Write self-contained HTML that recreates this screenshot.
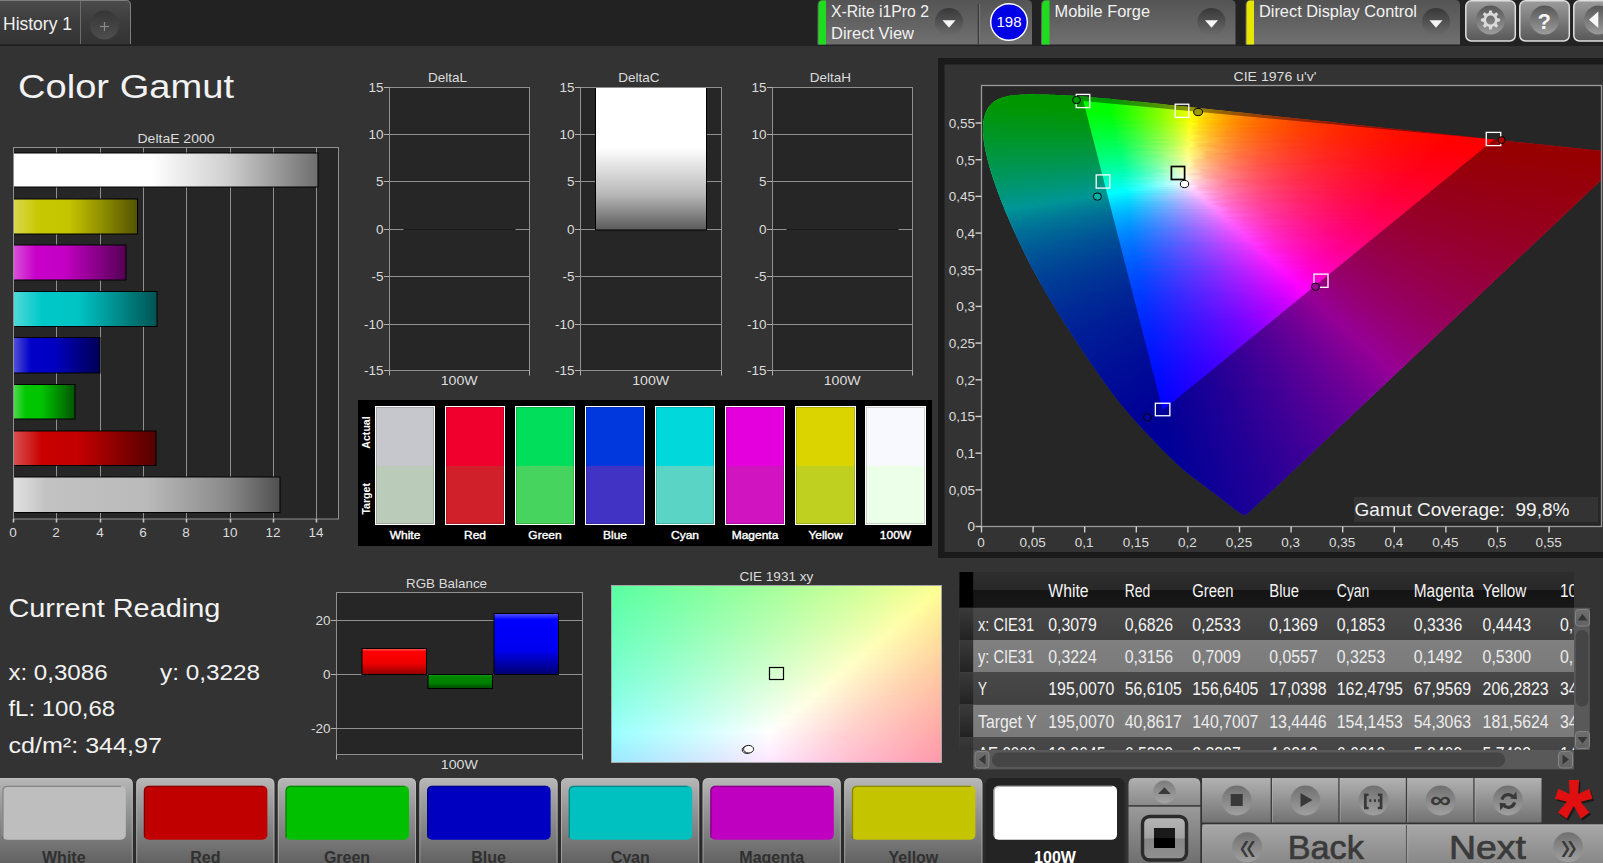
<!DOCTYPE html>
<html lang="en"><head><meta charset="utf-8"><title>Color Gamut</title>
<style>html,body{margin:0;padding:0;background:#333;overflow:hidden}svg{display:block}text{font-family:"Liberation Sans",sans-serif}</style></head>
<body>
<svg width="1603" height="863" viewBox="0 0 1603 863">
<defs>
<linearGradient id="g1" x1="0" y1="0" x2="0" y2="1"><stop offset="0" stop-color="#4c4c4c"/><stop offset="0.5" stop-color="#3c3c3c"/><stop offset="1" stop-color="#333333"/></linearGradient>
<linearGradient id="g2" x1="0" y1="0" x2="0" y2="1"><stop offset="0" stop-color="#363636"/><stop offset="1" stop-color="#4e4e4e"/></linearGradient>
<linearGradient id="g3" x1="0" y1="0" x2="0" y2="1"><stop offset="0" stop-color="#545454"/><stop offset="1" stop-color="#707070"/></linearGradient>
<linearGradient id="g4" x1="0" y1="0" x2="0" y2="1"><stop offset="0" stop-color="#383838"/><stop offset="1" stop-color="#6c6c6c"/></linearGradient>
<linearGradient id="g5" x1="0" y1="0" x2="0" y2="1"><stop offset="0" stop-color="#9c9c9c"/><stop offset="1" stop-color="#585858"/></linearGradient>
<linearGradient id="g6" x1="0" y1="0" x2="0" y2="1"><stop offset="0" stop-color="#565656"/><stop offset="1" stop-color="#9c9c9c"/></linearGradient>
<linearGradient id="g7" x1="0" y1="0" x2="1" y2="0"><stop offset="0" stop-color="#ffffff"/><stop offset="0.45" stop-color="#ffffff"/><stop offset="0.7" stop-color="#d0d0d0"/><stop offset="1" stop-color="#6e6e6e"/></linearGradient>
<linearGradient id="g8" x1="0" y1="0" x2="1" y2="0"><stop offset="0" stop-color="#d9d951"/><stop offset="0.2" stop-color="#c8c800"/><stop offset="0.45" stop-color="#c4c400"/><stop offset="1" stop-color="#545400"/></linearGradient>
<linearGradient id="g9" x1="0" y1="0" x2="1" y2="0"><stop offset="0" stop-color="#d951d9"/><stop offset="0.2" stop-color="#c800c8"/><stop offset="0.45" stop-color="#c400c4"/><stop offset="1" stop-color="#540054"/></linearGradient>
<linearGradient id="g10" x1="0" y1="0" x2="1" y2="0"><stop offset="0" stop-color="#51d9d9"/><stop offset="0.2" stop-color="#00c8c8"/><stop offset="0.45" stop-color="#00c4c4"/><stop offset="1" stop-color="#005454"/></linearGradient>
<linearGradient id="g11" x1="0" y1="0" x2="1" y2="0"><stop offset="0" stop-color="#5151d9"/><stop offset="0.2" stop-color="#0000c8"/><stop offset="0.45" stop-color="#0000c4"/><stop offset="1" stop-color="#000054"/></linearGradient>
<linearGradient id="g12" x1="0" y1="0" x2="1" y2="0"><stop offset="0" stop-color="#51d951"/><stop offset="0.2" stop-color="#00c800"/><stop offset="0.45" stop-color="#00c400"/><stop offset="1" stop-color="#005400"/></linearGradient>
<linearGradient id="g13" x1="0" y1="0" x2="1" y2="0"><stop offset="0" stop-color="#d95151"/><stop offset="0.2" stop-color="#c80000"/><stop offset="0.45" stop-color="#c40000"/><stop offset="1" stop-color="#540000"/></linearGradient>
<linearGradient id="g14" x1="0" y1="0" x2="1" y2="0"><stop offset="0" stop-color="#e2e2e2"/><stop offset="0.12" stop-color="#c2c2c2"/><stop offset="0.5" stop-color="#bababa"/><stop offset="0.8" stop-color="#8a8a8a"/><stop offset="1" stop-color="#505050"/></linearGradient>
<linearGradient id="g15" x1="0" y1="0" x2="0" y2="1"><stop offset="0" stop-color="#ffffff"/><stop offset="0.42" stop-color="#ffffff"/><stop offset="0.75" stop-color="#b8b8b8"/><stop offset="1" stop-color="#5a5a5a"/></linearGradient>
<linearGradient id="g16" x1="1015" y1="0" x2="1061" y2="0" gradientUnits="userSpaceOnUse"><stop offset="0" stop-color="#00ff00"/><stop offset="1" stop-color="#00ff00"/></linearGradient>
<linearGradient id="g17" x1="1003" y1="0" x2="1090" y2="0" gradientUnits="userSpaceOnUse"><stop offset="0" stop-color="#00ff00"/><stop offset="0.92" stop-color="#00ff00"/><stop offset="1" stop-color="#00ff00"/></linearGradient>
<linearGradient id="g18" x1="997" y1="0" x2="1112" y2="0" gradientUnits="userSpaceOnUse"><stop offset="0" stop-color="#00ff00"/><stop offset="0.7" stop-color="#00ff00"/><stop offset="0.97" stop-color="#00ff00"/><stop offset="1" stop-color="#09ff00"/></linearGradient>
<linearGradient id="g19" x1="993" y1="0" x2="1133" y2="0" gradientUnits="userSpaceOnUse"><stop offset="0" stop-color="#00ff00"/><stop offset="0.57" stop-color="#00ff00"/><stop offset="0.83" stop-color="#01ff00"/><stop offset="1" stop-color="#3dff00"/></linearGradient>
<linearGradient id="g20" x1="991" y1="0" x2="1153" y2="0" gradientUnits="userSpaceOnUse"><stop offset="0" stop-color="#00ff00"/><stop offset="0.49" stop-color="#00ff00"/><stop offset="0.73" stop-color="#00ff00"/><stop offset="0.89" stop-color="#41ff00"/><stop offset="1" stop-color="#74ff00"/></linearGradient>
<linearGradient id="g21" x1="989" y1="0" x2="1172" y2="0" gradientUnits="userSpaceOnUse"><stop offset="0" stop-color="#00ff04"/><stop offset="0.2" stop-color="#00ff00"/><stop offset="0.64" stop-color="#00ff00"/><stop offset="0.66" stop-color="#00ff00"/><stop offset="0.78" stop-color="#39ff00"/><stop offset="0.91" stop-color="#7dff00"/><stop offset="1" stop-color="#b0ff00"/></linearGradient>
<linearGradient id="g22" x1="987" y1="0" x2="1191" y2="0" gradientUnits="userSpaceOnUse"><stop offset="0" stop-color="#00ff08"/><stop offset="0.3" stop-color="#00ff00"/><stop offset="0.6" stop-color="#01ff00"/><stop offset="0.73" stop-color="#43ff00"/><stop offset="0.84" stop-color="#86ff00"/><stop offset="0.95" stop-color="#ccff00"/><stop offset="1" stop-color="#f5ff00"/></linearGradient>
<linearGradient id="g23" x1="986" y1="0" x2="1210" y2="0" gradientUnits="userSpaceOnUse"><stop offset="0" stop-color="#00ff0c"/><stop offset="0.36" stop-color="#00ff00"/><stop offset="0.55" stop-color="#00ff00"/><stop offset="0.67" stop-color="#40ff00"/><stop offset="0.77" stop-color="#83ff00"/><stop offset="0.86" stop-color="#c9ff00"/><stop offset="0.92" stop-color="#feff00"/><stop offset="0.98" stop-color="#ffd400"/><stop offset="1" stop-color="#ffc800"/></linearGradient>
<linearGradient id="g24" x1="985" y1="0" x2="1228" y2="0" gradientUnits="userSpaceOnUse"><stop offset="0" stop-color="#00ff10"/><stop offset="0.33" stop-color="#00ff04"/><stop offset="0.45" stop-color="#00ff00"/><stop offset="0.51" stop-color="#00ff00"/><stop offset="0.6" stop-color="#37ff00"/><stop offset="0.7" stop-color="#7aff00"/><stop offset="0.79" stop-color="#bfff00"/><stop offset="0.86" stop-color="#ffff00"/><stop offset="0.9" stop-color="#ffd900"/><stop offset="0.95" stop-color="#ffb500"/><stop offset="1" stop-color="#ff9e00"/></linearGradient>
<linearGradient id="g25" x1="984" y1="0" x2="1247" y2="0" gradientUnits="userSpaceOnUse"><stop offset="0" stop-color="#00ff13"/><stop offset="0.3" stop-color="#00ff08"/><stop offset="0.48" stop-color="#01ff00"/><stop offset="0.58" stop-color="#42ff00"/><stop offset="0.67" stop-color="#86ff00"/><stop offset="0.74" stop-color="#caff00"/><stop offset="0.79" stop-color="#ffff00"/><stop offset="0.83" stop-color="#ffdb00"/><stop offset="0.88" stop-color="#ffb700"/><stop offset="0.94" stop-color="#ff9500"/><stop offset="1" stop-color="#ff7d00"/></linearGradient>
<linearGradient id="g26" x1="983" y1="0" x2="1266" y2="0" gradientUnits="userSpaceOnUse"><stop offset="0" stop-color="#00ff17"/><stop offset="0.28" stop-color="#00ff0d"/><stop offset="0.45" stop-color="#00ff04"/><stop offset="0.54" stop-color="#41ff00"/><stop offset="0.62" stop-color="#83ff00"/><stop offset="0.69" stop-color="#c7ff00"/><stop offset="0.74" stop-color="#fffe00"/><stop offset="0.78" stop-color="#ffda00"/><stop offset="0.82" stop-color="#ffb600"/><stop offset="0.88" stop-color="#ff9400"/><stop offset="0.95" stop-color="#ff7600"/><stop offset="1" stop-color="#ff6400"/></linearGradient>
<linearGradient id="g27" x1="983" y1="0" x2="1285" y2="0" gradientUnits="userSpaceOnUse"><stop offset="0" stop-color="#00ff1b"/><stop offset="0.26" stop-color="#00ff11"/><stop offset="0.42" stop-color="#00ff09"/><stop offset="0.49" stop-color="#36ff05"/><stop offset="0.57" stop-color="#79ff00"/><stop offset="0.64" stop-color="#bcff00"/><stop offset="0.69" stop-color="#fdff00"/><stop offset="0.7" stop-color="#fff900"/><stop offset="0.74" stop-color="#ffd300"/><stop offset="0.78" stop-color="#ffb000"/><stop offset="0.83" stop-color="#ff9000"/><stop offset="0.9" stop-color="#ff7100"/><stop offset="0.98" stop-color="#ff5600"/><stop offset="1" stop-color="#ff5000"/></linearGradient>
<linearGradient id="g28" x1="982" y1="0" x2="1303" y2="0" gradientUnits="userSpaceOnUse"><stop offset="0" stop-color="#00ff1f"/><stop offset="0.25" stop-color="#00ff16"/><stop offset="0.4" stop-color="#01ff0e"/><stop offset="0.48" stop-color="#43ff09"/><stop offset="0.55" stop-color="#86ff05"/><stop offset="0.61" stop-color="#cbff00"/><stop offset="0.65" stop-color="#feff00"/><stop offset="0.69" stop-color="#ffd200"/><stop offset="0.74" stop-color="#ffb000"/><stop offset="0.79" stop-color="#ff8f00"/><stop offset="0.85" stop-color="#ff7100"/><stop offset="0.93" stop-color="#ff5500"/><stop offset="1" stop-color="#ff4100"/></linearGradient>
<linearGradient id="g29" x1="982" y1="0" x2="1322" y2="0" gradientUnits="userSpaceOnUse"><stop offset="0" stop-color="#00ff22"/><stop offset="0.24" stop-color="#00ff1a"/><stop offset="0.38" stop-color="#00ff13"/><stop offset="0.45" stop-color="#40ff0f"/><stop offset="0.52" stop-color="#82ff0a"/><stop offset="0.58" stop-color="#c8ff06"/><stop offset="0.62" stop-color="#ffff02"/><stop offset="0.65" stop-color="#ffd800"/><stop offset="0.69" stop-color="#ffb600"/><stop offset="0.73" stop-color="#ff9500"/><stop offset="0.79" stop-color="#ff7700"/><stop offset="0.86" stop-color="#ff5a00"/><stop offset="0.95" stop-color="#ff3f00"/><stop offset="1" stop-color="#ff3400"/></linearGradient>
<linearGradient id="g30" x1="982" y1="0" x2="1341" y2="0" gradientUnits="userSpaceOnUse"><stop offset="0" stop-color="#00ff26"/><stop offset="0.22" stop-color="#00ff1f"/><stop offset="0.36" stop-color="#00ff18"/><stop offset="0.42" stop-color="#31ff15"/><stop offset="0.48" stop-color="#72ff11"/><stop offset="0.53" stop-color="#b6ff0d"/><stop offset="0.58" stop-color="#ffff09"/><stop offset="0.61" stop-color="#ffda05"/><stop offset="0.65" stop-color="#ffb802"/><stop offset="0.69" stop-color="#ff9600"/><stop offset="0.74" stop-color="#ff7700"/><stop offset="0.81" stop-color="#ff5a00"/><stop offset="0.89" stop-color="#ff4000"/><stop offset="1" stop-color="#ff2900"/></linearGradient>
<linearGradient id="g31" x1="982" y1="0" x2="1360" y2="0" gradientUnits="userSpaceOnUse"><stop offset="0" stop-color="#00ff2a"/><stop offset="0.21" stop-color="#00ff23"/><stop offset="0.35" stop-color="#01ff1d"/><stop offset="0.41" stop-color="#41ff1a"/><stop offset="0.47" stop-color="#86ff16"/><stop offset="0.52" stop-color="#cdff12"/><stop offset="0.55" stop-color="#fcff10"/><stop offset="0.56" stop-color="#fffe0f"/><stop offset="0.58" stop-color="#ffd90b"/><stop offset="0.61" stop-color="#ffb707"/><stop offset="0.65" stop-color="#ff9603"/><stop offset="0.7" stop-color="#ff7600"/><stop offset="0.77" stop-color="#ff5900"/><stop offset="0.85" stop-color="#ff3f00"/><stop offset="0.96" stop-color="#ff2700"/><stop offset="1" stop-color="#ff1f00"/></linearGradient>
<linearGradient id="g32" x1="981" y1="0" x2="1378" y2="0" gradientUnits="userSpaceOnUse"><stop offset="0" stop-color="#00ff2e"/><stop offset="0.2" stop-color="#00ff28"/><stop offset="0.33" stop-color="#00ff22"/><stop offset="0.39" stop-color="#41ff1f"/><stop offset="0.45" stop-color="#85ff1c"/><stop offset="0.5" stop-color="#c9ff19"/><stop offset="0.53" stop-color="#fdff16"/><stop offset="0.53" stop-color="#fff915"/><stop offset="0.56" stop-color="#ffd510"/><stop offset="0.59" stop-color="#ffb30c"/><stop offset="0.63" stop-color="#ff9308"/><stop offset="0.68" stop-color="#ff7403"/><stop offset="0.74" stop-color="#ff5800"/><stop offset="0.81" stop-color="#ff3d00"/><stop offset="0.92" stop-color="#ff2600"/><stop offset="1" stop-color="#ff1800"/></linearGradient>
<linearGradient id="g33" x1="981" y1="0" x2="1397" y2="0" gradientUnits="userSpaceOnUse"><stop offset="0" stop-color="#00ff32"/><stop offset="0.19" stop-color="#00ff2d"/><stop offset="0.32" stop-color="#00ff28"/><stop offset="0.36" stop-color="#2cff26"/><stop offset="0.41" stop-color="#6eff23"/><stop offset="0.46" stop-color="#b3ff20"/><stop offset="0.5" stop-color="#faff1d"/><stop offset="0.5" stop-color="#feff1d"/><stop offset="0.53" stop-color="#ffd416"/><stop offset="0.56" stop-color="#ffb211"/><stop offset="0.6" stop-color="#ff920c"/><stop offset="0.64" stop-color="#ff7307"/><stop offset="0.7" stop-color="#ff5703"/><stop offset="0.78" stop-color="#ff3d00"/><stop offset="0.88" stop-color="#ff2500"/><stop offset="1" stop-color="#ff1100"/></linearGradient>
<linearGradient id="g34" x1="981" y1="0" x2="1416" y2="0" gradientUnits="userSpaceOnUse"><stop offset="0" stop-color="#00ff36"/><stop offset="0.18" stop-color="#00ff31"/><stop offset="0.31" stop-color="#01ff2d"/><stop offset="0.36" stop-color="#43ff2b"/><stop offset="0.41" stop-color="#85ff28"/><stop offset="0.45" stop-color="#caff26"/><stop offset="0.48" stop-color="#ffff24"/><stop offset="0.51" stop-color="#ffd61d"/><stop offset="0.54" stop-color="#ffb417"/><stop offset="0.57" stop-color="#ff9311"/><stop offset="0.61" stop-color="#ff740b"/><stop offset="0.67" stop-color="#ff5706"/><stop offset="0.74" stop-color="#ff3d01"/><stop offset="0.83" stop-color="#ff2500"/><stop offset="0.96" stop-color="#ff0f00"/><stop offset="1" stop-color="#ff0a00"/></linearGradient>
<linearGradient id="g35" x1="981" y1="0" x2="1435" y2="0" gradientUnits="userSpaceOnUse"><stop offset="0" stop-color="#00ff3a"/><stop offset="0.18" stop-color="#00ff36"/><stop offset="0.29" stop-color="#00ff32"/><stop offset="0.34" stop-color="#3cff31"/><stop offset="0.39" stop-color="#7eff2f"/><stop offset="0.43" stop-color="#c3ff2d"/><stop offset="0.46" stop-color="#fffe2b"/><stop offset="0.48" stop-color="#ffd923"/><stop offset="0.51" stop-color="#ffb61c"/><stop offset="0.54" stop-color="#ff9416"/><stop offset="0.58" stop-color="#ff7610"/><stop offset="0.63" stop-color="#ff590a"/><stop offset="0.7" stop-color="#ff3f05"/><stop offset="0.79" stop-color="#ff2700"/><stop offset="0.91" stop-color="#ff1100"/><stop offset="1" stop-color="#ff0500"/></linearGradient>
<linearGradient id="g36" x1="982" y1="0" x2="1454" y2="0" gradientUnits="userSpaceOnUse"><stop offset="0" stop-color="#00ff3e"/><stop offset="0.17" stop-color="#00ff3b"/><stop offset="0.28" stop-color="#00ff38"/><stop offset="0.31" stop-color="#28ff37"/><stop offset="0.36" stop-color="#6aff35"/><stop offset="0.4" stop-color="#b0ff34"/><stop offset="0.44" stop-color="#f8ff32"/><stop offset="0.44" stop-color="#fffe32"/><stop offset="0.46" stop-color="#ffd829"/><stop offset="0.49" stop-color="#ffb522"/><stop offset="0.52" stop-color="#ff931a"/><stop offset="0.56" stop-color="#ff7514"/><stop offset="0.61" stop-color="#ff580d"/><stop offset="0.67" stop-color="#ff3e08"/><stop offset="0.76" stop-color="#ff2602"/><stop offset="0.86" stop-color="#ff1200"/><stop offset="1" stop-color="#ff0000"/></linearGradient>
<linearGradient id="g37" x1="982" y1="0" x2="1473" y2="0" gradientUnits="userSpaceOnUse"><stop offset="0" stop-color="#00ff42"/><stop offset="0.16" stop-color="#00ff40"/><stop offset="0.27" stop-color="#01ff3d"/><stop offset="0.32" stop-color="#41ff3c"/><stop offset="0.36" stop-color="#85ff3b"/><stop offset="0.4" stop-color="#cbff3a"/><stop offset="0.42" stop-color="#fdff39"/><stop offset="0.43" stop-color="#fff837"/><stop offset="0.45" stop-color="#ffd42f"/><stop offset="0.47" stop-color="#ffb126"/><stop offset="0.5" stop-color="#ff901e"/><stop offset="0.54" stop-color="#ff7117"/><stop offset="0.59" stop-color="#ff5510"/><stop offset="0.65" stop-color="#ff3b0a"/><stop offset="0.74" stop-color="#ff2304"/><stop offset="0.85" stop-color="#ff0d00"/><stop offset="0.97" stop-color="#ff0000"/><stop offset="1" stop-color="#ff0000"/></linearGradient>
<linearGradient id="g38" x1="982" y1="0" x2="1491" y2="0" gradientUnits="userSpaceOnUse"><stop offset="0" stop-color="#00ff46"/><stop offset="0.16" stop-color="#00ff44"/><stop offset="0.26" stop-color="#00ff43"/><stop offset="0.3" stop-color="#3bff43"/><stop offset="0.34" stop-color="#7eff42"/><stop offset="0.38" stop-color="#c4ff41"/><stop offset="0.41" stop-color="#feff40"/><stop offset="0.43" stop-color="#ffd335"/><stop offset="0.46" stop-color="#ffb02c"/><stop offset="0.49" stop-color="#ff8f23"/><stop offset="0.52" stop-color="#ff701b"/><stop offset="0.57" stop-color="#ff5413"/><stop offset="0.63" stop-color="#ff3a0c"/><stop offset="0.71" stop-color="#ff2206"/><stop offset="0.82" stop-color="#ff0d01"/><stop offset="0.93" stop-color="#ff0000"/><stop offset="1" stop-color="#ff0000"/></linearGradient>
<linearGradient id="g39" x1="982" y1="0" x2="1510" y2="0" gradientUnits="userSpaceOnUse"><stop offset="0" stop-color="#00ff4a"/><stop offset="0.15" stop-color="#00ff49"/><stop offset="0.25" stop-color="#00ff49"/><stop offset="0.27" stop-color="#14ff49"/><stop offset="0.31" stop-color="#56ff49"/><stop offset="0.35" stop-color="#9aff48"/><stop offset="0.38" stop-color="#e1ff48"/><stop offset="0.39" stop-color="#ffff48"/><stop offset="0.41" stop-color="#ffd83d"/><stop offset="0.44" stop-color="#ffb432"/><stop offset="0.46" stop-color="#ff9429"/><stop offset="0.5" stop-color="#ff7520"/><stop offset="0.54" stop-color="#ff5818"/><stop offset="0.59" stop-color="#ff3e11"/><stop offset="0.67" stop-color="#ff260a"/><stop offset="0.77" stop-color="#ff1004"/><stop offset="0.89" stop-color="#ff0000"/><stop offset="1" stop-color="#ff0000"/></linearGradient>
<linearGradient id="g40" x1="982" y1="0" x2="1529" y2="0" gradientUnits="userSpaceOnUse"><stop offset="0" stop-color="#00ff4e"/><stop offset="0.15" stop-color="#00ff4e"/><stop offset="0.24" stop-color="#00ff4f"/><stop offset="0.29" stop-color="#43ff4f"/><stop offset="0.32" stop-color="#85ff4f"/><stop offset="0.36" stop-color="#c9ff4f"/><stop offset="0.38" stop-color="#fffe4f"/><stop offset="0.4" stop-color="#ffdb44"/><stop offset="0.42" stop-color="#ffb93a"/><stop offset="0.44" stop-color="#ff972f"/><stop offset="0.47" stop-color="#ff7926"/><stop offset="0.51" stop-color="#ff5c1d"/><stop offset="0.56" stop-color="#ff4115"/><stop offset="0.63" stop-color="#ff290d"/><stop offset="0.73" stop-color="#ff1306"/><stop offset="0.85" stop-color="#ff0000"/><stop offset="1" stop-color="#ff0000"/><stop offset="1" stop-color="#ff0000"/></linearGradient>
<linearGradient id="g41" x1="983" y1="0" x2="1547" y2="0" gradientUnits="userSpaceOnUse"><stop offset="0" stop-color="#00ff52"/><stop offset="0.14" stop-color="#00ff54"/><stop offset="0.24" stop-color="#00ff55"/><stop offset="0.27" stop-color="#39ff55"/><stop offset="0.31" stop-color="#7aff56"/><stop offset="0.34" stop-color="#bdff56"/><stop offset="0.37" stop-color="#fcff57"/><stop offset="0.37" stop-color="#fffd56"/><stop offset="0.38" stop-color="#ffda4b"/><stop offset="0.4" stop-color="#ffb83f"/><stop offset="0.43" stop-color="#ff9634"/><stop offset="0.46" stop-color="#ff782a"/><stop offset="0.5" stop-color="#ff5b20"/><stop offset="0.55" stop-color="#ff4118"/><stop offset="0.61" stop-color="#ff2810"/><stop offset="0.7" stop-color="#ff1208"/><stop offset="0.82" stop-color="#ff0002"/><stop offset="0.95" stop-color="#ff0000"/><stop offset="1" stop-color="#ff0000"/></linearGradient>
<linearGradient id="g42" x1="983" y1="0" x2="1566" y2="0" gradientUnits="userSpaceOnUse"><stop offset="0" stop-color="#00ff57"/><stop offset="0.14" stop-color="#00ff59"/><stop offset="0.23" stop-color="#00ff5b"/><stop offset="0.24" stop-color="#0cff5b"/><stop offset="0.27" stop-color="#4eff5c"/><stop offset="0.31" stop-color="#93ff5d"/><stop offset="0.34" stop-color="#daff5e"/><stop offset="0.35" stop-color="#fdff5f"/><stop offset="0.36" stop-color="#fff85c"/><stop offset="0.37" stop-color="#ffd24f"/><stop offset="0.39" stop-color="#ffaf42"/><stop offset="0.42" stop-color="#ff8f37"/><stop offset="0.45" stop-color="#ff712c"/><stop offset="0.49" stop-color="#ff5522"/><stop offset="0.54" stop-color="#ff3a19"/><stop offset="0.61" stop-color="#ff2310"/><stop offset="0.7" stop-color="#ff0d09"/><stop offset="0.79" stop-color="#ff0004"/><stop offset="0.93" stop-color="#ff0000"/><stop offset="1" stop-color="#ff0000"/></linearGradient>
<linearGradient id="g43" x1="983" y1="0" x2="1585" y2="0" gradientUnits="userSpaceOnUse"><stop offset="0" stop-color="#00ff5b"/><stop offset="0.13" stop-color="#00ff5e"/><stop offset="0.22" stop-color="#00ff61"/><stop offset="0.26" stop-color="#41ff62"/><stop offset="0.29" stop-color="#84ff64"/><stop offset="0.32" stop-color="#caff65"/><stop offset="0.34" stop-color="#feff66"/><stop offset="0.36" stop-color="#ffd556"/><stop offset="0.38" stop-color="#ffb34a"/><stop offset="0.4" stop-color="#ff923d"/><stop offset="0.43" stop-color="#ff7432"/><stop offset="0.47" stop-color="#ff5827"/><stop offset="0.51" stop-color="#ff3d1d"/><stop offset="0.58" stop-color="#ff2514"/><stop offset="0.66" stop-color="#ff100c"/><stop offset="0.76" stop-color="#ff0005"/><stop offset="0.9" stop-color="#ff0000"/><stop offset="1" stop-color="#ff0000"/></linearGradient>
<linearGradient id="g44" x1="984" y1="0" x2="1602" y2="0" gradientUnits="userSpaceOnUse"><stop offset="0" stop-color="#00ff5f"/><stop offset="0.13" stop-color="#00ff63"/><stop offset="0.22" stop-color="#00ff67"/><stop offset="0.25" stop-color="#37ff69"/><stop offset="0.28" stop-color="#7aff6b"/><stop offset="0.31" stop-color="#beff6d"/><stop offset="0.33" stop-color="#ffff6e"/><stop offset="0.35" stop-color="#ffd75e"/><stop offset="0.37" stop-color="#ffb551"/><stop offset="0.39" stop-color="#ff9343"/><stop offset="0.42" stop-color="#ff7537"/><stop offset="0.45" stop-color="#ff582b"/><stop offset="0.5" stop-color="#ff3e21"/><stop offset="0.56" stop-color="#ff2617"/><stop offset="0.64" stop-color="#ff110e"/><stop offset="0.74" stop-color="#ff0007"/><stop offset="0.87" stop-color="#ff0001"/><stop offset="1" stop-color="#ff0000"/><stop offset="1" stop-color="#ff0000"/></linearGradient>
<linearGradient id="g45" x1="984" y1="0" x2="1602" y2="0" gradientUnits="userSpaceOnUse"><stop offset="0" stop-color="#00ff64"/><stop offset="0.13" stop-color="#00ff69"/><stop offset="0.22" stop-color="#01ff6d"/><stop offset="0.25" stop-color="#43ff70"/><stop offset="0.28" stop-color="#84ff72"/><stop offset="0.31" stop-color="#cbff75"/><stop offset="0.33" stop-color="#fffe76"/><stop offset="0.35" stop-color="#ffda67"/><stop offset="0.36" stop-color="#ffb758"/><stop offset="0.39" stop-color="#ff974a"/><stop offset="0.41" stop-color="#ff773c"/><stop offset="0.45" stop-color="#ff5b30"/><stop offset="0.49" stop-color="#ff4125"/><stop offset="0.55" stop-color="#ff281b"/><stop offset="0.63" stop-color="#ff1211"/><stop offset="0.73" stop-color="#ff0009"/><stop offset="0.86" stop-color="#ff0003"/><stop offset="0.99" stop-color="#ff0000"/><stop offset="1" stop-color="#ff0000"/></linearGradient>
<linearGradient id="g46" x1="985" y1="0" x2="1602" y2="0" gradientUnits="userSpaceOnUse"><stop offset="0" stop-color="#00ff68"/><stop offset="0.13" stop-color="#00ff6e"/><stop offset="0.22" stop-color="#00ff74"/><stop offset="0.25" stop-color="#42ff77"/><stop offset="0.28" stop-color="#84ff79"/><stop offset="0.31" stop-color="#c7ff7c"/><stop offset="0.33" stop-color="#fcff7f"/><stop offset="0.33" stop-color="#fffd7e"/><stop offset="0.35" stop-color="#ffd96d"/><stop offset="0.36" stop-color="#ffb65d"/><stop offset="0.38" stop-color="#ff964f"/><stop offset="0.41" stop-color="#ff7641"/><stop offset="0.45" stop-color="#ff5a34"/><stop offset="0.49" stop-color="#ff4028"/><stop offset="0.55" stop-color="#ff281d"/><stop offset="0.63" stop-color="#ff1213"/><stop offset="0.73" stop-color="#ff000b"/><stop offset="0.86" stop-color="#ff0004"/><stop offset="0.99" stop-color="#ff0000"/><stop offset="1" stop-color="#ff0000"/></linearGradient>
<linearGradient id="g47" x1="985" y1="0" x2="1602" y2="0" gradientUnits="userSpaceOnUse"><stop offset="0" stop-color="#00ff6d"/><stop offset="0.13" stop-color="#00ff74"/><stop offset="0.22" stop-color="#00ff7a"/><stop offset="0.24" stop-color="#32ff7d"/><stop offset="0.28" stop-color="#75ff80"/><stop offset="0.3" stop-color="#bbff84"/><stop offset="0.33" stop-color="#fdff87"/><stop offset="0.33" stop-color="#fff884"/><stop offset="0.35" stop-color="#ffd473"/><stop offset="0.36" stop-color="#ffb262"/><stop offset="0.39" stop-color="#ff9152"/><stop offset="0.41" stop-color="#ff7244"/><stop offset="0.45" stop-color="#ff5636"/><stop offset="0.5" stop-color="#ff3c2a"/><stop offset="0.56" stop-color="#ff241e"/><stop offset="0.64" stop-color="#ff0e14"/><stop offset="0.73" stop-color="#ff000d"/><stop offset="0.86" stop-color="#ff0006"/><stop offset="0.99" stop-color="#ff0001"/><stop offset="1" stop-color="#ff0001"/></linearGradient>
<linearGradient id="g48" x1="985" y1="0" x2="1602" y2="0" gradientUnits="userSpaceOnUse"><stop offset="0" stop-color="#00ff71"/><stop offset="0.13" stop-color="#00ff79"/><stop offset="0.22" stop-color="#01ff81"/><stop offset="0.25" stop-color="#41ff85"/><stop offset="0.28" stop-color="#84ff88"/><stop offset="0.31" stop-color="#c8ff8c"/><stop offset="0.33" stop-color="#feff90"/><stop offset="0.35" stop-color="#ffd379"/><stop offset="0.36" stop-color="#ffb168"/><stop offset="0.39" stop-color="#ff9057"/><stop offset="0.41" stop-color="#ff7148"/><stop offset="0.45" stop-color="#ff553a"/><stop offset="0.5" stop-color="#ff3b2d"/><stop offset="0.56" stop-color="#ff2321"/><stop offset="0.64" stop-color="#ff0e16"/><stop offset="0.73" stop-color="#ff000f"/><stop offset="0.86" stop-color="#ff0007"/><stop offset="0.99" stop-color="#ff0002"/><stop offset="1" stop-color="#ff0002"/></linearGradient>
<linearGradient id="g49" x1="986" y1="0" x2="1602" y2="0" gradientUnits="userSpaceOnUse"><stop offset="0" stop-color="#00ff76"/><stop offset="0.13" stop-color="#00ff7f"/><stop offset="0.22" stop-color="#00ff87"/><stop offset="0.25" stop-color="#41ff8c"/><stop offset="0.28" stop-color="#84ff90"/><stop offset="0.31" stop-color="#c8ff95"/><stop offset="0.33" stop-color="#ffff98"/><stop offset="0.34" stop-color="#ffd984"/><stop offset="0.36" stop-color="#ffb571"/><stop offset="0.38" stop-color="#ff9560"/><stop offset="0.41" stop-color="#ff7750"/><stop offset="0.44" stop-color="#ff5a40"/><stop offset="0.49" stop-color="#ff3f32"/><stop offset="0.54" stop-color="#ff2725"/><stop offset="0.62" stop-color="#ff111a"/><stop offset="0.72" stop-color="#ff0011"/><stop offset="0.85" stop-color="#ff0009"/><stop offset="0.98" stop-color="#ff0003"/><stop offset="1" stop-color="#ff0003"/></linearGradient>
<linearGradient id="g50" x1="986" y1="0" x2="1602" y2="0" gradientUnits="userSpaceOnUse"><stop offset="0" stop-color="#00ff7a"/><stop offset="0.13" stop-color="#00ff85"/><stop offset="0.22" stop-color="#00ff8e"/><stop offset="0.24" stop-color="#2dff92"/><stop offset="0.27" stop-color="#6dff96"/><stop offset="0.3" stop-color="#afff9b"/><stop offset="0.33" stop-color="#fffea1"/><stop offset="0.34" stop-color="#ffd88b"/><stop offset="0.36" stop-color="#ffb477"/><stop offset="0.38" stop-color="#ff9465"/><stop offset="0.41" stop-color="#ff7654"/><stop offset="0.44" stop-color="#ff5944"/><stop offset="0.49" stop-color="#ff3e36"/><stop offset="0.54" stop-color="#ff2628"/><stop offset="0.62" stop-color="#ff101c"/><stop offset="0.72" stop-color="#ff0013"/><stop offset="0.85" stop-color="#ff000a"/><stop offset="0.98" stop-color="#ff0005"/><stop offset="1" stop-color="#ff0004"/></linearGradient>
<linearGradient id="g51" x1="987" y1="0" x2="1602" y2="0" gradientUnits="userSpaceOnUse"><stop offset="0" stop-color="#00ff7f"/><stop offset="0.13" stop-color="#00ff8a"/><stop offset="0.22" stop-color="#01ff95"/><stop offset="0.25" stop-color="#43ff9b"/><stop offset="0.28" stop-color="#87ffa0"/><stop offset="0.31" stop-color="#ceffa6"/><stop offset="0.33" stop-color="#fcffaa"/><stop offset="0.33" stop-color="#fffda9"/><stop offset="0.34" stop-color="#ffd793"/><stop offset="0.36" stop-color="#ffb37e"/><stop offset="0.38" stop-color="#ff936b"/><stop offset="0.41" stop-color="#ff7559"/><stop offset="0.44" stop-color="#ff5848"/><stop offset="0.48" stop-color="#ff3d39"/><stop offset="0.54" stop-color="#ff252b"/><stop offset="0.62" stop-color="#ff101e"/><stop offset="0.71" stop-color="#ff0014"/><stop offset="0.84" stop-color="#ff000c"/><stop offset="0.97" stop-color="#ff0006"/><stop offset="1" stop-color="#ff0005"/></linearGradient>
<linearGradient id="g52" x1="987" y1="0" x2="1602" y2="0" gradientUnits="userSpaceOnUse"><stop offset="0" stop-color="#00ff84"/><stop offset="0.13" stop-color="#00ff90"/><stop offset="0.22" stop-color="#00ff9c"/><stop offset="0.25" stop-color="#3fffa2"/><stop offset="0.28" stop-color="#83ffa8"/><stop offset="0.31" stop-color="#caffae"/><stop offset="0.33" stop-color="#fdffb3"/><stop offset="0.33" stop-color="#fff8ae"/><stop offset="0.34" stop-color="#ffd298"/><stop offset="0.36" stop-color="#ffaf82"/><stop offset="0.38" stop-color="#ff906f"/><stop offset="0.41" stop-color="#ff715c"/><stop offset="0.44" stop-color="#ff554b"/><stop offset="0.49" stop-color="#ff3b3b"/><stop offset="0.55" stop-color="#ff242d"/><stop offset="0.63" stop-color="#ff0e1f"/><stop offset="0.71" stop-color="#ff0016"/><stop offset="0.84" stop-color="#ff000d"/><stop offset="0.97" stop-color="#ff0007"/><stop offset="1" stop-color="#ff0006"/></linearGradient>
<linearGradient id="g53" x1="988" y1="0" x2="1602" y2="0" gradientUnits="userSpaceOnUse"><stop offset="0" stop-color="#00ff89"/><stop offset="0.13" stop-color="#00ff96"/><stop offset="0.21" stop-color="#00ffa3"/><stop offset="0.24" stop-color="#27ffa7"/><stop offset="0.27" stop-color="#69ffae"/><stop offset="0.29" stop-color="#acffb4"/><stop offset="0.32" stop-color="#f4ffbb"/><stop offset="0.32" stop-color="#feffbc"/><stop offset="0.34" stop-color="#ffd5a1"/><stop offset="0.36" stop-color="#ffb48c"/><stop offset="0.38" stop-color="#ff9377"/><stop offset="0.4" stop-color="#ff7463"/><stop offset="0.44" stop-color="#ff5852"/><stop offset="0.48" stop-color="#ff3e41"/><stop offset="0.54" stop-color="#ff2631"/><stop offset="0.61" stop-color="#ff1023"/><stop offset="0.71" stop-color="#ff0019"/><stop offset="0.84" stop-color="#ff000f"/><stop offset="0.97" stop-color="#ff0008"/><stop offset="1" stop-color="#ff0007"/></linearGradient>
<linearGradient id="g54" x1="989" y1="0" x2="1602" y2="0" gradientUnits="userSpaceOnUse"><stop offset="0" stop-color="#00ff8e"/><stop offset="0.13" stop-color="#00ff9d"/><stop offset="0.22" stop-color="#01ffab"/><stop offset="0.25" stop-color="#41ffb1"/><stop offset="0.28" stop-color="#83ffb8"/><stop offset="0.3" stop-color="#c6ffc0"/><stop offset="0.32" stop-color="#ffffc6"/><stop offset="0.34" stop-color="#ffd8ab"/><stop offset="0.35" stop-color="#ffb695"/><stop offset="0.38" stop-color="#ff947e"/><stop offset="0.4" stop-color="#ff7569"/><stop offset="0.43" stop-color="#ff5956"/><stop offset="0.48" stop-color="#ff3e45"/><stop offset="0.53" stop-color="#ff2735"/><stop offset="0.61" stop-color="#ff1126"/><stop offset="0.7" stop-color="#ff001b"/><stop offset="0.83" stop-color="#ff0010"/><stop offset="0.96" stop-color="#ff000a"/><stop offset="1" stop-color="#ff0008"/></linearGradient>
<linearGradient id="g55" x1="989" y1="0" x2="1602" y2="0" gradientUnits="userSpaceOnUse"><stop offset="0" stop-color="#00ff93"/><stop offset="0.13" stop-color="#00ffa3"/><stop offset="0.22" stop-color="#00ffb2"/><stop offset="0.25" stop-color="#3dffb9"/><stop offset="0.28" stop-color="#7fffc0"/><stop offset="0.3" stop-color="#c2ffc8"/><stop offset="0.32" stop-color="#fffece"/><stop offset="0.34" stop-color="#ffdbb6"/><stop offset="0.35" stop-color="#ffb89d"/><stop offset="0.37" stop-color="#ff9887"/><stop offset="0.4" stop-color="#ff7972"/><stop offset="0.43" stop-color="#ff5d5e"/><stop offset="0.47" stop-color="#ff424b"/><stop offset="0.52" stop-color="#ff293a"/><stop offset="0.6" stop-color="#ff132b"/><stop offset="0.69" stop-color="#ff001d"/><stop offset="0.83" stop-color="#ff0012"/><stop offset="0.96" stop-color="#ff000b"/><stop offset="1" stop-color="#ff0009"/></linearGradient>
<linearGradient id="g56" x1="990" y1="0" x2="1602" y2="0" gradientUnits="userSpaceOnUse"><stop offset="0" stop-color="#00ff98"/><stop offset="0.13" stop-color="#00ffa9"/><stop offset="0.21" stop-color="#00ffb9"/><stop offset="0.23" stop-color="#14ffbc"/><stop offset="0.26" stop-color="#55ffc4"/><stop offset="0.28" stop-color="#97ffcc"/><stop offset="0.31" stop-color="#dfffd5"/><stop offset="0.32" stop-color="#fcffd8"/><stop offset="0.32" stop-color="#fffdd7"/><stop offset="0.33" stop-color="#ffdabe"/><stop offset="0.35" stop-color="#ffb7a4"/><stop offset="0.37" stop-color="#ff978d"/><stop offset="0.4" stop-color="#ff7877"/><stop offset="0.43" stop-color="#ff5c62"/><stop offset="0.47" stop-color="#ff414f"/><stop offset="0.52" stop-color="#ff293d"/><stop offset="0.59" stop-color="#ff132d"/><stop offset="0.69" stop-color="#ff001f"/><stop offset="0.82" stop-color="#ff0014"/><stop offset="0.95" stop-color="#ff000c"/><stop offset="1" stop-color="#ff000a"/></linearGradient>
<linearGradient id="g57" x1="990" y1="0" x2="1602" y2="0" gradientUnits="userSpaceOnUse"><stop offset="0" stop-color="#00ff9d"/><stop offset="0.13" stop-color="#00ffaf"/><stop offset="0.22" stop-color="#01ffc1"/><stop offset="0.25" stop-color="#43ffca"/><stop offset="0.28" stop-color="#87ffd3"/><stop offset="0.3" stop-color="#ccffdc"/><stop offset="0.32" stop-color="#fdffe2"/><stop offset="0.32" stop-color="#fff7dd"/><stop offset="0.34" stop-color="#ffd5c3"/><stop offset="0.35" stop-color="#ffb3a9"/><stop offset="0.37" stop-color="#ff9391"/><stop offset="0.4" stop-color="#ff757a"/><stop offset="0.43" stop-color="#ff5a65"/><stop offset="0.47" stop-color="#ff3f51"/><stop offset="0.52" stop-color="#ff273f"/><stop offset="0.6" stop-color="#ff122f"/><stop offset="0.69" stop-color="#ff0021"/><stop offset="0.82" stop-color="#ff0015"/><stop offset="0.95" stop-color="#ff000e"/><stop offset="1" stop-color="#ff000b"/></linearGradient>
<linearGradient id="g58" x1="991" y1="0" x2="1602" y2="0" gradientUnits="userSpaceOnUse"><stop offset="0" stop-color="#00ffa2"/><stop offset="0.13" stop-color="#00ffb6"/><stop offset="0.21" stop-color="#00ffc9"/><stop offset="0.24" stop-color="#3bffd1"/><stop offset="0.27" stop-color="#7fffdb"/><stop offset="0.3" stop-color="#c4ffe4"/><stop offset="0.32" stop-color="#feffec"/><stop offset="0.34" stop-color="#ffd4ca"/><stop offset="0.35" stop-color="#ffb2b0"/><stop offset="0.37" stop-color="#ff9297"/><stop offset="0.4" stop-color="#ff747f"/><stop offset="0.43" stop-color="#ff596a"/><stop offset="0.47" stop-color="#ff3e55"/><stop offset="0.52" stop-color="#ff2742"/><stop offset="0.6" stop-color="#ff1131"/><stop offset="0.69" stop-color="#ff0023"/><stop offset="0.82" stop-color="#ff0017"/><stop offset="0.95" stop-color="#ff000f"/><stop offset="1" stop-color="#ff000c"/></linearGradient>
<linearGradient id="g59" x1="992" y1="0" x2="1602" y2="0" gradientUnits="userSpaceOnUse"><stop offset="0" stop-color="#00ffa7"/><stop offset="0.13" stop-color="#00ffbd"/><stop offset="0.21" stop-color="#00ffd1"/><stop offset="0.22" stop-color="#0bffd2"/><stop offset="0.25" stop-color="#4cffdc"/><stop offset="0.28" stop-color="#8fffe6"/><stop offset="0.3" stop-color="#d2fff0"/><stop offset="0.32" stop-color="#fffff7"/><stop offset="0.33" stop-color="#ffdad9"/><stop offset="0.35" stop-color="#ffb7bb"/><stop offset="0.37" stop-color="#ff96a1"/><stop offset="0.39" stop-color="#ff7787"/><stop offset="0.42" stop-color="#ff5a70"/><stop offset="0.46" stop-color="#ff405b"/><stop offset="0.51" stop-color="#ff2847"/><stop offset="0.59" stop-color="#ff1235"/><stop offset="0.68" stop-color="#ff0026"/><stop offset="0.81" stop-color="#ff0019"/><stop offset="0.94" stop-color="#ff0010"/><stop offset="1" stop-color="#ff000d"/></linearGradient>
<linearGradient id="g60" x1="992" y1="0" x2="1602" y2="0" gradientUnits="userSpaceOnUse"><stop offset="0" stop-color="#00ffac"/><stop offset="0.13" stop-color="#00ffc3"/><stop offset="0.21" stop-color="#01ffd9"/><stop offset="0.25" stop-color="#41ffe3"/><stop offset="0.27" stop-color="#82ffed"/><stop offset="0.3" stop-color="#c9fff9"/><stop offset="0.32" stop-color="#f9feff"/><stop offset="0.32" stop-color="#fefdff"/><stop offset="0.33" stop-color="#ffd9e1"/><stop offset="0.35" stop-color="#ffb5c3"/><stop offset="0.37" stop-color="#ff95a7"/><stop offset="0.39" stop-color="#ff768c"/><stop offset="0.42" stop-color="#ff5974"/><stop offset="0.46" stop-color="#ff3e5d"/><stop offset="0.52" stop-color="#ff2649"/><stop offset="0.59" stop-color="#ff1036"/><stop offset="0.68" stop-color="#ff0028"/><stop offset="0.81" stop-color="#ff001a"/><stop offset="0.94" stop-color="#ff0012"/><stop offset="1" stop-color="#ff000f"/></linearGradient>
<linearGradient id="g61" x1="993" y1="0" x2="1600" y2="0" gradientUnits="userSpaceOnUse"><stop offset="0" stop-color="#00ffb2"/><stop offset="0.13" stop-color="#00ffc9"/><stop offset="0.21" stop-color="#00ffe1"/><stop offset="0.24" stop-color="#39ffeb"/><stop offset="0.27" stop-color="#7afff5"/><stop offset="0.29" stop-color="#b6feff"/><stop offset="0.32" stop-color="#fdf1ff"/><stop offset="0.32" stop-color="#ffe9f9"/><stop offset="0.34" stop-color="#ffc5d9"/><stop offset="0.36" stop-color="#ffa3ba"/><stop offset="0.38" stop-color="#ff849f"/><stop offset="0.41" stop-color="#ff6685"/><stop offset="0.44" stop-color="#ff4a6c"/><stop offset="0.49" stop-color="#ff3156"/><stop offset="0.55" stop-color="#ff1b42"/><stop offset="0.64" stop-color="#ff0630"/><stop offset="0.68" stop-color="#ff002a"/><stop offset="0.81" stop-color="#ff001c"/><stop offset="0.95" stop-color="#ff0013"/><stop offset="1" stop-color="#ff0010"/></linearGradient>
<linearGradient id="g62" x1="994" y1="0" x2="1598" y2="0" gradientUnits="userSpaceOnUse"><stop offset="0" stop-color="#00ffb7"/><stop offset="0.12" stop-color="#00ffcf"/><stop offset="0.21" stop-color="#00ffe9"/><stop offset="0.22" stop-color="#08ffeb"/><stop offset="0.25" stop-color="#4afff7"/><stop offset="0.27" stop-color="#81feff"/><stop offset="0.32" stop-color="#f8e7ff"/><stop offset="0.33" stop-color="#ffe4fe"/><stop offset="0.34" stop-color="#ffc0dd"/><stop offset="0.36" stop-color="#ff9fbf"/><stop offset="0.38" stop-color="#ff7fa1"/><stop offset="0.41" stop-color="#ff6287"/><stop offset="0.45" stop-color="#ff476e"/><stop offset="0.5" stop-color="#ff2e58"/><stop offset="0.56" stop-color="#ff1843"/><stop offset="0.65" stop-color="#ff0430"/><stop offset="0.68" stop-color="#ff002c"/><stop offset="0.81" stop-color="#ff001d"/><stop offset="0.95" stop-color="#ff0014"/><stop offset="1" stop-color="#ff0011"/></linearGradient>
<linearGradient id="g63" x1="995" y1="0" x2="1595" y2="0" gradientUnits="userSpaceOnUse"><stop offset="0" stop-color="#00ffbd"/><stop offset="0.12" stop-color="#00ffd5"/><stop offset="0.21" stop-color="#00fff0"/><stop offset="0.21" stop-color="#00fff2"/><stop offset="0.25" stop-color="#42fffe"/><stop offset="0.3" stop-color="#c1e7ff"/><stop offset="0.33" stop-color="#ffdafe"/><stop offset="0.34" stop-color="#ffb8de"/><stop offset="0.36" stop-color="#ff99c0"/><stop offset="0.39" stop-color="#ff7aa3"/><stop offset="0.42" stop-color="#ff5d88"/><stop offset="0.46" stop-color="#ff426e"/><stop offset="0.51" stop-color="#ff2a58"/><stop offset="0.57" stop-color="#ff1443"/><stop offset="0.67" stop-color="#ff0030"/><stop offset="0.8" stop-color="#ff0020"/><stop offset="0.94" stop-color="#ff0016"/><stop offset="1" stop-color="#ff0012"/></linearGradient>
<linearGradient id="g64" x1="995" y1="0" x2="1593" y2="0" gradientUnits="userSpaceOnUse"><stop offset="0" stop-color="#00ffc3"/><stop offset="0.12" stop-color="#00ffdb"/><stop offset="0.21" stop-color="#00fff7"/><stop offset="0.22" stop-color="#00fffa"/><stop offset="0.23" stop-color="#1dfeff"/><stop offset="0.29" stop-color="#95e6ff"/><stop offset="0.33" stop-color="#ffd1ff"/><stop offset="0.35" stop-color="#ffaedd"/><stop offset="0.37" stop-color="#ff8ebd"/><stop offset="0.4" stop-color="#ff70a0"/><stop offset="0.43" stop-color="#ff5485"/><stop offset="0.47" stop-color="#ff3a6b"/><stop offset="0.53" stop-color="#ff2354"/><stop offset="0.6" stop-color="#ff0d3f"/><stop offset="0.68" stop-color="#ff0031"/><stop offset="0.81" stop-color="#ff0021"/><stop offset="0.94" stop-color="#ff0017"/><stop offset="1" stop-color="#ff0014"/></linearGradient>
<linearGradient id="g65" x1="996" y1="0" x2="1591" y2="0" gradientUnits="userSpaceOnUse"><stop offset="0" stop-color="#00ffc8"/><stop offset="0.11" stop-color="#00ffe2"/><stop offset="0.21" stop-color="#00feff"/><stop offset="0.22" stop-color="#01fbff"/><stop offset="0.28" stop-color="#77e3ff"/><stop offset="0.33" stop-color="#efcaff"/><stop offset="0.34" stop-color="#fec7ff"/><stop offset="0.36" stop-color="#ffa4db"/><stop offset="0.38" stop-color="#ff84ba"/><stop offset="0.41" stop-color="#ff669d"/><stop offset="0.44" stop-color="#ff4c82"/><stop offset="0.48" stop-color="#ff3368"/><stop offset="0.54" stop-color="#ff1c51"/><stop offset="0.63" stop-color="#ff073c"/><stop offset="0.68" stop-color="#ff0033"/><stop offset="0.81" stop-color="#ff0023"/><stop offset="0.94" stop-color="#ff0018"/><stop offset="1" stop-color="#ff0015"/></linearGradient>
<linearGradient id="g66" x1="997" y1="0" x2="1589" y2="0" gradientUnits="userSpaceOnUse"><stop offset="0" stop-color="#00ffce"/><stop offset="0.11" stop-color="#00ffe8"/><stop offset="0.19" stop-color="#00feff"/><stop offset="0.22" stop-color="#00f2ff"/><stop offset="0.28" stop-color="#76daff"/><stop offset="0.33" stop-color="#efc1ff"/><stop offset="0.34" stop-color="#febeff"/><stop offset="0.36" stop-color="#ff98d7"/><stop offset="0.39" stop-color="#ff7ab8"/><stop offset="0.41" stop-color="#ff5e9a"/><stop offset="0.45" stop-color="#ff437e"/><stop offset="0.5" stop-color="#ff2c65"/><stop offset="0.56" stop-color="#ff164e"/><stop offset="0.65" stop-color="#ff023a"/><stop offset="0.68" stop-color="#ff0035"/><stop offset="0.82" stop-color="#ff0024"/><stop offset="0.95" stop-color="#ff0019"/><stop offset="1" stop-color="#ff0016"/></linearGradient>
<linearGradient id="g67" x1="998" y1="0" x2="1587" y2="0" gradientUnits="userSpaceOnUse"><stop offset="0" stop-color="#00ffd4"/><stop offset="0.11" stop-color="#00ffef"/><stop offset="0.16" stop-color="#00feff"/><stop offset="0.22" stop-color="#00ebff"/><stop offset="0.26" stop-color="#5bd7ff"/><stop offset="0.32" stop-color="#d2bfff"/><stop offset="0.34" stop-color="#fdb6ff"/><stop offset="0.35" stop-color="#ffb0fa"/><stop offset="0.37" stop-color="#ff91d8"/><stop offset="0.39" stop-color="#ff74b7"/><stop offset="0.42" stop-color="#ff599a"/><stop offset="0.46" stop-color="#ff407f"/><stop offset="0.51" stop-color="#ff2866"/><stop offset="0.57" stop-color="#ff134f"/><stop offset="0.66" stop-color="#ff003a"/><stop offset="0.8" stop-color="#ff0028"/><stop offset="0.93" stop-color="#ff001c"/><stop offset="1" stop-color="#ff0018"/></linearGradient>
<linearGradient id="g68" x1="998" y1="0" x2="1585" y2="0" gradientUnits="userSpaceOnUse"><stop offset="0" stop-color="#00ffda"/><stop offset="0.11" stop-color="#00fff5"/><stop offset="0.14" stop-color="#00feff"/><stop offset="0.22" stop-color="#01e3ff"/><stop offset="0.28" stop-color="#78caff"/><stop offset="0.35" stop-color="#ffacfe"/><stop offset="0.37" stop-color="#ff8edc"/><stop offset="0.39" stop-color="#ff71bb"/><stop offset="0.42" stop-color="#ff569e"/><stop offset="0.46" stop-color="#ff3e82"/><stop offset="0.51" stop-color="#ff2768"/><stop offset="0.58" stop-color="#ff1251"/><stop offset="0.66" stop-color="#ff003c"/><stop offset="0.79" stop-color="#ff002a"/><stop offset="0.93" stop-color="#ff001e"/><stop offset="1" stop-color="#ff0019"/></linearGradient>
<linearGradient id="g69" x1="999" y1="0" x2="1583" y2="0" gradientUnits="userSpaceOnUse"><stop offset="0" stop-color="#00ffe0"/><stop offset="0.12" stop-color="#00feff"/><stop offset="0.22" stop-color="#00dcff"/><stop offset="0.28" stop-color="#77c2ff"/><stop offset="0.35" stop-color="#eea9ff"/><stop offset="0.35" stop-color="#ffa5fe"/><stop offset="0.37" stop-color="#ff88dd"/><stop offset="0.4" stop-color="#ff6cbd"/><stop offset="0.43" stop-color="#ff539f"/><stop offset="0.46" stop-color="#ff3b84"/><stop offset="0.51" stop-color="#ff256a"/><stop offset="0.58" stop-color="#ff1052"/><stop offset="0.66" stop-color="#ff003f"/><stop offset="0.79" stop-color="#ff002c"/><stop offset="0.93" stop-color="#ff001f"/><stop offset="1" stop-color="#ff001a"/></linearGradient>
<linearGradient id="g70" x1="1000" y1="0" x2="1581" y2="0" gradientUnits="userSpaceOnUse"><stop offset="0" stop-color="#00ffe6"/><stop offset="0.09" stop-color="#00feff"/><stop offset="0.22" stop-color="#00d5ff"/><stop offset="0.27" stop-color="#55c2ff"/><stop offset="0.33" stop-color="#cda8ff"/><stop offset="0.36" stop-color="#ff9eff"/><stop offset="0.38" stop-color="#ff82de"/><stop offset="0.4" stop-color="#ff67be"/><stop offset="0.43" stop-color="#ff4e9f"/><stop offset="0.47" stop-color="#ff3683"/><stop offset="0.52" stop-color="#ff2169"/><stop offset="0.59" stop-color="#ff0d52"/><stop offset="0.66" stop-color="#ff0041"/><stop offset="0.79" stop-color="#ff002e"/><stop offset="0.93" stop-color="#ff0021"/><stop offset="1" stop-color="#ff001c"/></linearGradient>
<linearGradient id="g71" x1="1001" y1="0" x2="1578" y2="0" gradientUnits="userSpaceOnUse"><stop offset="0" stop-color="#00ffed"/><stop offset="0.07" stop-color="#00feff"/><stop offset="0.21" stop-color="#00d1ff"/><stop offset="0.22" stop-color="#01ceff"/><stop offset="0.29" stop-color="#76b4ff"/><stop offset="0.35" stop-color="#ee9aff"/><stop offset="0.36" stop-color="#fe97ff"/><stop offset="0.38" stop-color="#ff79da"/><stop offset="0.41" stop-color="#ff5eba"/><stop offset="0.44" stop-color="#ff469b"/><stop offset="0.49" stop-color="#ff3080"/><stop offset="0.54" stop-color="#ff1b67"/><stop offset="0.61" stop-color="#ff0950"/><stop offset="0.67" stop-color="#ff0043"/><stop offset="0.79" stop-color="#ff0030"/><stop offset="0.93" stop-color="#ff0022"/><stop offset="1" stop-color="#ff001d"/></linearGradient>
<linearGradient id="g72" x1="1001" y1="0" x2="1576" y2="0" gradientUnits="userSpaceOnUse"><stop offset="0" stop-color="#00fff3"/><stop offset="0.05" stop-color="#00feff"/><stop offset="0.19" stop-color="#00d2ff"/><stop offset="0.22" stop-color="#00c8ff"/><stop offset="0.29" stop-color="#75aeff"/><stop offset="0.36" stop-color="#ee93ff"/><stop offset="0.37" stop-color="#fe90ff"/><stop offset="0.39" stop-color="#ff70d6"/><stop offset="0.42" stop-color="#ff58b7"/><stop offset="0.45" stop-color="#ff419a"/><stop offset="0.5" stop-color="#ff2b7f"/><stop offset="0.55" stop-color="#ff1766"/><stop offset="0.63" stop-color="#ff064f"/><stop offset="0.66" stop-color="#ff0046"/><stop offset="0.79" stop-color="#ff0032"/><stop offset="0.93" stop-color="#ff0024"/><stop offset="1" stop-color="#ff001e"/></linearGradient>
<linearGradient id="g73" x1="1002" y1="0" x2="1574" y2="0" gradientUnits="userSpaceOnUse"><stop offset="0" stop-color="#00fff9"/><stop offset="0.03" stop-color="#00feff"/><stop offset="0.17" stop-color="#00d3ff"/><stop offset="0.22" stop-color="#00c2ff"/><stop offset="0.27" stop-color="#52afff"/><stop offset="0.34" stop-color="#cb94ff"/><stop offset="0.37" stop-color="#fd89ff"/><stop offset="0.38" stop-color="#ff83f7"/><stop offset="0.4" stop-color="#ff69d5"/><stop offset="0.43" stop-color="#ff51b5"/><stop offset="0.46" stop-color="#ff3b98"/><stop offset="0.51" stop-color="#ff267d"/><stop offset="0.57" stop-color="#ff1363"/><stop offset="0.65" stop-color="#ff014d"/><stop offset="0.71" stop-color="#ff0040"/><stop offset="0.85" stop-color="#ff002d"/><stop offset="0.99" stop-color="#ff0021"/><stop offset="1" stop-color="#ff0020"/></linearGradient>
<linearGradient id="g74" x1="1003" y1="0" x2="1572" y2="0" gradientUnits="userSpaceOnUse"><stop offset="0" stop-color="#00feff"/><stop offset="0.14" stop-color="#00d5ff"/><stop offset="0.22" stop-color="#01bcff"/><stop offset="0.3" stop-color="#77a1ff"/><stop offset="0.38" stop-color="#ff82fe"/><stop offset="0.4" stop-color="#ff68db"/><stop offset="0.43" stop-color="#ff50ba"/><stop offset="0.46" stop-color="#ff3a9c"/><stop offset="0.51" stop-color="#ff2681"/><stop offset="0.56" stop-color="#ff1367"/><stop offset="0.64" stop-color="#ff0250"/><stop offset="0.67" stop-color="#ff004a"/><stop offset="0.79" stop-color="#ff0036"/><stop offset="0.93" stop-color="#ff0027"/><stop offset="1" stop-color="#ff0021"/></linearGradient>
<linearGradient id="g75" x1="1004" y1="0" x2="1570" y2="0" gradientUnits="userSpaceOnUse"><stop offset="0" stop-color="#00f8ff"/><stop offset="0.14" stop-color="#00cfff"/><stop offset="0.22" stop-color="#00b6ff"/><stop offset="0.29" stop-color="#719dff"/><stop offset="0.37" stop-color="#ea81ff"/><stop offset="0.38" stop-color="#ff7cff"/><stop offset="0.4" stop-color="#ff63dc"/><stop offset="0.43" stop-color="#ff4cbc"/><stop offset="0.47" stop-color="#ff379e"/><stop offset="0.51" stop-color="#ff2381"/><stop offset="0.57" stop-color="#ff1168"/><stop offset="0.65" stop-color="#ff0051"/><stop offset="0.76" stop-color="#ff003c"/><stop offset="0.9" stop-color="#ff002b"/><stop offset="1" stop-color="#ff0023"/></linearGradient>
<linearGradient id="g76" x1="1005" y1="0" x2="1568" y2="0" gradientUnits="userSpaceOnUse"><stop offset="0" stop-color="#00f1ff"/><stop offset="0.14" stop-color="#00c9ff"/><stop offset="0.22" stop-color="#00b1ff"/><stop offset="0.27" stop-color="#4d9fff"/><stop offset="0.35" stop-color="#c484ff"/><stop offset="0.38" stop-color="#ff77ff"/><stop offset="0.41" stop-color="#ff5fdd"/><stop offset="0.44" stop-color="#ff49bd"/><stop offset="0.47" stop-color="#ff349f"/><stop offset="0.52" stop-color="#ff2183"/><stop offset="0.58" stop-color="#ff0f69"/><stop offset="0.65" stop-color="#ff0053"/><stop offset="0.76" stop-color="#ff003e"/><stop offset="0.91" stop-color="#ff002c"/><stop offset="1" stop-color="#ff0024"/></linearGradient>
<linearGradient id="g77" x1="1005" y1="0" x2="1566" y2="0" gradientUnits="userSpaceOnUse"><stop offset="0" stop-color="#00ecff"/><stop offset="0.14" stop-color="#00c4ff"/><stop offset="0.22" stop-color="#01abff"/><stop offset="0.3" stop-color="#7890ff"/><stop offset="0.38" stop-color="#f074ff"/><stop offset="0.39" stop-color="#fe71ff"/><stop offset="0.42" stop-color="#ff58d9"/><stop offset="0.45" stop-color="#ff42b9"/><stop offset="0.48" stop-color="#ff2e9c"/><stop offset="0.53" stop-color="#ff1c80"/><stop offset="0.59" stop-color="#ff0b67"/><stop offset="0.65" stop-color="#ff0056"/><stop offset="0.76" stop-color="#ff0040"/><stop offset="0.9" stop-color="#ff002e"/><stop offset="1" stop-color="#ff0026"/></linearGradient>
<linearGradient id="g78" x1="1006" y1="0" x2="1564" y2="0" gradientUnits="userSpaceOnUse"><stop offset="0" stop-color="#00e6ff"/><stop offset="0.14" stop-color="#00beff"/><stop offset="0.22" stop-color="#00a7ff"/><stop offset="0.3" stop-color="#6f8dff"/><stop offset="0.38" stop-color="#e771ff"/><stop offset="0.39" stop-color="#fe6cff"/><stop offset="0.42" stop-color="#ff52d8"/><stop offset="0.45" stop-color="#ff3eb9"/><stop offset="0.49" stop-color="#ff2a9b"/><stop offset="0.54" stop-color="#ff187f"/><stop offset="0.61" stop-color="#ff0866"/><stop offset="0.65" stop-color="#ff0059"/><stop offset="0.76" stop-color="#ff0043"/><stop offset="0.9" stop-color="#ff0030"/><stop offset="1" stop-color="#ff0027"/></linearGradient>
<linearGradient id="g79" x1="1007" y1="0" x2="1561" y2="0" gradientUnits="userSpaceOnUse"><stop offset="0" stop-color="#00e0ff"/><stop offset="0.14" stop-color="#00b9ff"/><stop offset="0.22" stop-color="#00a2ff"/><stop offset="0.27" stop-color="#4891ff"/><stop offset="0.36" stop-color="#c175ff"/><stop offset="0.4" stop-color="#fe67ff"/><stop offset="0.41" stop-color="#ff5ff3"/><stop offset="0.43" stop-color="#ff49d1"/><stop offset="0.47" stop-color="#ff36b2"/><stop offset="0.51" stop-color="#ff2395"/><stop offset="0.56" stop-color="#ff127a"/><stop offset="0.63" stop-color="#ff0261"/><stop offset="0.66" stop-color="#ff005a"/><stop offset="0.77" stop-color="#ff0044"/><stop offset="0.91" stop-color="#ff0031"/><stop offset="1" stop-color="#ff0029"/></linearGradient>
<linearGradient id="g80" x1="1008" y1="0" x2="1559" y2="0" gradientUnits="userSpaceOnUse"><stop offset="0" stop-color="#00daff"/><stop offset="0.15" stop-color="#00b4ff"/><stop offset="0.22" stop-color="#009dff"/><stop offset="0.31" stop-color="#7682ff"/><stop offset="0.4" stop-color="#ff61fe"/><stop offset="0.43" stop-color="#ff4cdc"/><stop offset="0.46" stop-color="#ff39bd"/><stop offset="0.5" stop-color="#ff269f"/><stop offset="0.55" stop-color="#ff1583"/><stop offset="0.62" stop-color="#ff0569"/><stop offset="0.65" stop-color="#ff005f"/><stop offset="0.75" stop-color="#ff0049"/><stop offset="0.89" stop-color="#ff0035"/><stop offset="1" stop-color="#ff002a"/></linearGradient>
<linearGradient id="g81" x1="1009" y1="0" x2="1557" y2="0" gradientUnits="userSpaceOnUse"><stop offset="0" stop-color="#00d5ff"/><stop offset="0.15" stop-color="#00afff"/><stop offset="0.22" stop-color="#0099ff"/><stop offset="0.3" stop-color="#6b7fff"/><stop offset="0.39" stop-color="#e463ff"/><stop offset="0.41" stop-color="#ff5cff"/><stop offset="0.43" stop-color="#ff48dd"/><stop offset="0.47" stop-color="#ff35bc"/><stop offset="0.51" stop-color="#ff239f"/><stop offset="0.56" stop-color="#ff1283"/><stop offset="0.62" stop-color="#ff0369"/><stop offset="0.65" stop-color="#ff0061"/><stop offset="0.75" stop-color="#ff004b"/><stop offset="0.89" stop-color="#ff0036"/><stop offset="1" stop-color="#ff002c"/></linearGradient>
<linearGradient id="g82" x1="1010" y1="0" x2="1555" y2="0" gradientUnits="userSpaceOnUse"><stop offset="0" stop-color="#00d0ff"/><stop offset="0.15" stop-color="#00aaff"/><stop offset="0.22" stop-color="#0194ff"/><stop offset="0.31" stop-color="#7778ff"/><stop offset="0.4" stop-color="#ef5cff"/><stop offset="0.41" stop-color="#ff58ff"/><stop offset="0.44" stop-color="#ff43dc"/><stop offset="0.47" stop-color="#ff31bc"/><stop offset="0.51" stop-color="#ff1f9e"/><stop offset="0.57" stop-color="#ff0f82"/><stop offset="0.64" stop-color="#ff0068"/><stop offset="0.73" stop-color="#ff0051"/><stop offset="0.86" stop-color="#ff003c"/><stop offset="1" stop-color="#ff002d"/></linearGradient>
<linearGradient id="g83" x1="1011" y1="0" x2="1553" y2="0" gradientUnits="userSpaceOnUse"><stop offset="0" stop-color="#00cbff"/><stop offset="0.15" stop-color="#00a5ff"/><stop offset="0.22" stop-color="#0090ff"/><stop offset="0.32" stop-color="#7674ff"/><stop offset="0.4" stop-color="#ef57ff"/><stop offset="0.42" stop-color="#fe53ff"/><stop offset="0.45" stop-color="#ff3ed9"/><stop offset="0.48" stop-color="#ff2cb9"/><stop offset="0.53" stop-color="#ff1a9b"/><stop offset="0.58" stop-color="#ff0b7f"/><stop offset="0.64" stop-color="#ff006a"/><stop offset="0.73" stop-color="#ff0053"/><stop offset="0.86" stop-color="#ff003e"/><stop offset="1" stop-color="#ff002f"/></linearGradient>
<linearGradient id="g84" x1="1012" y1="0" x2="1551" y2="0" gradientUnits="userSpaceOnUse"><stop offset="0" stop-color="#00c6ff"/><stop offset="0.15" stop-color="#00a0ff"/><stop offset="0.22" stop-color="#008cff"/><stop offset="0.31" stop-color="#6873ff"/><stop offset="0.4" stop-color="#df57ff"/><stop offset="0.42" stop-color="#fe4fff"/><stop offset="0.45" stop-color="#ff39d8"/><stop offset="0.49" stop-color="#ff28b8"/><stop offset="0.53" stop-color="#ff189b"/><stop offset="0.59" stop-color="#ff097f"/><stop offset="0.64" stop-color="#ff006d"/><stop offset="0.73" stop-color="#ff0056"/><stop offset="0.86" stop-color="#ff0040"/><stop offset="1" stop-color="#ff0031"/></linearGradient>
<linearGradient id="g85" x1="1013" y1="0" x2="1549" y2="0" gradientUnits="userSpaceOnUse"><stop offset="0" stop-color="#00c1ff"/><stop offset="0.15" stop-color="#009cff"/><stop offset="0.22" stop-color="#0188ff"/><stop offset="0.32" stop-color="#786bff"/><stop offset="0.43" stop-color="#ff4afe"/><stop offset="0.46" stop-color="#ff37db"/><stop offset="0.49" stop-color="#ff26bb"/><stop offset="0.54" stop-color="#ff169d"/><stop offset="0.59" stop-color="#ff0781"/><stop offset="0.64" stop-color="#ff0071"/><stop offset="0.73" stop-color="#ff0059"/><stop offset="0.85" stop-color="#ff0043"/><stop offset="1" stop-color="#ff0032"/></linearGradient>
<linearGradient id="g86" x1="1013" y1="0" x2="1547" y2="0" gradientUnits="userSpaceOnUse"><stop offset="0" stop-color="#00bdff"/><stop offset="0.15" stop-color="#0098ff"/><stop offset="0.22" stop-color="#0085ff"/><stop offset="0.32" stop-color="#7768ff"/><stop offset="0.43" stop-color="#ff46fe"/><stop offset="0.46" stop-color="#ff34db"/><stop offset="0.5" stop-color="#ff23bb"/><stop offset="0.54" stop-color="#ff139c"/><stop offset="0.6" stop-color="#ff0580"/><stop offset="0.64" stop-color="#ff0075"/><stop offset="0.72" stop-color="#ff005c"/><stop offset="0.84" stop-color="#ff0046"/><stop offset="0.99" stop-color="#ff0034"/><stop offset="1" stop-color="#ff0034"/></linearGradient>
<linearGradient id="g87" x1="1014" y1="0" x2="1544" y2="0" gradientUnits="userSpaceOnUse"><stop offset="0" stop-color="#00b9ff"/><stop offset="0.15" stop-color="#0094ff"/><stop offset="0.22" stop-color="#0081ff"/><stop offset="0.31" stop-color="#6768ff"/><stop offset="0.41" stop-color="#e04aff"/><stop offset="0.44" stop-color="#ff43ff"/><stop offset="0.47" stop-color="#ff31dc"/><stop offset="0.5" stop-color="#ff21bc"/><stop offset="0.55" stop-color="#ff119d"/><stop offset="0.61" stop-color="#ff0382"/><stop offset="0.64" stop-color="#ff0078"/><stop offset="0.72" stop-color="#ff005f"/><stop offset="0.84" stop-color="#ff0049"/><stop offset="0.99" stop-color="#ff0036"/><stop offset="1" stop-color="#ff0036"/></linearGradient>
<linearGradient id="g88" x1="1015" y1="0" x2="1542" y2="0" gradientUnits="userSpaceOnUse"><stop offset="0" stop-color="#00b4ff"/><stop offset="0.15" stop-color="#0090ff"/><stop offset="0.22" stop-color="#017dff"/><stop offset="0.33" stop-color="#7860ff"/><stop offset="0.43" stop-color="#f042ff"/><stop offset="0.44" stop-color="#ff3fff"/><stop offset="0.47" stop-color="#ff2ddb"/><stop offset="0.51" stop-color="#ff1ebb"/><stop offset="0.56" stop-color="#ff0f9e"/><stop offset="0.62" stop-color="#ff0182"/><stop offset="0.68" stop-color="#ff006e"/><stop offset="0.78" stop-color="#ff0056"/><stop offset="0.91" stop-color="#ff0041"/><stop offset="1" stop-color="#ff0037"/></linearGradient>
<linearGradient id="g89" x1="1016" y1="0" x2="1540" y2="0" gradientUnits="userSpaceOnUse"><stop offset="0" stop-color="#00b0ff"/><stop offset="0.15" stop-color="#008cff"/><stop offset="0.22" stop-color="#007aff"/><stop offset="0.33" stop-color="#785dff"/><stop offset="0.43" stop-color="#f03fff"/><stop offset="0.44" stop-color="#fe3bff"/><stop offset="0.48" stop-color="#ff2ada"/><stop offset="0.52" stop-color="#ff1aba"/><stop offset="0.57" stop-color="#ff0c9c"/><stop offset="0.63" stop-color="#ff0082"/><stop offset="0.71" stop-color="#ff0068"/><stop offset="0.82" stop-color="#ff0051"/><stop offset="0.97" stop-color="#ff003c"/><stop offset="1" stop-color="#ff0039"/></linearGradient>
<linearGradient id="g90" x1="1017" y1="0" x2="1538" y2="0" gradientUnits="userSpaceOnUse"><stop offset="0" stop-color="#00acff"/><stop offset="0.15" stop-color="#0088ff"/><stop offset="0.22" stop-color="#0077ff"/><stop offset="0.32" stop-color="#645eff"/><stop offset="0.42" stop-color="#de40ff"/><stop offset="0.45" stop-color="#fe38ff"/><stop offset="0.49" stop-color="#ff25d8"/><stop offset="0.53" stop-color="#ff17b8"/><stop offset="0.58" stop-color="#ff099a"/><stop offset="0.63" stop-color="#ff0085"/><stop offset="0.71" stop-color="#ff006b"/><stop offset="0.82" stop-color="#ff0054"/><stop offset="0.96" stop-color="#ff003f"/><stop offset="1" stop-color="#ff003b"/></linearGradient>
<linearGradient id="g91" x1="1018" y1="0" x2="1536" y2="0" gradientUnits="userSpaceOnUse"><stop offset="0" stop-color="#00a8ff"/><stop offset="0.15" stop-color="#0085ff"/><stop offset="0.22" stop-color="#0173ff"/><stop offset="0.34" stop-color="#7756ff"/><stop offset="0.46" stop-color="#ff34fe"/><stop offset="0.49" stop-color="#ff24dc"/><stop offset="0.53" stop-color="#ff16bc"/><stop offset="0.58" stop-color="#ff089e"/><stop offset="0.63" stop-color="#ff0089"/><stop offset="0.7" stop-color="#ff006f"/><stop offset="0.81" stop-color="#ff0057"/><stop offset="0.96" stop-color="#ff0041"/><stop offset="1" stop-color="#ff003c"/></linearGradient>
<linearGradient id="g92" x1="1019" y1="0" x2="1534" y2="0" gradientUnits="userSpaceOnUse"><stop offset="0" stop-color="#00a4ff"/><stop offset="0.16" stop-color="#0081ff"/><stop offset="0.22" stop-color="#0071ff"/><stop offset="0.34" stop-color="#7653ff"/><stop offset="0.45" stop-color="#f035ff"/><stop offset="0.46" stop-color="#ff31fe"/><stop offset="0.49" stop-color="#ff22dd"/><stop offset="0.53" stop-color="#ff14bd"/><stop offset="0.59" stop-color="#ff069e"/><stop offset="0.62" stop-color="#ff008e"/><stop offset="0.7" stop-color="#ff0073"/><stop offset="0.8" stop-color="#ff005b"/><stop offset="0.94" stop-color="#ff0045"/><stop offset="1" stop-color="#ff003e"/></linearGradient>
<linearGradient id="g93" x1="1020" y1="0" x2="1532" y2="0" gradientUnits="userSpaceOnUse"><stop offset="0" stop-color="#00a0ff"/><stop offset="0.16" stop-color="#007eff"/><stop offset="0.22" stop-color="#016dff"/><stop offset="0.34" stop-color="#784fff"/><stop offset="0.45" stop-color="#f231ff"/><stop offset="0.46" stop-color="#ff2dff"/><stop offset="0.5" stop-color="#ff1edc"/><stop offset="0.54" stop-color="#ff10bb"/><stop offset="0.6" stop-color="#ff049d"/><stop offset="0.62" stop-color="#ff0091"/><stop offset="0.7" stop-color="#ff0076"/><stop offset="0.8" stop-color="#ff005e"/><stop offset="0.94" stop-color="#ff0047"/><stop offset="1" stop-color="#ff0040"/></linearGradient>
<linearGradient id="g94" x1="1021" y1="0" x2="1530" y2="0" gradientUnits="userSpaceOnUse"><stop offset="0" stop-color="#009dff"/><stop offset="0.16" stop-color="#007aff"/><stop offset="0.22" stop-color="#016aff"/><stop offset="0.34" stop-color="#774dff"/><stop offset="0.46" stop-color="#ef2eff"/><stop offset="0.47" stop-color="#ff2aff"/><stop offset="0.5" stop-color="#ff1cdc"/><stop offset="0.55" stop-color="#ff0ebc"/><stop offset="0.6" stop-color="#ff029e"/><stop offset="0.64" stop-color="#ff008d"/><stop offset="0.72" stop-color="#ff0073"/><stop offset="0.83" stop-color="#ff005b"/><stop offset="0.97" stop-color="#ff0045"/><stop offset="1" stop-color="#ff0042"/></linearGradient>
<linearGradient id="g95" x1="1022" y1="0" x2="1528" y2="0" gradientUnits="userSpaceOnUse"><stop offset="0" stop-color="#0099ff"/><stop offset="0.16" stop-color="#0077ff"/><stop offset="0.22" stop-color="#0068ff"/><stop offset="0.34" stop-color="#734bff"/><stop offset="0.46" stop-color="#eb2cff"/><stop offset="0.47" stop-color="#fe27ff"/><stop offset="0.51" stop-color="#ff18da"/><stop offset="0.56" stop-color="#ff0bb9"/><stop offset="0.61" stop-color="#ff009c"/><stop offset="0.69" stop-color="#ff0080"/><stop offset="0.78" stop-color="#ff0067"/><stop offset="0.91" stop-color="#ff0050"/><stop offset="1" stop-color="#ff0044"/></linearGradient>
<linearGradient id="g96" x1="1023" y1="0" x2="1525" y2="0" gradientUnits="userSpaceOnUse"><stop offset="0" stop-color="#0096ff"/><stop offset="0.16" stop-color="#0074ff"/><stop offset="0.23" stop-color="#0165ff"/><stop offset="0.35" stop-color="#7846ff"/><stop offset="0.47" stop-color="#f128ff"/><stop offset="0.48" stop-color="#ff24fe"/><stop offset="0.52" stop-color="#ff16dc"/><stop offset="0.56" stop-color="#ff09bb"/><stop offset="0.61" stop-color="#ff00a1"/><stop offset="0.69" stop-color="#ff0084"/><stop offset="0.78" stop-color="#ff006b"/><stop offset="0.9" stop-color="#ff0053"/><stop offset="1" stop-color="#ff0046"/></linearGradient>
<linearGradient id="g97" x1="1024" y1="0" x2="1523" y2="0" gradientUnits="userSpaceOnUse"><stop offset="0" stop-color="#0092ff"/><stop offset="0.16" stop-color="#0071ff"/><stop offset="0.22" stop-color="#0062ff"/><stop offset="0.35" stop-color="#7844ff"/><stop offset="0.49" stop-color="#ff21fe"/><stop offset="0.53" stop-color="#ff14db"/><stop offset="0.57" stop-color="#ff07bb"/><stop offset="0.61" stop-color="#ff00a5"/><stop offset="0.68" stop-color="#ff0089"/><stop offset="0.77" stop-color="#ff006f"/><stop offset="0.89" stop-color="#ff0057"/><stop offset="1" stop-color="#ff0047"/></linearGradient>
<linearGradient id="g98" x1="1025" y1="0" x2="1521" y2="0" gradientUnits="userSpaceOnUse"><stop offset="0" stop-color="#008fff"/><stop offset="0.16" stop-color="#006eff"/><stop offset="0.22" stop-color="#0060ff"/><stop offset="0.35" stop-color="#7243ff"/><stop offset="0.47" stop-color="#eb24ff"/><stop offset="0.49" stop-color="#ff1efe"/><stop offset="0.53" stop-color="#ff11dc"/><stop offset="0.58" stop-color="#ff05bc"/><stop offset="0.61" stop-color="#ff00aa"/><stop offset="0.68" stop-color="#ff008d"/><stop offset="0.77" stop-color="#ff0073"/><stop offset="0.88" stop-color="#ff005a"/><stop offset="1" stop-color="#ff0049"/></linearGradient>
<linearGradient id="g99" x1="1026" y1="0" x2="1519" y2="0" gradientUnits="userSpaceOnUse"><stop offset="0" stop-color="#008cff"/><stop offset="0.16" stop-color="#006bff"/><stop offset="0.23" stop-color="#015dff"/><stop offset="0.36" stop-color="#773fff"/><stop offset="0.48" stop-color="#f11fff"/><stop offset="0.5" stop-color="#ff1cff"/><stop offset="0.54" stop-color="#ff0fdd"/><stop offset="0.58" stop-color="#ff03bc"/><stop offset="0.61" stop-color="#ff00ae"/><stop offset="0.68" stop-color="#ff0091"/><stop offset="0.76" stop-color="#ff0076"/><stop offset="0.88" stop-color="#ff005e"/><stop offset="1" stop-color="#ff004b"/></linearGradient>
<linearGradient id="g100" x1="1027" y1="0" x2="1517" y2="0" gradientUnits="userSpaceOnUse"><stop offset="0" stop-color="#0088ff"/><stop offset="0.16" stop-color="#0068ff"/><stop offset="0.22" stop-color="#005bff"/><stop offset="0.36" stop-color="#773cff"/><stop offset="0.49" stop-color="#f11dff"/><stop offset="0.5" stop-color="#ff19ff"/><stop offset="0.54" stop-color="#ff0cdc"/><stop offset="0.59" stop-color="#ff01bb"/><stop offset="0.65" stop-color="#ff009e"/><stop offset="0.73" stop-color="#ff0081"/><stop offset="0.84" stop-color="#ff0068"/><stop offset="0.98" stop-color="#ff0050"/><stop offset="1" stop-color="#ff004d"/></linearGradient>
<linearGradient id="g101" x1="1028" y1="0" x2="1515" y2="0" gradientUnits="userSpaceOnUse"><stop offset="0" stop-color="#0085ff"/><stop offset="0.16" stop-color="#0065ff"/><stop offset="0.22" stop-color="#0058ff"/><stop offset="0.35" stop-color="#6f3cff"/><stop offset="0.48" stop-color="#e91cff"/><stop offset="0.51" stop-color="#fe17ff"/><stop offset="0.55" stop-color="#ff09d9"/><stop offset="0.6" stop-color="#ff00bb"/><stop offset="0.66" stop-color="#ff009d"/><stop offset="0.74" stop-color="#ff0081"/><stop offset="0.85" stop-color="#ff0068"/><stop offset="0.99" stop-color="#ff0050"/><stop offset="1" stop-color="#ff004f"/></linearGradient>
<linearGradient id="g102" x1="1029" y1="0" x2="1513" y2="0" gradientUnits="userSpaceOnUse"><stop offset="0" stop-color="#0082ff"/><stop offset="0.17" stop-color="#0062ff"/><stop offset="0.23" stop-color="#0156ff"/><stop offset="0.37" stop-color="#7837ff"/><stop offset="0.51" stop-color="#ff14fe"/><stop offset="0.56" stop-color="#ff08db"/><stop offset="0.6" stop-color="#ff00c1"/><stop offset="0.66" stop-color="#ff00a2"/><stop offset="0.74" stop-color="#ff0086"/><stop offset="0.84" stop-color="#ff006c"/><stop offset="0.98" stop-color="#ff0054"/><stop offset="1" stop-color="#ff0051"/></linearGradient>
<linearGradient id="g103" x1="1030" y1="0" x2="1511" y2="0" gradientUnits="userSpaceOnUse"><stop offset="0" stop-color="#007fff"/><stop offset="0.17" stop-color="#0060ff"/><stop offset="0.22" stop-color="#0054ff"/><stop offset="0.37" stop-color="#7735ff"/><stop offset="0.52" stop-color="#ff11fe"/><stop offset="0.56" stop-color="#ff06dc"/><stop offset="0.59" stop-color="#ff00c6"/><stop offset="0.65" stop-color="#ff00a7"/><stop offset="0.73" stop-color="#ff008b"/><stop offset="0.83" stop-color="#ff0070"/><stop offset="0.96" stop-color="#ff0058"/><stop offset="1" stop-color="#ff0053"/></linearGradient>
<linearGradient id="g104" x1="1031" y1="0" x2="1508" y2="0" gradientUnits="userSpaceOnUse"><stop offset="0" stop-color="#007dff"/><stop offset="0.17" stop-color="#005dff"/><stop offset="0.22" stop-color="#0052ff"/><stop offset="0.36" stop-color="#6e35ff"/><stop offset="0.5" stop-color="#e715ff"/><stop offset="0.53" stop-color="#ff0fff"/><stop offset="0.57" stop-color="#ff04dd"/><stop offset="0.59" stop-color="#ff00cc"/><stop offset="0.65" stop-color="#ff00ad"/><stop offset="0.73" stop-color="#ff0090"/><stop offset="0.82" stop-color="#ff0075"/><stop offset="0.95" stop-color="#ff005d"/><stop offset="1" stop-color="#ff0055"/></linearGradient>
<linearGradient id="g105" x1="1032" y1="0" x2="1506" y2="0" gradientUnits="userSpaceOnUse"><stop offset="0" stop-color="#007aff"/><stop offset="0.17" stop-color="#005aff"/><stop offset="0.23" stop-color="#014fff"/><stop offset="0.38" stop-color="#7830ff"/><stop offset="0.52" stop-color="#f210ff"/><stop offset="0.53" stop-color="#ff0dff"/><stop offset="0.58" stop-color="#ff02dc"/><stop offset="0.6" stop-color="#ff00cc"/><stop offset="0.66" stop-color="#ff00ac"/><stop offset="0.74" stop-color="#ff008f"/><stop offset="0.84" stop-color="#ff0075"/><stop offset="0.97" stop-color="#ff005c"/><stop offset="1" stop-color="#ff0057"/></linearGradient>
<linearGradient id="g106" x1="1033" y1="0" x2="1504" y2="0" gradientUnits="userSpaceOnUse"><stop offset="0" stop-color="#0077ff"/><stop offset="0.17" stop-color="#0058ff"/><stop offset="0.23" stop-color="#004dff"/><stop offset="0.38" stop-color="#782eff"/><stop offset="0.52" stop-color="#f20eff"/><stop offset="0.54" stop-color="#ff0aff"/><stop offset="0.58" stop-color="#ff00db"/><stop offset="0.64" stop-color="#ff00bb"/><stop offset="0.71" stop-color="#ff009d"/><stop offset="0.8" stop-color="#ff0081"/><stop offset="0.92" stop-color="#ff0067"/><stop offset="1" stop-color="#ff005a"/></linearGradient>
<linearGradient id="g107" x1="1034" y1="0" x2="1502" y2="0" gradientUnits="userSpaceOnUse"><stop offset="0" stop-color="#0074ff"/><stop offset="0.17" stop-color="#0055ff"/><stop offset="0.23" stop-color="#014bff"/><stop offset="0.38" stop-color="#792bff"/><stop offset="0.53" stop-color="#f20cff"/><stop offset="0.54" stop-color="#ff08fe"/><stop offset="0.58" stop-color="#ff00e0"/><stop offset="0.64" stop-color="#ff00bf"/><stop offset="0.71" stop-color="#ff00a1"/><stop offset="0.79" stop-color="#ff0085"/><stop offset="0.91" stop-color="#ff006b"/><stop offset="1" stop-color="#ff005c"/></linearGradient>
<linearGradient id="g108" x1="1035" y1="0" x2="1500" y2="0" gradientUnits="userSpaceOnUse"><stop offset="0" stop-color="#0072ff"/><stop offset="0.17" stop-color="#0053ff"/><stop offset="0.23" stop-color="#0149ff"/><stop offset="0.38" stop-color="#772aff"/><stop offset="0.55" stop-color="#ff06fe"/><stop offset="0.58" stop-color="#ff00e7"/><stop offset="0.63" stop-color="#ff00c5"/><stop offset="0.7" stop-color="#ff00a7"/><stop offset="0.79" stop-color="#ff008a"/><stop offset="0.9" stop-color="#ff0070"/><stop offset="1" stop-color="#ff005e"/></linearGradient>
<linearGradient id="g109" x1="1037" y1="0" x2="1498" y2="0" gradientUnits="userSpaceOnUse"><stop offset="0" stop-color="#006fff"/><stop offset="0.17" stop-color="#0050ff"/><stop offset="0.22" stop-color="#0047ff"/><stop offset="0.38" stop-color="#7628ff"/><stop offset="0.56" stop-color="#ff04fe"/><stop offset="0.58" stop-color="#ff00ec"/><stop offset="0.63" stop-color="#ff00cb"/><stop offset="0.7" stop-color="#ff00ac"/><stop offset="0.78" stop-color="#ff008f"/><stop offset="0.89" stop-color="#ff0075"/><stop offset="1" stop-color="#ff0060"/></linearGradient>
<linearGradient id="g110" x1="1038" y1="0" x2="1496" y2="0" gradientUnits="userSpaceOnUse"><stop offset="0" stop-color="#006cff"/><stop offset="0.17" stop-color="#004eff"/><stop offset="0.22" stop-color="#0145ff"/><stop offset="0.39" stop-color="#7826ff"/><stop offset="0.54" stop-color="#f105ff"/><stop offset="0.56" stop-color="#ff02ff"/><stop offset="0.6" stop-color="#ff00e5"/><stop offset="0.65" stop-color="#ff00c3"/><stop offset="0.72" stop-color="#ff00a5"/><stop offset="0.81" stop-color="#ff0089"/><stop offset="0.93" stop-color="#ff006e"/><stop offset="1" stop-color="#ff0062"/></linearGradient>
<linearGradient id="g111" x1="1039" y1="0" x2="1494" y2="0" gradientUnits="userSpaceOnUse"><stop offset="0" stop-color="#006aff"/><stop offset="0.18" stop-color="#004cff"/><stop offset="0.22" stop-color="#0143ff"/><stop offset="0.39" stop-color="#7724ff"/><stop offset="0.55" stop-color="#f103ff"/><stop offset="0.57" stop-color="#ff00ff"/><stop offset="0.62" stop-color="#ff00dd"/><stop offset="0.68" stop-color="#ff00bc"/><stop offset="0.75" stop-color="#ff009d"/><stop offset="0.85" stop-color="#ff0082"/><stop offset="0.98" stop-color="#ff0068"/><stop offset="1" stop-color="#ff0064"/></linearGradient>
<linearGradient id="g112" x1="1040" y1="0" x2="1491" y2="0" gradientUnits="userSpaceOnUse"><stop offset="0" stop-color="#0067ff"/><stop offset="0.18" stop-color="#004aff"/><stop offset="0.22" stop-color="#0042ff"/><stop offset="0.39" stop-color="#7722ff"/><stop offset="0.56" stop-color="#f101ff"/><stop offset="0.57" stop-color="#ff00ff"/><stop offset="0.63" stop-color="#ff00db"/><stop offset="0.69" stop-color="#ff00bb"/><stop offset="0.77" stop-color="#ff009d"/><stop offset="0.87" stop-color="#ff0081"/><stop offset="1" stop-color="#ff0067"/><stop offset="1" stop-color="#ff0067"/></linearGradient>
<linearGradient id="g113" x1="1041" y1="0" x2="1489" y2="0" gradientUnits="userSpaceOnUse"><stop offset="0" stop-color="#0065ff"/><stop offset="0.18" stop-color="#0048ff"/><stop offset="0.23" stop-color="#0140ff"/><stop offset="0.4" stop-color="#7820ff"/><stop offset="0.56" stop-color="#f100ff"/><stop offset="0.58" stop-color="#ff00fe"/><stop offset="0.63" stop-color="#ff00db"/><stop offset="0.7" stop-color="#ff00bb"/><stop offset="0.78" stop-color="#ff009d"/><stop offset="0.88" stop-color="#ff0081"/><stop offset="1" stop-color="#ff0069"/></linearGradient>
<linearGradient id="g114" x1="1042" y1="0" x2="1487" y2="0" gradientUnits="userSpaceOnUse"><stop offset="0" stop-color="#0063ff"/><stop offset="0.18" stop-color="#0046ff"/><stop offset="0.22" stop-color="#003eff"/><stop offset="0.4" stop-color="#781eff"/><stop offset="0.56" stop-color="#eb00ff"/><stop offset="0.59" stop-color="#ff00fe"/><stop offset="0.64" stop-color="#ff00dc"/><stop offset="0.71" stop-color="#ff00bb"/><stop offset="0.79" stop-color="#ff009d"/><stop offset="0.89" stop-color="#ff0081"/><stop offset="1" stop-color="#ff006c"/></linearGradient>
<linearGradient id="g115" x1="1043" y1="0" x2="1485" y2="0" gradientUnits="userSpaceOnUse"><stop offset="0" stop-color="#0061ff"/><stop offset="0.18" stop-color="#0044ff"/><stop offset="0.22" stop-color="#003cff"/><stop offset="0.4" stop-color="#741dff"/><stop offset="0.56" stop-color="#e500ff"/><stop offset="0.6" stop-color="#ff00fe"/><stop offset="0.65" stop-color="#ff00dc"/><stop offset="0.71" stop-color="#ff00bc"/><stop offset="0.79" stop-color="#ff009e"/><stop offset="0.9" stop-color="#ff0082"/><stop offset="1" stop-color="#ff006e"/></linearGradient>
<linearGradient id="g116" x1="1045" y1="0" x2="1483" y2="0" gradientUnits="userSpaceOnUse"><stop offset="0" stop-color="#005eff"/><stop offset="0.18" stop-color="#0041ff"/><stop offset="0.22" stop-color="#013aff"/><stop offset="0.41" stop-color="#771bff"/><stop offset="0.55" stop-color="#de00ff"/><stop offset="0.6" stop-color="#ff00ff"/><stop offset="0.66" stop-color="#ff00dc"/><stop offset="0.72" stop-color="#ff00bc"/><stop offset="0.81" stop-color="#ff009d"/><stop offset="0.91" stop-color="#ff0081"/><stop offset="1" stop-color="#ff0070"/></linearGradient>
<linearGradient id="g117" x1="1046" y1="0" x2="1481" y2="0" gradientUnits="userSpaceOnUse"><stop offset="0" stop-color="#005cff"/><stop offset="0.18" stop-color="#003fff"/><stop offset="0.22" stop-color="#0039ff"/><stop offset="0.41" stop-color="#7519ff"/><stop offset="0.55" stop-color="#d800ff"/><stop offset="0.61" stop-color="#ff00ff"/><stop offset="0.66" stop-color="#ff00dc"/><stop offset="0.73" stop-color="#ff00bb"/><stop offset="0.82" stop-color="#ff009d"/><stop offset="0.93" stop-color="#ff0081"/><stop offset="1" stop-color="#ff0073"/></linearGradient>
<linearGradient id="g118" x1="1047" y1="0" x2="1479" y2="0" gradientUnits="userSpaceOnUse"><stop offset="0" stop-color="#005aff"/><stop offset="0.19" stop-color="#003dff"/><stop offset="0.22" stop-color="#0137ff"/><stop offset="0.41" stop-color="#7518ff"/><stop offset="0.55" stop-color="#d200ff"/><stop offset="0.61" stop-color="#ff00ff"/><stop offset="0.67" stop-color="#ff00db"/><stop offset="0.74" stop-color="#ff00bb"/><stop offset="0.83" stop-color="#ff009d"/><stop offset="0.94" stop-color="#ff0081"/><stop offset="1" stop-color="#ff0075"/></linearGradient>
<linearGradient id="g119" x1="1048" y1="0" x2="1477" y2="0" gradientUnits="userSpaceOnUse"><stop offset="0" stop-color="#0058ff"/><stop offset="0.19" stop-color="#003cff"/><stop offset="0.22" stop-color="#0136ff"/><stop offset="0.41" stop-color="#7317ff"/><stop offset="0.55" stop-color="#cb00ff"/><stop offset="0.62" stop-color="#ff00fe"/><stop offset="0.68" stop-color="#ff00db"/><stop offset="0.75" stop-color="#ff00bb"/><stop offset="0.84" stop-color="#ff009d"/><stop offset="0.95" stop-color="#ff0081"/><stop offset="1" stop-color="#ff0078"/></linearGradient>
<linearGradient id="g120" x1="1049" y1="0" x2="1474" y2="0" gradientUnits="userSpaceOnUse"><stop offset="0" stop-color="#0056ff"/><stop offset="0.19" stop-color="#003aff"/><stop offset="0.22" stop-color="#0034ff"/><stop offset="0.41" stop-color="#7116ff"/><stop offset="0.54" stop-color="#c600ff"/><stop offset="0.63" stop-color="#ff00fe"/><stop offset="0.69" stop-color="#ff00db"/><stop offset="0.76" stop-color="#ff00bb"/><stop offset="0.85" stop-color="#ff009c"/><stop offset="0.97" stop-color="#ff0080"/><stop offset="1" stop-color="#ff007b"/></linearGradient>
<linearGradient id="g121" x1="1051" y1="0" x2="1472" y2="0" gradientUnits="userSpaceOnUse"><stop offset="0" stop-color="#0053ff"/><stop offset="0.19" stop-color="#0038ff"/><stop offset="0.22" stop-color="#0132ff"/><stop offset="0.41" stop-color="#7114ff"/><stop offset="0.54" stop-color="#c000ff"/><stop offset="0.64" stop-color="#ff00fe"/><stop offset="0.7" stop-color="#ff00dc"/><stop offset="0.77" stop-color="#ff00bb"/><stop offset="0.86" stop-color="#ff009d"/><stop offset="0.98" stop-color="#ff0081"/><stop offset="1" stop-color="#ff007d"/></linearGradient>
<linearGradient id="g122" x1="1052" y1="0" x2="1470" y2="0" gradientUnits="userSpaceOnUse"><stop offset="0" stop-color="#0051ff"/><stop offset="0.19" stop-color="#0036ff"/><stop offset="0.22" stop-color="#0131ff"/><stop offset="0.41" stop-color="#6f13ff"/><stop offset="0.54" stop-color="#ba00ff"/><stop offset="0.64" stop-color="#ff00ff"/><stop offset="0.7" stop-color="#ff00dc"/><stop offset="0.78" stop-color="#ff00bc"/><stop offset="0.87" stop-color="#ff009e"/><stop offset="0.99" stop-color="#ff0082"/><stop offset="1" stop-color="#ff0080"/></linearGradient>
<linearGradient id="g123" x1="1053" y1="0" x2="1468" y2="0" gradientUnits="userSpaceOnUse"><stop offset="0" stop-color="#004fff"/><stop offset="0.19" stop-color="#0034ff"/><stop offset="0.22" stop-color="#0030ff"/><stop offset="0.41" stop-color="#6d12ff"/><stop offset="0.53" stop-color="#b500ff"/><stop offset="0.65" stop-color="#ff00ff"/><stop offset="0.71" stop-color="#ff00dd"/><stop offset="0.79" stop-color="#ff00bd"/><stop offset="0.88" stop-color="#ff009f"/><stop offset="1" stop-color="#ff0083"/></linearGradient>
<linearGradient id="g124" x1="1054" y1="0" x2="1466" y2="0" gradientUnits="userSpaceOnUse"><stop offset="0" stop-color="#004eff"/><stop offset="0.19" stop-color="#0032ff"/><stop offset="0.22" stop-color="#012eff"/><stop offset="0.42" stop-color="#6d11ff"/><stop offset="0.53" stop-color="#af00ff"/><stop offset="0.66" stop-color="#ff00ff"/><stop offset="0.72" stop-color="#ff00db"/><stop offset="0.8" stop-color="#ff00bb"/><stop offset="0.9" stop-color="#ff009d"/><stop offset="1" stop-color="#ff0085"/></linearGradient>
<linearGradient id="g125" x1="1055" y1="0" x2="1464" y2="0" gradientUnits="userSpaceOnUse"><stop offset="0" stop-color="#004cff"/><stop offset="0.2" stop-color="#0031ff"/><stop offset="0.22" stop-color="#012dff"/><stop offset="0.42" stop-color="#6c10ff"/><stop offset="0.53" stop-color="#aa00ff"/><stop offset="0.67" stop-color="#ff00fe"/><stop offset="0.73" stop-color="#ff00dc"/><stop offset="0.81" stop-color="#ff00bb"/><stop offset="0.91" stop-color="#ff009d"/><stop offset="1" stop-color="#ff0088"/></linearGradient>
<linearGradient id="g126" x1="1057" y1="0" x2="1462" y2="0" gradientUnits="userSpaceOnUse"><stop offset="0" stop-color="#004aff"/><stop offset="0.2" stop-color="#002fff"/><stop offset="0.22" stop-color="#012bff"/><stop offset="0.42" stop-color="#6b0eff"/><stop offset="0.52" stop-color="#a300ff"/><stop offset="0.67" stop-color="#ff00fe"/><stop offset="0.74" stop-color="#ff00dc"/><stop offset="0.82" stop-color="#ff00bb"/><stop offset="0.92" stop-color="#ff009d"/><stop offset="1" stop-color="#ff008b"/></linearGradient>
<linearGradient id="g127" x1="1058" y1="0" x2="1460" y2="0" gradientUnits="userSpaceOnUse"><stop offset="0" stop-color="#0048ff"/><stop offset="0.2" stop-color="#002dff"/><stop offset="0.22" stop-color="#012aff"/><stop offset="0.42" stop-color="#6a0dff"/><stop offset="0.51" stop-color="#9e00ff"/><stop offset="0.68" stop-color="#ff00fe"/><stop offset="0.75" stop-color="#ff00db"/><stop offset="0.83" stop-color="#ff00bb"/><stop offset="0.93" stop-color="#ff009d"/><stop offset="1" stop-color="#ff008e"/></linearGradient>
<linearGradient id="g128" x1="1059" y1="0" x2="1458" y2="0" gradientUnits="userSpaceOnUse"><stop offset="0" stop-color="#0046ff"/><stop offset="0.2" stop-color="#002cff"/><stop offset="0.22" stop-color="#0029ff"/><stop offset="0.42" stop-color="#680cff"/><stop offset="0.51" stop-color="#9900ff"/><stop offset="0.69" stop-color="#ff00ff"/><stop offset="0.76" stop-color="#ff00dc"/><stop offset="0.84" stop-color="#ff00bc"/><stop offset="0.94" stop-color="#ff009d"/><stop offset="1" stop-color="#ff0090"/></linearGradient>
<linearGradient id="g129" x1="1060" y1="0" x2="1455" y2="0" gradientUnits="userSpaceOnUse"><stop offset="0" stop-color="#0044ff"/><stop offset="0.2" stop-color="#002aff"/><stop offset="0.22" stop-color="#0127ff"/><stop offset="0.43" stop-color="#680bff"/><stop offset="0.51" stop-color="#9500ff"/><stop offset="0.7" stop-color="#ff00ff"/><stop offset="0.77" stop-color="#ff00dc"/><stop offset="0.85" stop-color="#ff00bc"/><stop offset="0.96" stop-color="#ff009e"/><stop offset="1" stop-color="#ff0094"/></linearGradient>
<linearGradient id="g130" x1="1062" y1="0" x2="1453" y2="0" gradientUnits="userSpaceOnUse"><stop offset="0" stop-color="#0042ff"/><stop offset="0.2" stop-color="#0028ff"/><stop offset="0.22" stop-color="#0126ff"/><stop offset="0.42" stop-color="#670aff"/><stop offset="0.5" stop-color="#9000ff"/><stop offset="0.71" stop-color="#ff00ff"/><stop offset="0.78" stop-color="#ff00db"/><stop offset="0.87" stop-color="#ff00ba"/><stop offset="0.98" stop-color="#ff009c"/><stop offset="1" stop-color="#ff0097"/></linearGradient>
<linearGradient id="g131" x1="1063" y1="0" x2="1451" y2="0" gradientUnits="userSpaceOnUse"><stop offset="0" stop-color="#0041ff"/><stop offset="0.21" stop-color="#0027ff"/><stop offset="0.22" stop-color="#0225ff"/><stop offset="0.43" stop-color="#6709ff"/><stop offset="0.5" stop-color="#8b00ff"/><stop offset="0.71" stop-color="#fa00ff"/><stop offset="0.72" stop-color="#ff00fe"/><stop offset="0.79" stop-color="#ff00db"/><stop offset="0.88" stop-color="#ff00bb"/><stop offset="0.99" stop-color="#ff009d"/><stop offset="1" stop-color="#ff009a"/></linearGradient>
<linearGradient id="g132" x1="1064" y1="0" x2="1449" y2="0" gradientUnits="userSpaceOnUse"><stop offset="0" stop-color="#003fff"/><stop offset="0.21" stop-color="#0025ff"/><stop offset="0.22" stop-color="#0124ff"/><stop offset="0.43" stop-color="#6508ff"/><stop offset="0.5" stop-color="#8700ff"/><stop offset="0.7" stop-color="#f400ff"/><stop offset="0.72" stop-color="#ff00fe"/><stop offset="0.8" stop-color="#ff00dc"/><stop offset="0.89" stop-color="#ff00bb"/><stop offset="1" stop-color="#ff009d"/></linearGradient>
<linearGradient id="g133" x1="1066" y1="0" x2="1447" y2="0" gradientUnits="userSpaceOnUse"><stop offset="0" stop-color="#003dff"/><stop offset="0.21" stop-color="#0024ff"/><stop offset="0.22" stop-color="#0222ff"/><stop offset="0.43" stop-color="#6507ff"/><stop offset="0.49" stop-color="#8300ff"/><stop offset="0.7" stop-color="#ef00ff"/><stop offset="0.73" stop-color="#ff00ff"/><stop offset="0.81" stop-color="#ff00dc"/><stop offset="0.9" stop-color="#ff00bb"/><stop offset="1" stop-color="#ff00a0"/></linearGradient>
<linearGradient id="g134" x1="1067" y1="0" x2="1445" y2="0" gradientUnits="userSpaceOnUse"><stop offset="0" stop-color="#003cff"/><stop offset="0.21" stop-color="#0022ff"/><stop offset="0.22" stop-color="#0321ff"/><stop offset="0.43" stop-color="#6506ff"/><stop offset="0.49" stop-color="#8000ff"/><stop offset="0.7" stop-color="#ea00ff"/><stop offset="0.74" stop-color="#ff00ff"/><stop offset="0.81" stop-color="#ff00dc"/><stop offset="0.91" stop-color="#ff00bc"/><stop offset="1" stop-color="#ff00a3"/></linearGradient>
<linearGradient id="g135" x1="1068" y1="0" x2="1443" y2="0" gradientUnits="userSpaceOnUse"><stop offset="0" stop-color="#003aff"/><stop offset="0.21" stop-color="#0021ff"/><stop offset="0.31" stop-color="#2a15ff"/><stop offset="0.48" stop-color="#7a00ff"/><stop offset="0.7" stop-color="#e400ff"/><stop offset="0.75" stop-color="#ff00ff"/><stop offset="0.83" stop-color="#ff00dc"/><stop offset="0.92" stop-color="#ff00bc"/><stop offset="1" stop-color="#ff00a6"/></linearGradient>
<linearGradient id="g136" x1="1069" y1="0" x2="1441" y2="0" gradientUnits="userSpaceOnUse"><stop offset="0" stop-color="#0039ff"/><stop offset="0.22" stop-color="#0020ff"/><stop offset="0.43" stop-color="#6005ff"/><stop offset="0.48" stop-color="#7700ff"/><stop offset="0.7" stop-color="#df00ff"/><stop offset="0.76" stop-color="#ff00fe"/><stop offset="0.84" stop-color="#ff00db"/><stop offset="0.94" stop-color="#ff00bb"/><stop offset="1" stop-color="#ff00aa"/></linearGradient>
<linearGradient id="g137" x1="1071" y1="0" x2="1438" y2="0" gradientUnits="userSpaceOnUse"><stop offset="0" stop-color="#0037ff"/><stop offset="0.22" stop-color="#001eff"/><stop offset="0.43" stop-color="#5f04ff"/><stop offset="0.48" stop-color="#7300ff"/><stop offset="0.69" stop-color="#da00ff"/><stop offset="0.77" stop-color="#ff00fe"/><stop offset="0.85" stop-color="#ff00dc"/><stop offset="0.95" stop-color="#ff00bb"/><stop offset="1" stop-color="#ff00ae"/></linearGradient>
<linearGradient id="g138" x1="1072" y1="0" x2="1436" y2="0" gradientUnits="userSpaceOnUse"><stop offset="0" stop-color="#0035ff"/><stop offset="0.22" stop-color="#011dff"/><stop offset="0.44" stop-color="#5f03ff"/><stop offset="0.48" stop-color="#7100ff"/><stop offset="0.7" stop-color="#d600ff"/><stop offset="0.78" stop-color="#ff00fe"/><stop offset="0.86" stop-color="#ff00db"/><stop offset="0.96" stop-color="#ff00ba"/><stop offset="1" stop-color="#ff00b1"/></linearGradient>
<linearGradient id="g139" x1="1073" y1="0" x2="1434" y2="0" gradientUnits="userSpaceOnUse"><stop offset="0" stop-color="#0034ff"/><stop offset="0.22" stop-color="#011cff"/><stop offset="0.44" stop-color="#5e02ff"/><stop offset="0.48" stop-color="#6f00ff"/><stop offset="0.7" stop-color="#d400ff"/><stop offset="0.79" stop-color="#ff00ff"/><stop offset="0.87" stop-color="#ff00dc"/><stop offset="0.98" stop-color="#ff00bb"/><stop offset="1" stop-color="#ff00b4"/></linearGradient>
<linearGradient id="g140" x1="1075" y1="0" x2="1432" y2="0" gradientUnits="userSpaceOnUse"><stop offset="0" stop-color="#0032ff"/><stop offset="0.21" stop-color="#001bff"/><stop offset="0.44" stop-color="#5d01ff"/><stop offset="0.59" stop-color="#9f00ff"/><stop offset="0.8" stop-color="#ff00ff"/><stop offset="0.88" stop-color="#ff00dc"/><stop offset="0.99" stop-color="#ff00bc"/><stop offset="1" stop-color="#ff00b8"/></linearGradient>
<linearGradient id="g141" x1="1076" y1="0" x2="1430" y2="0" gradientUnits="userSpaceOnUse"><stop offset="0" stop-color="#0031ff"/><stop offset="0.21" stop-color="#011aff"/><stop offset="0.44" stop-color="#5d00ff"/><stop offset="0.67" stop-color="#bf00ff"/><stop offset="0.81" stop-color="#ff00ff"/><stop offset="0.89" stop-color="#ff00dc"/><stop offset="1" stop-color="#ff00bc"/><stop offset="1" stop-color="#ff00bb"/></linearGradient>
<linearGradient id="g142" x1="1077" y1="0" x2="1428" y2="0" gradientUnits="userSpaceOnUse"><stop offset="0" stop-color="#0030ff"/><stop offset="0.21" stop-color="#0119ff"/><stop offset="0.44" stop-color="#5c00ff"/><stop offset="0.67" stop-color="#bc00ff"/><stop offset="0.82" stop-color="#ff00fe"/><stop offset="0.91" stop-color="#ff00db"/><stop offset="1" stop-color="#ff00bf"/></linearGradient>
<linearGradient id="g143" x1="1079" y1="0" x2="1426" y2="0" gradientUnits="userSpaceOnUse"><stop offset="0" stop-color="#002eff"/><stop offset="0.21" stop-color="#0018ff"/><stop offset="0.44" stop-color="#5a00ff"/><stop offset="0.67" stop-color="#ba00ff"/><stop offset="0.83" stop-color="#ff00fe"/><stop offset="0.92" stop-color="#ff00db"/><stop offset="1" stop-color="#ff00c3"/></linearGradient>
<linearGradient id="g144" x1="1080" y1="0" x2="1424" y2="0" gradientUnits="userSpaceOnUse"><stop offset="0" stop-color="#002dff"/><stop offset="0.21" stop-color="#0117ff"/><stop offset="0.44" stop-color="#5700ff"/><stop offset="0.67" stop-color="#b600ff"/><stop offset="0.84" stop-color="#ff00fe"/><stop offset="0.93" stop-color="#ff00dc"/><stop offset="1" stop-color="#ff00c6"/></linearGradient>
<linearGradient id="g145" x1="1081" y1="0" x2="1421" y2="0" gradientUnits="userSpaceOnUse"><stop offset="0" stop-color="#002bff"/><stop offset="0.21" stop-color="#0016ff"/><stop offset="0.43" stop-color="#5300ff"/><stop offset="0.67" stop-color="#b100ff"/><stop offset="0.85" stop-color="#ff00ff"/><stop offset="0.94" stop-color="#ff00dc"/><stop offset="1" stop-color="#ff00cb"/></linearGradient>
<linearGradient id="g146" x1="1083" y1="0" x2="1419" y2="0" gradientUnits="userSpaceOnUse"><stop offset="0" stop-color="#002aff"/><stop offset="0.21" stop-color="#0115ff"/><stop offset="0.43" stop-color="#5000ff"/><stop offset="0.66" stop-color="#ad00ff"/><stop offset="0.86" stop-color="#ff00ff"/><stop offset="0.96" stop-color="#ff00dc"/><stop offset="1" stop-color="#ff00cf"/></linearGradient>
<linearGradient id="g147" x1="1084" y1="0" x2="1417" y2="0" gradientUnits="userSpaceOnUse"><stop offset="0" stop-color="#0029ff"/><stop offset="0.21" stop-color="#0114ff"/><stop offset="0.42" stop-color="#4d00ff"/><stop offset="0.66" stop-color="#a900ff"/><stop offset="0.88" stop-color="#ff00fe"/><stop offset="0.97" stop-color="#ff00db"/><stop offset="1" stop-color="#ff00d3"/></linearGradient>
<linearGradient id="g148" x1="1085" y1="0" x2="1415" y2="0" gradientUnits="userSpaceOnUse"><stop offset="0" stop-color="#0027ff"/><stop offset="0.21" stop-color="#0013ff"/><stop offset="0.42" stop-color="#4a00ff"/><stop offset="0.66" stop-color="#a400ff"/><stop offset="0.89" stop-color="#ff00fe"/><stop offset="0.98" stop-color="#ff00dc"/><stop offset="1" stop-color="#ff00d7"/></linearGradient>
<linearGradient id="g149" x1="1087" y1="0" x2="1413" y2="0" gradientUnits="userSpaceOnUse"><stop offset="0" stop-color="#0026ff"/><stop offset="0.21" stop-color="#0112ff"/><stop offset="0.41" stop-color="#4600ff"/><stop offset="0.65" stop-color="#a000ff"/><stop offset="0.9" stop-color="#ff00fe"/><stop offset="1" stop-color="#ff00db"/></linearGradient>
<linearGradient id="g150" x1="1088" y1="0" x2="1411" y2="0" gradientUnits="userSpaceOnUse"><stop offset="0" stop-color="#0025ff"/><stop offset="0.21" stop-color="#0111ff"/><stop offset="0.4" stop-color="#4300ff"/><stop offset="0.65" stop-color="#9c00ff"/><stop offset="0.9" stop-color="#fb00ff"/><stop offset="0.91" stop-color="#ff00fd"/><stop offset="1" stop-color="#ff00df"/></linearGradient>
<linearGradient id="g151" x1="1089" y1="0" x2="1409" y2="0" gradientUnits="userSpaceOnUse"><stop offset="0" stop-color="#0023ff"/><stop offset="0.21" stop-color="#0011ff"/><stop offset="0.4" stop-color="#4000ff"/><stop offset="0.65" stop-color="#9800ff"/><stop offset="0.9" stop-color="#f600ff"/><stop offset="0.92" stop-color="#ff00ff"/><stop offset="1" stop-color="#ff00e3"/></linearGradient>
<linearGradient id="g152" x1="1091" y1="0" x2="1407" y2="0" gradientUnits="userSpaceOnUse"><stop offset="0" stop-color="#0022ff"/><stop offset="0.21" stop-color="#0110ff"/><stop offset="0.39" stop-color="#3c00ff"/><stop offset="0.64" stop-color="#9300ff"/><stop offset="0.89" stop-color="#f000ff"/><stop offset="0.94" stop-color="#ff00fe"/><stop offset="1" stop-color="#ff00e8"/></linearGradient>
<linearGradient id="g153" x1="1092" y1="0" x2="1404" y2="0" gradientUnits="userSpaceOnUse"><stop offset="0" stop-color="#0021ff"/><stop offset="0.21" stop-color="#010fff"/><stop offset="0.38" stop-color="#3900ff"/><stop offset="0.64" stop-color="#8f00ff"/><stop offset="0.89" stop-color="#eb00ff"/><stop offset="0.95" stop-color="#ff00fe"/><stop offset="1" stop-color="#ff00ed"/></linearGradient>
<linearGradient id="g154" x1="1094" y1="0" x2="1402" y2="0" gradientUnits="userSpaceOnUse"><stop offset="0" stop-color="#001fff"/><stop offset="0.2" stop-color="#000eff"/><stop offset="0.37" stop-color="#3600ff"/><stop offset="0.63" stop-color="#8c00ff"/><stop offset="0.89" stop-color="#e600ff"/><stop offset="0.96" stop-color="#ff00fe"/><stop offset="1" stop-color="#ff00f2"/></linearGradient>
<linearGradient id="g155" x1="1095" y1="0" x2="1400" y2="0" gradientUnits="userSpaceOnUse"><stop offset="0" stop-color="#001eff"/><stop offset="0.2" stop-color="#010dff"/><stop offset="0.37" stop-color="#3300ff"/><stop offset="0.63" stop-color="#8800ff"/><stop offset="0.89" stop-color="#e100ff"/><stop offset="0.98" stop-color="#ff00fe"/><stop offset="1" stop-color="#ff00f6"/></linearGradient>
<linearGradient id="g156" x1="1096" y1="0" x2="1398" y2="0" gradientUnits="userSpaceOnUse"><stop offset="0" stop-color="#001dff"/><stop offset="0.2" stop-color="#010dff"/><stop offset="0.36" stop-color="#3100ff"/><stop offset="0.63" stop-color="#8400ff"/><stop offset="0.89" stop-color="#dd00ff"/><stop offset="0.99" stop-color="#ff00fe"/><stop offset="1" stop-color="#ff00fb"/></linearGradient>
<linearGradient id="g157" x1="1098" y1="0" x2="1396" y2="0" gradientUnits="userSpaceOnUse"><stop offset="0" stop-color="#001cff"/><stop offset="0.2" stop-color="#010cff"/><stop offset="0.35" stop-color="#2e00ff"/><stop offset="0.62" stop-color="#8100ff"/><stop offset="0.89" stop-color="#d900ff"/><stop offset="1" stop-color="#fe00ff"/></linearGradient>
<linearGradient id="g158" x1="1099" y1="0" x2="1394" y2="0" gradientUnits="userSpaceOnUse"><stop offset="0" stop-color="#001bff"/><stop offset="0.2" stop-color="#010bff"/><stop offset="0.35" stop-color="#2b00ff"/><stop offset="0.62" stop-color="#7d00ff"/><stop offset="0.89" stop-color="#d400ff"/><stop offset="1" stop-color="#f900ff"/></linearGradient>
<linearGradient id="g159" x1="1101" y1="0" x2="1392" y2="0" gradientUnits="userSpaceOnUse"><stop offset="0" stop-color="#001aff"/><stop offset="0.2" stop-color="#010aff"/><stop offset="0.34" stop-color="#2900ff"/><stop offset="0.61" stop-color="#7a00ff"/><stop offset="0.89" stop-color="#d000ff"/><stop offset="1" stop-color="#f500ff"/></linearGradient>
<linearGradient id="g160" x1="1102" y1="0" x2="1390" y2="0" gradientUnits="userSpaceOnUse"><stop offset="0" stop-color="#0019ff"/><stop offset="0.2" stop-color="#0109ff"/><stop offset="0.33" stop-color="#2600ff"/><stop offset="0.61" stop-color="#7700ff"/><stop offset="0.89" stop-color="#cc00ff"/><stop offset="1" stop-color="#f000ff"/></linearGradient>
<linearGradient id="g161" x1="1104" y1="0" x2="1388" y2="0" gradientUnits="userSpaceOnUse"><stop offset="0" stop-color="#0017ff"/><stop offset="0.19" stop-color="#0109ff"/><stop offset="0.32" stop-color="#2300ff"/><stop offset="0.6" stop-color="#7300ff"/><stop offset="0.88" stop-color="#c700ff"/><stop offset="1" stop-color="#ec00ff"/></linearGradient>
<linearGradient id="g162" x1="1105" y1="0" x2="1385" y2="0" gradientUnits="userSpaceOnUse"><stop offset="0" stop-color="#0016ff"/><stop offset="0.19" stop-color="#0008ff"/><stop offset="0.31" stop-color="#2100ff"/><stop offset="0.6" stop-color="#7000ff"/><stop offset="0.89" stop-color="#c300ff"/><stop offset="1" stop-color="#e600ff"/></linearGradient>
<linearGradient id="g163" x1="1106" y1="0" x2="1383" y2="0" gradientUnits="userSpaceOnUse"><stop offset="0" stop-color="#0015ff"/><stop offset="0.19" stop-color="#0107ff"/><stop offset="0.31" stop-color="#1e00ff"/><stop offset="0.6" stop-color="#6d00ff"/><stop offset="0.88" stop-color="#bf00ff"/><stop offset="1" stop-color="#e200ff"/></linearGradient>
<linearGradient id="g164" x1="1108" y1="0" x2="1381" y2="0" gradientUnits="userSpaceOnUse"><stop offset="0" stop-color="#0014ff"/><stop offset="0.19" stop-color="#0106ff"/><stop offset="0.3" stop-color="#1c00ff"/><stop offset="0.59" stop-color="#6a00ff"/><stop offset="0.88" stop-color="#bb00ff"/><stop offset="1" stop-color="#dd00ff"/></linearGradient>
<linearGradient id="g165" x1="1109" y1="0" x2="1379" y2="0" gradientUnits="userSpaceOnUse"><stop offset="0" stop-color="#0013ff"/><stop offset="0.19" stop-color="#0006ff"/><stop offset="0.29" stop-color="#1a00ff"/><stop offset="0.59" stop-color="#6600ff"/><stop offset="0.88" stop-color="#b800ff"/><stop offset="1" stop-color="#d900ff"/></linearGradient>
<linearGradient id="g166" x1="1111" y1="0" x2="1377" y2="0" gradientUnits="userSpaceOnUse"><stop offset="0" stop-color="#0012ff"/><stop offset="0.19" stop-color="#0105ff"/><stop offset="0.28" stop-color="#1800ff"/><stop offset="0.58" stop-color="#6400ff"/><stop offset="0.88" stop-color="#b500ff"/><stop offset="1" stop-color="#d500ff"/></linearGradient>
<linearGradient id="g167" x1="1112" y1="0" x2="1375" y2="0" gradientUnits="userSpaceOnUse"><stop offset="0" stop-color="#0011ff"/><stop offset="0.19" stop-color="#0104ff"/><stop offset="0.27" stop-color="#1600ff"/><stop offset="0.58" stop-color="#6100ff"/><stop offset="0.88" stop-color="#b100ff"/><stop offset="1" stop-color="#d100ff"/></linearGradient>
<linearGradient id="g168" x1="1114" y1="0" x2="1373" y2="0" gradientUnits="userSpaceOnUse"><stop offset="0" stop-color="#0010ff"/><stop offset="0.18" stop-color="#0004ff"/><stop offset="0.26" stop-color="#1300ff"/><stop offset="0.57" stop-color="#5e00ff"/><stop offset="0.88" stop-color="#ad00ff"/><stop offset="1" stop-color="#cd00ff"/></linearGradient>
<linearGradient id="g169" x1="1115" y1="0" x2="1371" y2="0" gradientUnits="userSpaceOnUse"><stop offset="0" stop-color="#000fff"/><stop offset="0.18" stop-color="#0103ff"/><stop offset="0.26" stop-color="#1200ff"/><stop offset="0.57" stop-color="#5c00ff"/><stop offset="0.88" stop-color="#ab00ff"/><stop offset="1" stop-color="#c900ff"/></linearGradient>
<linearGradient id="g170" x1="1117" y1="0" x2="1368" y2="0" gradientUnits="userSpaceOnUse"><stop offset="0" stop-color="#000eff"/><stop offset="0.18" stop-color="#0102ff"/><stop offset="0.25" stop-color="#1200ff"/><stop offset="0.57" stop-color="#5b00ff"/><stop offset="0.89" stop-color="#a900ff"/><stop offset="1" stop-color="#c400ff"/></linearGradient>
<linearGradient id="g171" x1="1119" y1="0" x2="1366" y2="0" gradientUnits="userSpaceOnUse"><stop offset="0" stop-color="#000dff"/><stop offset="0.18" stop-color="#0102ff"/><stop offset="0.29" stop-color="#1900ff"/><stop offset="0.61" stop-color="#6300ff"/><stop offset="0.94" stop-color="#b000ff"/><stop offset="1" stop-color="#c000ff"/></linearGradient>
<linearGradient id="g172" x1="1120" y1="0" x2="1364" y2="0" gradientUnits="userSpaceOnUse"><stop offset="0" stop-color="#000cff"/><stop offset="0.18" stop-color="#0101ff"/><stop offset="0.5" stop-color="#4900ff"/><stop offset="0.83" stop-color="#9400ff"/><stop offset="1" stop-color="#bd00ff"/></linearGradient>
<linearGradient id="g173" x1="1122" y1="0" x2="1362" y2="0" gradientUnits="userSpaceOnUse"><stop offset="0" stop-color="#000bff"/><stop offset="0.17" stop-color="#0101ff"/><stop offset="0.5" stop-color="#4800ff"/><stop offset="0.84" stop-color="#9300ff"/><stop offset="1" stop-color="#b900ff"/></linearGradient>
<linearGradient id="g174" x1="1123" y1="0" x2="1360" y2="0" gradientUnits="userSpaceOnUse"><stop offset="0" stop-color="#000aff"/><stop offset="0.17" stop-color="#0100ff"/><stop offset="0.51" stop-color="#4800ff"/><stop offset="0.85" stop-color="#9300ff"/><stop offset="1" stop-color="#b500ff"/></linearGradient>
<linearGradient id="g175" x1="1125" y1="0" x2="1358" y2="0" gradientUnits="userSpaceOnUse"><stop offset="0" stop-color="#0009ff"/><stop offset="0.17" stop-color="#0100ff"/><stop offset="0.51" stop-color="#4700ff"/><stop offset="0.85" stop-color="#9100ff"/><stop offset="1" stop-color="#b200ff"/></linearGradient>
<linearGradient id="g176" x1="1127" y1="0" x2="1356" y2="0" gradientUnits="userSpaceOnUse"><stop offset="0" stop-color="#0008ff"/><stop offset="0.16" stop-color="#0100ff"/><stop offset="0.51" stop-color="#4700ff"/><stop offset="0.86" stop-color="#9000ff"/><stop offset="1" stop-color="#ae00ff"/></linearGradient>
<linearGradient id="g177" x1="1129" y1="0" x2="1354" y2="0" gradientUnits="userSpaceOnUse"><stop offset="0" stop-color="#0007ff"/><stop offset="0.15" stop-color="#0000ff"/><stop offset="0.19" stop-color="#0700ff"/><stop offset="0.55" stop-color="#4d00ff"/><stop offset="0.9" stop-color="#9600ff"/><stop offset="1" stop-color="#ab00ff"/></linearGradient>
<linearGradient id="g178" x1="1130" y1="0" x2="1351" y2="0" gradientUnits="userSpaceOnUse"><stop offset="0" stop-color="#0006ff"/><stop offset="0.14" stop-color="#0000ff"/><stop offset="0.16" stop-color="#0200ff"/><stop offset="0.52" stop-color="#4700ff"/><stop offset="0.89" stop-color="#8f00ff"/><stop offset="1" stop-color="#a700ff"/></linearGradient>
<linearGradient id="g179" x1="1132" y1="0" x2="1349" y2="0" gradientUnits="userSpaceOnUse"><stop offset="0" stop-color="#0005ff"/><stop offset="0.12" stop-color="#0000ff"/><stop offset="0.16" stop-color="#0100ff"/><stop offset="0.53" stop-color="#4600ff"/><stop offset="0.89" stop-color="#8e00ff"/><stop offset="1" stop-color="#a300ff"/></linearGradient>
<linearGradient id="g180" x1="1134" y1="0" x2="1347" y2="0" gradientUnits="userSpaceOnUse"><stop offset="0" stop-color="#0004ff"/><stop offset="0.11" stop-color="#0000ff"/><stop offset="0.15" stop-color="#0100ff"/><stop offset="0.53" stop-color="#4500ff"/><stop offset="0.9" stop-color="#8d00ff"/><stop offset="1" stop-color="#a000ff"/></linearGradient>
<linearGradient id="g181" x1="1136" y1="0" x2="1345" y2="0" gradientUnits="userSpaceOnUse"><stop offset="0" stop-color="#0003ff"/><stop offset="0.1" stop-color="#0000ff"/><stop offset="0.14" stop-color="#0100ff"/><stop offset="0.53" stop-color="#4400ff"/><stop offset="0.91" stop-color="#8b00ff"/><stop offset="1" stop-color="#9d00ff"/></linearGradient>
<linearGradient id="g182" x1="1138" y1="0" x2="1343" y2="0" gradientUnits="userSpaceOnUse"><stop offset="0" stop-color="#0002ff"/><stop offset="0.11" stop-color="#0000ff"/><stop offset="0.14" stop-color="#0100ff"/><stop offset="0.53" stop-color="#4500ff"/><stop offset="0.92" stop-color="#8b00ff"/><stop offset="1" stop-color="#9a00ff"/></linearGradient>
<linearGradient id="g183" x1="1139" y1="0" x2="1341" y2="0" gradientUnits="userSpaceOnUse"><stop offset="0" stop-color="#0001ff"/><stop offset="0.14" stop-color="#0100ff"/><stop offset="0.53" stop-color="#4400ff"/><stop offset="0.93" stop-color="#8a00ff"/><stop offset="1" stop-color="#9600ff"/></linearGradient>
<linearGradient id="g184" x1="1141" y1="0" x2="1339" y2="0" gradientUnits="userSpaceOnUse"><stop offset="0" stop-color="#0000ff"/><stop offset="0.13" stop-color="#0100ff"/><stop offset="0.54" stop-color="#4300ff"/><stop offset="0.94" stop-color="#8900ff"/><stop offset="1" stop-color="#9300ff"/></linearGradient>
<linearGradient id="g185" x1="1143" y1="0" x2="1337" y2="0" gradientUnits="userSpaceOnUse"><stop offset="0" stop-color="#0000ff"/><stop offset="0.13" stop-color="#0100ff"/><stop offset="0.54" stop-color="#4300ff"/><stop offset="0.95" stop-color="#8800ff"/><stop offset="1" stop-color="#9000ff"/></linearGradient>
<linearGradient id="g186" x1="1145" y1="0" x2="1334" y2="0" gradientUnits="userSpaceOnUse"><stop offset="0" stop-color="#0000ff"/><stop offset="0.12" stop-color="#0100ff"/><stop offset="0.54" stop-color="#4200ff"/><stop offset="0.97" stop-color="#8700ff"/><stop offset="1" stop-color="#8c00ff"/></linearGradient>
<linearGradient id="g187" x1="1147" y1="0" x2="1332" y2="0" gradientUnits="userSpaceOnUse"><stop offset="0" stop-color="#0000ff"/><stop offset="0.11" stop-color="#0100ff"/><stop offset="0.55" stop-color="#4200ff"/><stop offset="0.98" stop-color="#8600ff"/><stop offset="1" stop-color="#8900ff"/></linearGradient>
<linearGradient id="g188" x1="1149" y1="0" x2="1330" y2="0" gradientUnits="userSpaceOnUse"><stop offset="0" stop-color="#0000ff"/><stop offset="0.11" stop-color="#0100ff"/><stop offset="0.55" stop-color="#4200ff"/><stop offset="0.99" stop-color="#8600ff"/><stop offset="1" stop-color="#8600ff"/></linearGradient>
<linearGradient id="g189" x1="1151" y1="0" x2="1328" y2="0" gradientUnits="userSpaceOnUse"><stop offset="0" stop-color="#0000ff"/><stop offset="0.1" stop-color="#0100ff"/><stop offset="0.55" stop-color="#4100ff"/><stop offset="1" stop-color="#8400ff"/></linearGradient>
<linearGradient id="g190" x1="1153" y1="0" x2="1326" y2="0" gradientUnits="userSpaceOnUse"><stop offset="0" stop-color="#0000ff"/><stop offset="0.1" stop-color="#0100ff"/><stop offset="0.56" stop-color="#4100ff"/><stop offset="1" stop-color="#8100ff"/></linearGradient>
<linearGradient id="g191" x1="1155" y1="0" x2="1324" y2="0" gradientUnits="userSpaceOnUse"><stop offset="0" stop-color="#0000ff"/><stop offset="0.09" stop-color="#0100ff"/><stop offset="0.56" stop-color="#4100ff"/><stop offset="1" stop-color="#7e00ff"/></linearGradient>
<linearGradient id="g192" x1="1156" y1="0" x2="1322" y2="0" gradientUnits="userSpaceOnUse"><stop offset="0" stop-color="#0000ff"/><stop offset="0.08" stop-color="#0100ff"/><stop offset="0.57" stop-color="#4000ff"/><stop offset="1" stop-color="#7b00ff"/></linearGradient>
<linearGradient id="g193" x1="1158" y1="0" x2="1320" y2="0" gradientUnits="userSpaceOnUse"><stop offset="0" stop-color="#0000ff"/><stop offset="0.08" stop-color="#0100ff"/><stop offset="0.57" stop-color="#4000ff"/><stop offset="1" stop-color="#7800ff"/></linearGradient>
<linearGradient id="g194" x1="1160" y1="0" x2="1318" y2="0" gradientUnits="userSpaceOnUse"><stop offset="0" stop-color="#0000ff"/><stop offset="0.07" stop-color="#0100ff"/><stop offset="0.58" stop-color="#3f00ff"/><stop offset="1" stop-color="#7600ff"/></linearGradient>
<linearGradient id="g195" x1="1162" y1="0" x2="1315" y2="0" gradientUnits="userSpaceOnUse"><stop offset="0" stop-color="#0000ff"/><stop offset="0.07" stop-color="#0100ff"/><stop offset="0.59" stop-color="#4000ff"/><stop offset="1" stop-color="#7200ff"/></linearGradient>
<linearGradient id="g196" x1="1164" y1="0" x2="1313" y2="0" gradientUnits="userSpaceOnUse"><stop offset="0" stop-color="#0000ff"/><stop offset="0.05" stop-color="#0100ff"/><stop offset="0.59" stop-color="#3f00ff"/><stop offset="1" stop-color="#7000ff"/></linearGradient>
<linearGradient id="g197" x1="1166" y1="0" x2="1311" y2="0" gradientUnits="userSpaceOnUse"><stop offset="0" stop-color="#0000ff"/><stop offset="0.05" stop-color="#0200ff"/><stop offset="0.6" stop-color="#3f00ff"/><stop offset="1" stop-color="#6d00ff"/></linearGradient>
<linearGradient id="g198" x1="1168" y1="0" x2="1309" y2="0" gradientUnits="userSpaceOnUse"><stop offset="0" stop-color="#0000ff"/><stop offset="0.04" stop-color="#0200ff"/><stop offset="0.61" stop-color="#3f00ff"/><stop offset="1" stop-color="#6b00ff"/></linearGradient>
<linearGradient id="g199" x1="1170" y1="0" x2="1307" y2="0" gradientUnits="userSpaceOnUse"><stop offset="0" stop-color="#0000ff"/><stop offset="0.58" stop-color="#3b00ff"/><stop offset="1" stop-color="#6800ff"/></linearGradient>
<linearGradient id="g200" x1="1173" y1="0" x2="1305" y2="0" gradientUnits="userSpaceOnUse"><stop offset="0" stop-color="#0100ff"/><stop offset="0.61" stop-color="#3d00ff"/><stop offset="1" stop-color="#6600ff"/></linearGradient>
<linearGradient id="g201" x1="1175" y1="0" x2="1303" y2="0" gradientUnits="userSpaceOnUse"><stop offset="0" stop-color="#0200ff"/><stop offset="0.62" stop-color="#3e00ff"/><stop offset="1" stop-color="#6300ff"/></linearGradient>
<linearGradient id="g202" x1="1177" y1="0" x2="1301" y2="0" gradientUnits="userSpaceOnUse"><stop offset="0" stop-color="#0300ff"/><stop offset="0.65" stop-color="#3f00ff"/><stop offset="1" stop-color="#6100ff"/></linearGradient>
<linearGradient id="g203" x1="1179" y1="0" x2="1298" y2="0" gradientUnits="userSpaceOnUse"><stop offset="0" stop-color="#0400ff"/><stop offset="0.67" stop-color="#4000ff"/><stop offset="1" stop-color="#5e00ff"/></linearGradient>
<linearGradient id="g204" x1="1181" y1="0" x2="1296" y2="0" gradientUnits="userSpaceOnUse"><stop offset="0" stop-color="#0600ff"/><stop offset="0.7" stop-color="#4100ff"/><stop offset="1" stop-color="#5b00ff"/></linearGradient>
<linearGradient id="g205" x1="1184" y1="0" x2="1294" y2="0" gradientUnits="userSpaceOnUse"><stop offset="0" stop-color="#0800ff"/><stop offset="0.73" stop-color="#4200ff"/><stop offset="1" stop-color="#5900ff"/></linearGradient>
<linearGradient id="g206" x1="1186" y1="0" x2="1292" y2="0" gradientUnits="userSpaceOnUse"><stop offset="0" stop-color="#0900ff"/><stop offset="0.75" stop-color="#4300ff"/><stop offset="1" stop-color="#5700ff"/></linearGradient>
<linearGradient id="g207" x1="1189" y1="0" x2="1290" y2="0" gradientUnits="userSpaceOnUse"><stop offset="0" stop-color="#0b00ff"/><stop offset="0.79" stop-color="#4500ff"/><stop offset="1" stop-color="#5400ff"/></linearGradient>
<linearGradient id="g208" x1="1191" y1="0" x2="1288" y2="0" gradientUnits="userSpaceOnUse"><stop offset="0" stop-color="#0c00ff"/><stop offset="0.82" stop-color="#4600ff"/><stop offset="1" stop-color="#5200ff"/></linearGradient>
<linearGradient id="g209" x1="1194" y1="0" x2="1286" y2="0" gradientUnits="userSpaceOnUse"><stop offset="0" stop-color="#0d00ff"/><stop offset="0.87" stop-color="#4700ff"/><stop offset="1" stop-color="#5000ff"/></linearGradient>
<linearGradient id="g210" x1="1197" y1="0" x2="1284" y2="0" gradientUnits="userSpaceOnUse"><stop offset="0" stop-color="#0f00ff"/><stop offset="0.92" stop-color="#4900ff"/><stop offset="1" stop-color="#4e00ff"/></linearGradient>
<linearGradient id="g211" x1="1199" y1="0" x2="1281" y2="0" gradientUnits="userSpaceOnUse"><stop offset="0" stop-color="#1000ff"/><stop offset="0.98" stop-color="#4900ff"/><stop offset="1" stop-color="#4b00ff"/></linearGradient>
<linearGradient id="g212" x1="1202" y1="0" x2="1279" y2="0" gradientUnits="userSpaceOnUse"><stop offset="0" stop-color="#1200ff"/><stop offset="1" stop-color="#4900ff"/></linearGradient>
<linearGradient id="g213" x1="1204" y1="0" x2="1277" y2="0" gradientUnits="userSpaceOnUse"><stop offset="0" stop-color="#1300ff"/><stop offset="1" stop-color="#4700ff"/></linearGradient>
<linearGradient id="g214" x1="1207" y1="0" x2="1275" y2="0" gradientUnits="userSpaceOnUse"><stop offset="0" stop-color="#1500ff"/><stop offset="1" stop-color="#4500ff"/></linearGradient>
<linearGradient id="g215" x1="1210" y1="0" x2="1273" y2="0" gradientUnits="userSpaceOnUse"><stop offset="0" stop-color="#1700ff"/><stop offset="1" stop-color="#4300ff"/></linearGradient>
<linearGradient id="g216" x1="1212" y1="0" x2="1271" y2="0" gradientUnits="userSpaceOnUse"><stop offset="0" stop-color="#1800ff"/><stop offset="1" stop-color="#4100ff"/></linearGradient>
<linearGradient id="g217" x1="1215" y1="0" x2="1269" y2="0" gradientUnits="userSpaceOnUse"><stop offset="0" stop-color="#1900ff"/><stop offset="1" stop-color="#3f00ff"/></linearGradient>
<linearGradient id="g218" x1="1218" y1="0" x2="1267" y2="0" gradientUnits="userSpaceOnUse"><stop offset="0" stop-color="#1b00ff"/><stop offset="1" stop-color="#3d00ff"/></linearGradient>
<linearGradient id="g219" x1="1220" y1="0" x2="1264" y2="0" gradientUnits="userSpaceOnUse"><stop offset="0" stop-color="#1c00ff"/><stop offset="1" stop-color="#3a00ff"/></linearGradient>
<linearGradient id="g220" x1="1223" y1="0" x2="1262" y2="0" gradientUnits="userSpaceOnUse"><stop offset="0" stop-color="#1e00ff"/><stop offset="1" stop-color="#3800ff"/></linearGradient>
<linearGradient id="g221" x1="1225" y1="0" x2="1260" y2="0" gradientUnits="userSpaceOnUse"><stop offset="0" stop-color="#1f00ff"/><stop offset="1" stop-color="#3600ff"/></linearGradient>
<linearGradient id="g222" x1="1228" y1="0" x2="1258" y2="0" gradientUnits="userSpaceOnUse"><stop offset="0" stop-color="#2000ff"/><stop offset="1" stop-color="#3400ff"/></linearGradient>
<linearGradient id="g223" x1="1231" y1="0" x2="1256" y2="0" gradientUnits="userSpaceOnUse"><stop offset="0" stop-color="#2200ff"/><stop offset="1" stop-color="#3200ff"/></linearGradient>
<linearGradient id="g224" x1="1233" y1="0" x2="1254" y2="0" gradientUnits="userSpaceOnUse"><stop offset="0" stop-color="#2300ff"/><stop offset="1" stop-color="#3100ff"/></linearGradient>
<linearGradient id="g225" x1="1236" y1="0" x2="1252" y2="0" gradientUnits="userSpaceOnUse"><stop offset="0" stop-color="#2400ff"/><stop offset="1" stop-color="#2f00ff"/></linearGradient>
<linearGradient id="g226" x1="1239" y1="0" x2="1250" y2="0" gradientUnits="userSpaceOnUse"><stop offset="0" stop-color="#2600ff"/><stop offset="1" stop-color="#2d00ff"/></linearGradient>
<linearGradient id="g227" x1="0" y1="0" x2="0" y2="1"><stop offset="0" stop-color="#ff6060"/><stop offset="0.12" stop-color="#ff0000"/><stop offset="0.55" stop-color="#f00000"/><stop offset="1" stop-color="#900000"/></linearGradient>
<linearGradient id="g228" x1="0" y1="0" x2="0" y2="1"><stop offset="0" stop-color="#20a020"/><stop offset="0.15" stop-color="#008800"/><stop offset="0.6" stop-color="#008000"/><stop offset="1" stop-color="#004800"/></linearGradient>
<linearGradient id="g229" x1="0" y1="0" x2="0" y2="1"><stop offset="0" stop-color="#5858ff"/><stop offset="0.1" stop-color="#0000ff"/><stop offset="0.6" stop-color="#0000f0"/><stop offset="1" stop-color="#000070"/></linearGradient>
<linearGradient id="g230" x1="611" y1="0" x2="942" y2="0" gradientUnits="userSpaceOnUse"><stop offset="0" stop-color="#59ffa1"/><stop offset="0.24" stop-color="#7cff9e"/><stop offset="0.48" stop-color="#a3ff9b"/><stop offset="0.73" stop-color="#ccff97"/><stop offset="0.97" stop-color="#f8ff93"/><stop offset="1" stop-color="#feff93"/></linearGradient>
<linearGradient id="g231" x1="611" y1="0" x2="942" y2="0" gradientUnits="userSpaceOnUse"><stop offset="0" stop-color="#59ffa2"/><stop offset="0.24" stop-color="#7dff9f"/><stop offset="0.48" stop-color="#a4ff9c"/><stop offset="0.73" stop-color="#cdff98"/><stop offset="0.97" stop-color="#f9ff94"/><stop offset="1" stop-color="#fffe93"/></linearGradient>
<linearGradient id="g232" x1="611" y1="0" x2="942" y2="0" gradientUnits="userSpaceOnUse"><stop offset="0" stop-color="#5affa3"/><stop offset="0.24" stop-color="#7effa0"/><stop offset="0.48" stop-color="#a5ff9d"/><stop offset="0.73" stop-color="#ceff99"/><stop offset="0.97" stop-color="#fbff95"/><stop offset="1" stop-color="#fffd94"/></linearGradient>
<linearGradient id="g233" x1="611" y1="0" x2="942" y2="0" gradientUnits="userSpaceOnUse"><stop offset="0" stop-color="#5bffa4"/><stop offset="0.24" stop-color="#7fffa1"/><stop offset="0.48" stop-color="#a6ff9e"/><stop offset="0.73" stop-color="#cfff9a"/><stop offset="0.97" stop-color="#fcff96"/><stop offset="1" stop-color="#fffc94"/><stop offset="1" stop-color="#fffc94"/></linearGradient>
<linearGradient id="g234" x1="611" y1="0" x2="942" y2="0" gradientUnits="userSpaceOnUse"><stop offset="0" stop-color="#5bffa5"/><stop offset="0.24" stop-color="#80ffa2"/><stop offset="0.48" stop-color="#a7ff9f"/><stop offset="0.73" stop-color="#d0ff9b"/><stop offset="0.97" stop-color="#fdff98"/><stop offset="1" stop-color="#fffa94"/></linearGradient>
<linearGradient id="g235" x1="611" y1="0" x2="942" y2="0" gradientUnits="userSpaceOnUse"><stop offset="0" stop-color="#5cffa6"/><stop offset="0.24" stop-color="#80ffa3"/><stop offset="0.48" stop-color="#a8ffa0"/><stop offset="0.73" stop-color="#d2ff9c"/><stop offset="0.97" stop-color="#ffff99"/><stop offset="1" stop-color="#fff994"/></linearGradient>
<linearGradient id="g236" x1="611" y1="0" x2="942" y2="0" gradientUnits="userSpaceOnUse"><stop offset="0" stop-color="#5dffa7"/><stop offset="0.24" stop-color="#81ffa4"/><stop offset="0.48" stop-color="#a9ffa1"/><stop offset="0.73" stop-color="#d3ff9e"/><stop offset="0.97" stop-color="#fffe99"/><stop offset="1" stop-color="#fff795"/></linearGradient>
<linearGradient id="g237" x1="611" y1="0" x2="942" y2="0" gradientUnits="userSpaceOnUse"><stop offset="0" stop-color="#5dffa8"/><stop offset="0.24" stop-color="#82ffa5"/><stop offset="0.48" stop-color="#aaffa2"/><stop offset="0.73" stop-color="#d4ff9f"/><stop offset="0.96" stop-color="#fffe9a"/><stop offset="1" stop-color="#fff695"/></linearGradient>
<linearGradient id="g238" x1="611" y1="0" x2="942" y2="0" gradientUnits="userSpaceOnUse"><stop offset="0" stop-color="#5effa9"/><stop offset="0.24" stop-color="#83ffa6"/><stop offset="0.48" stop-color="#abffa3"/><stop offset="0.73" stop-color="#d5ffa0"/><stop offset="0.95" stop-color="#fffe9c"/><stop offset="1" stop-color="#fff595"/></linearGradient>
<linearGradient id="g239" x1="611" y1="0" x2="942" y2="0" gradientUnits="userSpaceOnUse"><stop offset="0" stop-color="#5fffaa"/><stop offset="0.24" stop-color="#84ffa8"/><stop offset="0.48" stop-color="#acffa4"/><stop offset="0.73" stop-color="#d6ffa1"/><stop offset="0.95" stop-color="#fffe9d"/><stop offset="1" stop-color="#fff396"/></linearGradient>
<linearGradient id="g240" x1="611" y1="0" x2="942" y2="0" gradientUnits="userSpaceOnUse"><stop offset="0" stop-color="#60ffab"/><stop offset="0.24" stop-color="#85ffa9"/><stop offset="0.48" stop-color="#adffa5"/><stop offset="0.73" stop-color="#d8ffa2"/><stop offset="0.94" stop-color="#fffd9e"/><stop offset="1" stop-color="#fff296"/></linearGradient>
<linearGradient id="g241" x1="611" y1="0" x2="942" y2="0" gradientUnits="userSpaceOnUse"><stop offset="0" stop-color="#60ffad"/><stop offset="0.24" stop-color="#86ffaa"/><stop offset="0.48" stop-color="#aeffa7"/><stop offset="0.73" stop-color="#d9ffa3"/><stop offset="0.93" stop-color="#fffea0"/><stop offset="1" stop-color="#fff196"/></linearGradient>
<linearGradient id="g242" x1="611" y1="0" x2="942" y2="0" gradientUnits="userSpaceOnUse"><stop offset="0" stop-color="#61ffae"/><stop offset="0.24" stop-color="#87ffab"/><stop offset="0.48" stop-color="#afffa8"/><stop offset="0.73" stop-color="#daffa4"/><stop offset="0.92" stop-color="#fffea1"/><stop offset="1" stop-color="#ffef97"/></linearGradient>
<linearGradient id="g243" x1="611" y1="0" x2="942" y2="0" gradientUnits="userSpaceOnUse"><stop offset="0" stop-color="#62ffaf"/><stop offset="0.24" stop-color="#87ffac"/><stop offset="0.48" stop-color="#b0ffa9"/><stop offset="0.73" stop-color="#dbffa6"/><stop offset="0.92" stop-color="#fffea2"/><stop offset="1" stop-color="#ffee97"/></linearGradient>
<linearGradient id="g244" x1="611" y1="0" x2="942" y2="0" gradientUnits="userSpaceOnUse"><stop offset="0" stop-color="#63ffb0"/><stop offset="0.24" stop-color="#88ffad"/><stop offset="0.48" stop-color="#b1ffaa"/><stop offset="0.73" stop-color="#ddffa7"/><stop offset="0.91" stop-color="#fffea3"/><stop offset="1" stop-color="#ffed97"/></linearGradient>
<linearGradient id="g245" x1="611" y1="0" x2="942" y2="0" gradientUnits="userSpaceOnUse"><stop offset="0" stop-color="#63ffb1"/><stop offset="0.24" stop-color="#89ffae"/><stop offset="0.48" stop-color="#b2ffab"/><stop offset="0.73" stop-color="#deffa8"/><stop offset="0.9" stop-color="#fffea5"/><stop offset="1" stop-color="#ffec98"/></linearGradient>
<linearGradient id="g246" x1="611" y1="0" x2="942" y2="0" gradientUnits="userSpaceOnUse"><stop offset="0" stop-color="#64ffb2"/><stop offset="0.24" stop-color="#8affaf"/><stop offset="0.48" stop-color="#b3ffac"/><stop offset="0.73" stop-color="#dfffa9"/><stop offset="0.89" stop-color="#fffea6"/><stop offset="1" stop-color="#ffea98"/></linearGradient>
<linearGradient id="g247" x1="611" y1="0" x2="942" y2="0" gradientUnits="userSpaceOnUse"><stop offset="0" stop-color="#65ffb3"/><stop offset="0.24" stop-color="#8bffb0"/><stop offset="0.48" stop-color="#b4ffad"/><stop offset="0.73" stop-color="#e0ffaa"/><stop offset="0.89" stop-color="#fffea7"/><stop offset="1" stop-color="#ffe998"/></linearGradient>
<linearGradient id="g248" x1="611" y1="0" x2="942" y2="0" gradientUnits="userSpaceOnUse"><stop offset="0" stop-color="#66ffb4"/><stop offset="0.24" stop-color="#8cffb2"/><stop offset="0.48" stop-color="#b5ffaf"/><stop offset="0.73" stop-color="#e2ffac"/><stop offset="0.88" stop-color="#fffda8"/><stop offset="1" stop-color="#ffe898"/></linearGradient>
<linearGradient id="g249" x1="611" y1="0" x2="942" y2="0" gradientUnits="userSpaceOnUse"><stop offset="0" stop-color="#66ffb5"/><stop offset="0.24" stop-color="#8dffb3"/><stop offset="0.48" stop-color="#b6ffb0"/><stop offset="0.73" stop-color="#e3ffad"/><stop offset="0.87" stop-color="#fffeaa"/><stop offset="1" stop-color="#ffe699"/></linearGradient>
<linearGradient id="g250" x1="611" y1="0" x2="942" y2="0" gradientUnits="userSpaceOnUse"><stop offset="0" stop-color="#67ffb6"/><stop offset="0.24" stop-color="#8effb4"/><stop offset="0.48" stop-color="#b7ffb1"/><stop offset="0.73" stop-color="#e4ffae"/><stop offset="0.87" stop-color="#fffeab"/><stop offset="1" stop-color="#ffe599"/></linearGradient>
<linearGradient id="g251" x1="611" y1="0" x2="942" y2="0" gradientUnits="userSpaceOnUse"><stop offset="0" stop-color="#68ffb8"/><stop offset="0.24" stop-color="#8fffb5"/><stop offset="0.48" stop-color="#b9ffb2"/><stop offset="0.73" stop-color="#e6ffaf"/><stop offset="0.86" stop-color="#fffdac"/><stop offset="1" stop-color="#ffe499"/></linearGradient>
<linearGradient id="g252" x1="611" y1="0" x2="942" y2="0" gradientUnits="userSpaceOnUse"><stop offset="0" stop-color="#69ffb9"/><stop offset="0.24" stop-color="#90ffb6"/><stop offset="0.48" stop-color="#baffb3"/><stop offset="0.73" stop-color="#e7ffb1"/><stop offset="0.85" stop-color="#fffeae"/><stop offset="1" stop-color="#ffe39a"/></linearGradient>
<linearGradient id="g253" x1="611" y1="0" x2="942" y2="0" gradientUnits="userSpaceOnUse"><stop offset="0" stop-color="#6affba"/><stop offset="0.24" stop-color="#91ffb7"/><stop offset="0.48" stop-color="#bbffb5"/><stop offset="0.73" stop-color="#e8ffb2"/><stop offset="0.85" stop-color="#fffeaf"/><stop offset="1" stop-color="#ffe19a"/></linearGradient>
<linearGradient id="g254" x1="611" y1="0" x2="942" y2="0" gradientUnits="userSpaceOnUse"><stop offset="0" stop-color="#6affbb"/><stop offset="0.24" stop-color="#92ffb9"/><stop offset="0.48" stop-color="#bcffb6"/><stop offset="0.73" stop-color="#eaffb3"/><stop offset="0.84" stop-color="#fffeb1"/><stop offset="1" stop-color="#ffe09a"/></linearGradient>
<linearGradient id="g255" x1="611" y1="0" x2="942" y2="0" gradientUnits="userSpaceOnUse"><stop offset="0" stop-color="#6bffbc"/><stop offset="0.24" stop-color="#93ffba"/><stop offset="0.48" stop-color="#bdffb7"/><stop offset="0.73" stop-color="#ebffb4"/><stop offset="0.83" stop-color="#fffeb2"/><stop offset="1" stop-color="#ffdf9a"/></linearGradient>
<linearGradient id="g256" x1="611" y1="0" x2="942" y2="0" gradientUnits="userSpaceOnUse"><stop offset="0" stop-color="#6cffbd"/><stop offset="0.24" stop-color="#94ffbb"/><stop offset="0.48" stop-color="#beffb8"/><stop offset="0.73" stop-color="#ecffb6"/><stop offset="0.82" stop-color="#fffeb3"/><stop offset="1" stop-color="#ffdd9b"/></linearGradient>
<linearGradient id="g257" x1="611" y1="0" x2="942" y2="0" gradientUnits="userSpaceOnUse"><stop offset="0" stop-color="#6dffbf"/><stop offset="0.24" stop-color="#95ffbc"/><stop offset="0.48" stop-color="#bfffba"/><stop offset="0.73" stop-color="#eeffb7"/><stop offset="0.82" stop-color="#fffeb5"/><stop offset="1" stop-color="#ffdc9b"/></linearGradient>
<linearGradient id="g258" x1="611" y1="0" x2="942" y2="0" gradientUnits="userSpaceOnUse"><stop offset="0" stop-color="#6effc0"/><stop offset="0.24" stop-color="#96ffbd"/><stop offset="0.48" stop-color="#c1ffbb"/><stop offset="0.73" stop-color="#efffb8"/><stop offset="0.81" stop-color="#fffeb6"/><stop offset="1" stop-color="#ffdb9b"/></linearGradient>
<linearGradient id="g259" x1="611" y1="0" x2="942" y2="0" gradientUnits="userSpaceOnUse"><stop offset="0" stop-color="#6effc1"/><stop offset="0.24" stop-color="#97ffbf"/><stop offset="0.48" stop-color="#c2ffbc"/><stop offset="0.73" stop-color="#f1ffba"/><stop offset="0.8" stop-color="#fffdb7"/><stop offset="1" stop-color="#ffda9c"/></linearGradient>
<linearGradient id="g260" x1="611" y1="0" x2="942" y2="0" gradientUnits="userSpaceOnUse"><stop offset="0" stop-color="#6fffc2"/><stop offset="0.24" stop-color="#98ffc0"/><stop offset="0.48" stop-color="#c3ffbd"/><stop offset="0.73" stop-color="#f2ffbb"/><stop offset="0.79" stop-color="#fffeb9"/><stop offset="1" stop-color="#ffd99c"/></linearGradient>
<linearGradient id="g261" x1="611" y1="0" x2="942" y2="0" gradientUnits="userSpaceOnUse"><stop offset="0" stop-color="#70ffc3"/><stop offset="0.24" stop-color="#99ffc1"/><stop offset="0.48" stop-color="#c4ffbf"/><stop offset="0.73" stop-color="#f3ffbc"/><stop offset="0.79" stop-color="#fffeba"/><stop offset="1" stop-color="#ffd79c"/></linearGradient>
<linearGradient id="g262" x1="611" y1="0" x2="942" y2="0" gradientUnits="userSpaceOnUse"><stop offset="0" stop-color="#71ffc4"/><stop offset="0.24" stop-color="#9affc2"/><stop offset="0.48" stop-color="#c5ffc0"/><stop offset="0.73" stop-color="#f5ffbd"/><stop offset="0.78" stop-color="#fffdbc"/><stop offset="1" stop-color="#ffd69c"/></linearGradient>
<linearGradient id="g263" x1="611" y1="0" x2="942" y2="0" gradientUnits="userSpaceOnUse"><stop offset="0" stop-color="#72ffc6"/><stop offset="0.24" stop-color="#9bffc4"/><stop offset="0.48" stop-color="#c7ffc1"/><stop offset="0.73" stop-color="#f6ffbf"/><stop offset="0.77" stop-color="#fffebd"/><stop offset="1" stop-color="#ffd59d"/></linearGradient>
<linearGradient id="g264" x1="611" y1="0" x2="942" y2="0" gradientUnits="userSpaceOnUse"><stop offset="0" stop-color="#73ffc7"/><stop offset="0.24" stop-color="#9cffc5"/><stop offset="0.48" stop-color="#c8ffc3"/><stop offset="0.73" stop-color="#f8ffc0"/><stop offset="0.77" stop-color="#fffebf"/><stop offset="1" stop-color="#ffd49d"/></linearGradient>
<linearGradient id="g265" x1="611" y1="0" x2="942" y2="0" gradientUnits="userSpaceOnUse"><stop offset="0" stop-color="#74ffc8"/><stop offset="0.24" stop-color="#9dffc6"/><stop offset="0.48" stop-color="#c9ffc4"/><stop offset="0.73" stop-color="#f9ffc2"/><stop offset="0.76" stop-color="#fffdc0"/><stop offset="1" stop-color="#ffd39e"/><stop offset="1" stop-color="#ffd29d"/></linearGradient>
<linearGradient id="g266" x1="611" y1="0" x2="942" y2="0" gradientUnits="userSpaceOnUse"><stop offset="0" stop-color="#74ffc9"/><stop offset="0.24" stop-color="#9effc7"/><stop offset="0.48" stop-color="#caffc5"/><stop offset="0.73" stop-color="#fbffc3"/><stop offset="0.76" stop-color="#fffdc1"/><stop offset="0.99" stop-color="#ffd39f"/><stop offset="1" stop-color="#ffd19e"/></linearGradient>
<linearGradient id="g267" x1="611" y1="0" x2="942" y2="0" gradientUnits="userSpaceOnUse"><stop offset="0" stop-color="#75ffcb"/><stop offset="0.24" stop-color="#9fffc9"/><stop offset="0.48" stop-color="#cbffc7"/><stop offset="0.73" stop-color="#fcffc4"/><stop offset="0.76" stop-color="#fffcc1"/><stop offset="0.99" stop-color="#ffd19f"/><stop offset="1" stop-color="#ffd09e"/></linearGradient>
<linearGradient id="g268" x1="611" y1="0" x2="942" y2="0" gradientUnits="userSpaceOnUse"><stop offset="0" stop-color="#76ffcc"/><stop offset="0.24" stop-color="#a0ffca"/><stop offset="0.48" stop-color="#cdffc8"/><stop offset="0.73" stop-color="#feffc6"/><stop offset="0.97" stop-color="#ffd4a2"/><stop offset="1" stop-color="#ffcf9e"/></linearGradient>
<linearGradient id="g269" x1="611" y1="0" x2="942" y2="0" gradientUnits="userSpaceOnUse"><stop offset="0" stop-color="#77ffcd"/><stop offset="0.24" stop-color="#a1ffcb"/><stop offset="0.48" stop-color="#ceffc9"/><stop offset="0.73" stop-color="#ffffc7"/><stop offset="0.95" stop-color="#ffd5a4"/><stop offset="1" stop-color="#ffce9e"/></linearGradient>
<linearGradient id="g270" x1="611" y1="0" x2="942" y2="0" gradientUnits="userSpaceOnUse"><stop offset="0" stop-color="#78ffcf"/><stop offset="0.24" stop-color="#a2ffcd"/><stop offset="0.48" stop-color="#cfffcb"/><stop offset="0.72" stop-color="#fffec8"/><stop offset="0.95" stop-color="#ffd4a5"/><stop offset="1" stop-color="#ffcc9f"/></linearGradient>
<linearGradient id="g271" x1="611" y1="0" x2="942" y2="0" gradientUnits="userSpaceOnUse"><stop offset="0" stop-color="#79ffd0"/><stop offset="0.24" stop-color="#a3ffce"/><stop offset="0.48" stop-color="#d1ffcc"/><stop offset="0.72" stop-color="#fffec9"/><stop offset="0.95" stop-color="#ffd4a6"/><stop offset="1" stop-color="#ffcb9f"/></linearGradient>
<linearGradient id="g272" x1="611" y1="0" x2="942" y2="0" gradientUnits="userSpaceOnUse"><stop offset="0" stop-color="#7affd1"/><stop offset="0.24" stop-color="#a4ffcf"/><stop offset="0.48" stop-color="#d2ffcd"/><stop offset="0.71" stop-color="#fffeca"/><stop offset="0.94" stop-color="#ffd3a7"/><stop offset="1" stop-color="#ffca9f"/></linearGradient>
<linearGradient id="g273" x1="611" y1="0" x2="942" y2="0" gradientUnits="userSpaceOnUse"><stop offset="0" stop-color="#7bffd2"/><stop offset="0.24" stop-color="#a5ffd1"/><stop offset="0.48" stop-color="#d3ffcf"/><stop offset="0.7" stop-color="#fffecc"/><stop offset="0.93" stop-color="#ffd4a9"/><stop offset="1" stop-color="#ffc99f"/></linearGradient>
<linearGradient id="g274" x1="611" y1="0" x2="942" y2="0" gradientUnits="userSpaceOnUse"><stop offset="0" stop-color="#7cffd4"/><stop offset="0.24" stop-color="#a6ffd2"/><stop offset="0.48" stop-color="#d4ffd0"/><stop offset="0.69" stop-color="#fffece"/><stop offset="0.92" stop-color="#ffd3aa"/><stop offset="1" stop-color="#ffc8a0"/></linearGradient>
<linearGradient id="g275" x1="611" y1="0" x2="942" y2="0" gradientUnits="userSpaceOnUse"><stop offset="0" stop-color="#7cffd5"/><stop offset="0.24" stop-color="#a7ffd3"/><stop offset="0.48" stop-color="#d6ffd2"/><stop offset="0.69" stop-color="#fffecf"/><stop offset="0.92" stop-color="#ffd3ab"/><stop offset="1" stop-color="#ffc7a0"/></linearGradient>
<linearGradient id="g276" x1="611" y1="0" x2="942" y2="0" gradientUnits="userSpaceOnUse"><stop offset="0" stop-color="#7dffd6"/><stop offset="0.24" stop-color="#a8ffd5"/><stop offset="0.48" stop-color="#d7ffd3"/><stop offset="0.68" stop-color="#fffed1"/><stop offset="0.91" stop-color="#ffd4ad"/><stop offset="1" stop-color="#ffc5a0"/></linearGradient>
<linearGradient id="g277" x1="611" y1="0" x2="942" y2="0" gradientUnits="userSpaceOnUse"><stop offset="0" stop-color="#7effd8"/><stop offset="0.24" stop-color="#aaffd6"/><stop offset="0.48" stop-color="#d8ffd5"/><stop offset="0.67" stop-color="#fffed2"/><stop offset="0.9" stop-color="#ffd3ae"/><stop offset="1" stop-color="#ffc4a1"/></linearGradient>
<linearGradient id="g278" x1="611" y1="0" x2="942" y2="0" gradientUnits="userSpaceOnUse"><stop offset="0" stop-color="#7fffd9"/><stop offset="0.24" stop-color="#abffd8"/><stop offset="0.48" stop-color="#daffd6"/><stop offset="0.67" stop-color="#fffdd3"/><stop offset="0.89" stop-color="#ffd3af"/><stop offset="1" stop-color="#ffc3a1"/></linearGradient>
<linearGradient id="g279" x1="611" y1="0" x2="942" y2="0" gradientUnits="userSpaceOnUse"><stop offset="0" stop-color="#80ffda"/><stop offset="0.24" stop-color="#acffd9"/><stop offset="0.48" stop-color="#dbffd8"/><stop offset="0.66" stop-color="#fffed5"/><stop offset="0.89" stop-color="#ffd3b0"/><stop offset="1" stop-color="#ffc2a1"/></linearGradient>
<linearGradient id="g280" x1="611" y1="0" x2="942" y2="0" gradientUnits="userSpaceOnUse"><stop offset="0" stop-color="#81ffdc"/><stop offset="0.24" stop-color="#adffda"/><stop offset="0.48" stop-color="#ddffd9"/><stop offset="0.65" stop-color="#fffed7"/><stop offset="0.88" stop-color="#ffd3b1"/><stop offset="1" stop-color="#ffc1a1"/></linearGradient>
<linearGradient id="g281" x1="611" y1="0" x2="942" y2="0" gradientUnits="userSpaceOnUse"><stop offset="0" stop-color="#82ffdd"/><stop offset="0.24" stop-color="#aeffdc"/><stop offset="0.48" stop-color="#deffda"/><stop offset="0.64" stop-color="#fffed9"/><stop offset="0.87" stop-color="#ffd4b3"/><stop offset="1" stop-color="#ffc0a2"/></linearGradient>
<linearGradient id="g282" x1="611" y1="0" x2="942" y2="0" gradientUnits="userSpaceOnUse"><stop offset="0" stop-color="#83ffdf"/><stop offset="0.24" stop-color="#afffdd"/><stop offset="0.48" stop-color="#dfffdc"/><stop offset="0.64" stop-color="#fffeda"/><stop offset="0.86" stop-color="#ffd4b5"/><stop offset="1" stop-color="#ffbea2"/></linearGradient>
<linearGradient id="g283" x1="611" y1="0" x2="942" y2="0" gradientUnits="userSpaceOnUse"><stop offset="0" stop-color="#84ffe0"/><stop offset="0.24" stop-color="#b0ffdf"/><stop offset="0.48" stop-color="#e1ffde"/><stop offset="0.63" stop-color="#fffedb"/><stop offset="0.85" stop-color="#ffd3b6"/><stop offset="1" stop-color="#ffbda2"/></linearGradient>
<linearGradient id="g284" x1="611" y1="0" x2="942" y2="0" gradientUnits="userSpaceOnUse"><stop offset="0" stop-color="#85ffe1"/><stop offset="0.24" stop-color="#b2ffe0"/><stop offset="0.48" stop-color="#e2ffdf"/><stop offset="0.62" stop-color="#fffedd"/><stop offset="0.85" stop-color="#ffd4b7"/><stop offset="1" stop-color="#ffbca2"/></linearGradient>
<linearGradient id="g285" x1="611" y1="0" x2="942" y2="0" gradientUnits="userSpaceOnUse"><stop offset="0" stop-color="#86ffe3"/><stop offset="0.24" stop-color="#b3ffe2"/><stop offset="0.48" stop-color="#e4ffe1"/><stop offset="0.62" stop-color="#fffedf"/><stop offset="0.84" stop-color="#ffd3b8"/><stop offset="1" stop-color="#ffbba3"/></linearGradient>
<linearGradient id="g286" x1="611" y1="0" x2="942" y2="0" gradientUnits="userSpaceOnUse"><stop offset="0" stop-color="#87ffe4"/><stop offset="0.24" stop-color="#b4ffe3"/><stop offset="0.48" stop-color="#e5ffe2"/><stop offset="0.61" stop-color="#fffde0"/><stop offset="0.83" stop-color="#ffd3ba"/><stop offset="1" stop-color="#ffbaa3"/></linearGradient>
<linearGradient id="g287" x1="611" y1="0" x2="942" y2="0" gradientUnits="userSpaceOnUse"><stop offset="0" stop-color="#88ffe6"/><stop offset="0.24" stop-color="#b5ffe5"/><stop offset="0.48" stop-color="#e7ffe4"/><stop offset="0.6" stop-color="#fffee2"/><stop offset="0.82" stop-color="#ffd4bc"/><stop offset="1" stop-color="#ffb9a3"/></linearGradient>
<linearGradient id="g288" x1="611" y1="0" x2="942" y2="0" gradientUnits="userSpaceOnUse"><stop offset="0" stop-color="#89ffe7"/><stop offset="0.24" stop-color="#b6ffe6"/><stop offset="0.48" stop-color="#e8ffe5"/><stop offset="0.6" stop-color="#fffee4"/><stop offset="0.82" stop-color="#ffd3bd"/><stop offset="1" stop-color="#ffb8a3"/></linearGradient>
<linearGradient id="g289" x1="611" y1="0" x2="942" y2="0" gradientUnits="userSpaceOnUse"><stop offset="0" stop-color="#8affe9"/><stop offset="0.24" stop-color="#b8ffe8"/><stop offset="0.48" stop-color="#e9ffe7"/><stop offset="0.59" stop-color="#fffde5"/><stop offset="0.81" stop-color="#ffd3be"/><stop offset="1" stop-color="#ffb7a4"/></linearGradient>
<linearGradient id="g290" x1="611" y1="0" x2="942" y2="0" gradientUnits="userSpaceOnUse"><stop offset="0" stop-color="#8bffea"/><stop offset="0.24" stop-color="#b9ffe9"/><stop offset="0.48" stop-color="#ebffe8"/><stop offset="0.58" stop-color="#fffee7"/><stop offset="0.8" stop-color="#ffd3c0"/><stop offset="1" stop-color="#ffb6a4"/></linearGradient>
<linearGradient id="g291" x1="611" y1="0" x2="942" y2="0" gradientUnits="userSpaceOnUse"><stop offset="0" stop-color="#8cffec"/><stop offset="0.24" stop-color="#baffeb"/><stop offset="0.48" stop-color="#ecffea"/><stop offset="0.57" stop-color="#fffee8"/><stop offset="0.79" stop-color="#ffd4c1"/><stop offset="1" stop-color="#ffb4a4"/></linearGradient>
<linearGradient id="g292" x1="611" y1="0" x2="942" y2="0" gradientUnits="userSpaceOnUse"><stop offset="0" stop-color="#8dffed"/><stop offset="0.24" stop-color="#bbffec"/><stop offset="0.48" stop-color="#eeffec"/><stop offset="0.56" stop-color="#fffeea"/><stop offset="0.78" stop-color="#ffd4c3"/><stop offset="1" stop-color="#ffb3a4"/></linearGradient>
<linearGradient id="g293" x1="611" y1="0" x2="942" y2="0" gradientUnits="userSpaceOnUse"><stop offset="0" stop-color="#8effef"/><stop offset="0.24" stop-color="#bdffee"/><stop offset="0.48" stop-color="#efffed"/><stop offset="0.56" stop-color="#fffeec"/><stop offset="0.78" stop-color="#ffd3c4"/><stop offset="1" stop-color="#ffb2a5"/></linearGradient>
<linearGradient id="g294" x1="611" y1="0" x2="942" y2="0" gradientUnits="userSpaceOnUse"><stop offset="0" stop-color="#8ffff0"/><stop offset="0.24" stop-color="#befff0"/><stop offset="0.48" stop-color="#f1ffef"/><stop offset="0.55" stop-color="#fffded"/><stop offset="0.77" stop-color="#ffd3c5"/><stop offset="1" stop-color="#ffb1a5"/></linearGradient>
<linearGradient id="g295" x1="611" y1="0" x2="942" y2="0" gradientUnits="userSpaceOnUse"><stop offset="0" stop-color="#90fff2"/><stop offset="0.24" stop-color="#bffff1"/><stop offset="0.48" stop-color="#f3fff1"/><stop offset="0.54" stop-color="#fffeef"/><stop offset="0.76" stop-color="#ffd3c7"/><stop offset="1" stop-color="#ffb0a5"/></linearGradient>
<linearGradient id="g296" x1="611" y1="0" x2="942" y2="0" gradientUnits="userSpaceOnUse"><stop offset="0" stop-color="#91fff3"/><stop offset="0.24" stop-color="#c1fff3"/><stop offset="0.48" stop-color="#f4fff2"/><stop offset="0.54" stop-color="#fffef1"/><stop offset="0.75" stop-color="#ffd4c9"/><stop offset="0.99" stop-color="#ffb0a6"/><stop offset="1" stop-color="#ffafa5"/></linearGradient>
<linearGradient id="g297" x1="611" y1="0" x2="942" y2="0" gradientUnits="userSpaceOnUse"><stop offset="0" stop-color="#92fff5"/><stop offset="0.24" stop-color="#c2fff4"/><stop offset="0.48" stop-color="#f6fff4"/><stop offset="0.53" stop-color="#fffdf2"/><stop offset="0.75" stop-color="#ffd3ca"/><stop offset="0.99" stop-color="#ffafa7"/><stop offset="1" stop-color="#ffaea6"/></linearGradient>
<linearGradient id="g298" x1="611" y1="0" x2="942" y2="0" gradientUnits="userSpaceOnUse"><stop offset="0" stop-color="#93fff6"/><stop offset="0.24" stop-color="#c3fff6"/><stop offset="0.48" stop-color="#f7fff6"/><stop offset="0.53" stop-color="#fffdf4"/><stop offset="0.74" stop-color="#ffd3cb"/><stop offset="0.98" stop-color="#ffafa8"/><stop offset="1" stop-color="#ffada6"/></linearGradient>
<linearGradient id="g299" x1="611" y1="0" x2="942" y2="0" gradientUnits="userSpaceOnUse"><stop offset="0" stop-color="#95fff8"/><stop offset="0.24" stop-color="#c4fff8"/><stop offset="0.48" stop-color="#f9fff7"/><stop offset="0.52" stop-color="#fffef6"/><stop offset="0.73" stop-color="#ffd3cd"/><stop offset="0.97" stop-color="#ffafaa"/><stop offset="1" stop-color="#ffaca6"/></linearGradient>
<linearGradient id="g300" x1="611" y1="0" x2="942" y2="0" gradientUnits="userSpaceOnUse"><stop offset="0" stop-color="#96fff9"/><stop offset="0.24" stop-color="#c6fff9"/><stop offset="0.48" stop-color="#fafff9"/><stop offset="0.51" stop-color="#fffdf7"/><stop offset="0.73" stop-color="#ffd2cd"/><stop offset="0.97" stop-color="#ffafaa"/><stop offset="1" stop-color="#ffaba6"/></linearGradient>
<linearGradient id="g301" x1="611" y1="0" x2="942" y2="0" gradientUnits="userSpaceOnUse"><stop offset="0" stop-color="#97fffb"/><stop offset="0.24" stop-color="#c7fffb"/><stop offset="0.48" stop-color="#fcfffb"/><stop offset="0.51" stop-color="#fffcf8"/><stop offset="0.73" stop-color="#ffd2ce"/><stop offset="0.97" stop-color="#ffaeab"/><stop offset="1" stop-color="#ffaaa7"/></linearGradient>
<linearGradient id="g302" x1="611" y1="0" x2="942" y2="0" gradientUnits="userSpaceOnUse"><stop offset="0" stop-color="#98fffd"/><stop offset="0.24" stop-color="#c8fffd"/><stop offset="0.48" stop-color="#fefffd"/><stop offset="0.73" stop-color="#ffd0ce"/><stop offset="0.97" stop-color="#ffadab"/><stop offset="1" stop-color="#ffa9a7"/></linearGradient>
<linearGradient id="g303" x1="611" y1="0" x2="942" y2="0" gradientUnits="userSpaceOnUse"><stop offset="0" stop-color="#99fffe"/><stop offset="0.24" stop-color="#cafffe"/><stop offset="0.48" stop-color="#fffffe"/><stop offset="0.69" stop-color="#ffd4d4"/><stop offset="0.94" stop-color="#ffb0af"/><stop offset="1" stop-color="#ffa7a7"/></linearGradient>
<linearGradient id="g304" x1="611" y1="0" x2="942" y2="0" gradientUnits="userSpaceOnUse"><stop offset="0" stop-color="#9afeff"/><stop offset="0.24" stop-color="#cafeff"/><stop offset="0.48" stop-color="#fffdfe"/><stop offset="0.69" stop-color="#ffd3d4"/><stop offset="0.94" stop-color="#ffaeaf"/><stop offset="1" stop-color="#ffa6a7"/></linearGradient>
<linearGradient id="g305" x1="611" y1="0" x2="942" y2="0" gradientUnits="userSpaceOnUse"><stop offset="0" stop-color="#9afdff"/><stop offset="0.24" stop-color="#cafcff"/><stop offset="0.48" stop-color="#fffbfe"/><stop offset="0.69" stop-color="#ffd2d4"/><stop offset="0.94" stop-color="#ffadb0"/><stop offset="1" stop-color="#ffa5a8"/></linearGradient>
<linearGradient id="g306" x1="611" y1="0" x2="942" y2="0" gradientUnits="userSpaceOnUse"><stop offset="0" stop-color="#9afbff"/><stop offset="0.24" stop-color="#cafbff"/><stop offset="0.48" stop-color="#fffafe"/><stop offset="0.69" stop-color="#ffd0d4"/><stop offset="0.94" stop-color="#ffacb0"/><stop offset="1" stop-color="#ffa4a8"/></linearGradient>
<linearGradient id="g307" x1="611" y1="0" x2="942" y2="0" gradientUnits="userSpaceOnUse"><stop offset="0" stop-color="#9af9ff"/><stop offset="0.24" stop-color="#cbf9ff"/><stop offset="0.48" stop-color="#fff8ff"/><stop offset="0.69" stop-color="#ffcfd5"/><stop offset="0.94" stop-color="#ffabb0"/><stop offset="1" stop-color="#ffa3a8"/></linearGradient>
<linearGradient id="g308" x1="611" y1="0" x2="942" y2="0" gradientUnits="userSpaceOnUse"><stop offset="0" stop-color="#9af8ff"/><stop offset="0.24" stop-color="#cbf7ff"/><stop offset="0.48" stop-color="#fff6ff"/><stop offset="0.7" stop-color="#ffcdd4"/><stop offset="0.94" stop-color="#ffaab0"/><stop offset="1" stop-color="#ffa2a8"/></linearGradient>
<linearGradient id="g309" x1="611" y1="0" x2="942" y2="0" gradientUnits="userSpaceOnUse"><stop offset="0" stop-color="#9af6ff"/><stop offset="0.24" stop-color="#cbf6ff"/><stop offset="0.48" stop-color="#fff5ff"/><stop offset="0.7" stop-color="#ffccd4"/><stop offset="0.94" stop-color="#ffa9b0"/><stop offset="1" stop-color="#ffa1a9"/></linearGradient>
<linearGradient id="g310" x1="611" y1="0" x2="942" y2="0" gradientUnits="userSpaceOnUse"><stop offset="0" stop-color="#9af5ff"/><stop offset="0.24" stop-color="#cbf4ff"/><stop offset="0.48" stop-color="#fff3ff"/><stop offset="0.7" stop-color="#ffcad5"/><stop offset="0.94" stop-color="#ffa8b0"/><stop offset="1" stop-color="#ffa0a9"/></linearGradient>
<linearGradient id="g311" x1="611" y1="0" x2="942" y2="0" gradientUnits="userSpaceOnUse"><stop offset="0" stop-color="#9bf3ff"/><stop offset="0.24" stop-color="#cbf2ff"/><stop offset="0.48" stop-color="#fff2ff"/><stop offset="0.7" stop-color="#ffc9d4"/><stop offset="0.94" stop-color="#ffa6b0"/><stop offset="1" stop-color="#ff9fa9"/></linearGradient>
<linearGradient id="g312" x1="611" y1="0" x2="942" y2="0" gradientUnits="userSpaceOnUse"><stop offset="0" stop-color="#9bf1ff"/><stop offset="0.24" stop-color="#cbf1ff"/><stop offset="0.48" stop-color="#fff0ff"/><stop offset="0.7" stop-color="#ffc7d4"/><stop offset="0.95" stop-color="#ffa5b0"/><stop offset="1" stop-color="#ff9ea9"/></linearGradient>
<linearGradient id="g313" x1="611" y1="0" x2="942" y2="0" gradientUnits="userSpaceOnUse"><stop offset="0" stop-color="#9bf0ff"/><stop offset="0.24" stop-color="#cbefff"/><stop offset="0.48" stop-color="#ffeeff"/><stop offset="0.71" stop-color="#ffc5d3"/><stop offset="0.95" stop-color="#ffa3b0"/><stop offset="1" stop-color="#ff9daa"/></linearGradient>
<linearGradient id="g314" x1="611" y1="0" x2="942" y2="0" gradientUnits="userSpaceOnUse"><stop offset="0" stop-color="#9beeff"/><stop offset="0.24" stop-color="#cbedff"/><stop offset="0.48" stop-color="#ffedff"/><stop offset="0.72" stop-color="#ffc2d2"/><stop offset="0.96" stop-color="#ffa1af"/><stop offset="1" stop-color="#ff9caa"/></linearGradient>
<linearGradient id="g315" x1="611" y1="0" x2="942" y2="0" gradientUnits="userSpaceOnUse"><stop offset="0" stop-color="#9bedff"/><stop offset="0.24" stop-color="#cbecff"/><stop offset="0.48" stop-color="#feebff"/><stop offset="0.72" stop-color="#ffc0d2"/><stop offset="0.96" stop-color="#ff9faf"/><stop offset="1" stop-color="#ff9baa"/></linearGradient>
<linearGradient id="g316" x1="611" y1="0" x2="942" y2="0" gradientUnits="userSpaceOnUse"><stop offset="0" stop-color="#9bebff"/><stop offset="0.24" stop-color="#cbeaff"/><stop offset="0.48" stop-color="#fee9ff"/><stop offset="0.73" stop-color="#ffbed1"/><stop offset="0.97" stop-color="#ff9eae"/><stop offset="1" stop-color="#ff9aaa"/></linearGradient>
<linearGradient id="g317" x1="611" y1="0" x2="942" y2="0" gradientUnits="userSpaceOnUse"><stop offset="0" stop-color="#9beaff"/><stop offset="0.24" stop-color="#cbe9ff"/><stop offset="0.48" stop-color="#fee8ff"/><stop offset="0.73" stop-color="#ffbdd1"/><stop offset="0.97" stop-color="#ff9daf"/><stop offset="1" stop-color="#ff99ab"/></linearGradient>
<linearGradient id="g318" x1="611" y1="0" x2="942" y2="0" gradientUnits="userSpaceOnUse"><stop offset="0" stop-color="#9ce8ff"/><stop offset="0.24" stop-color="#cbe7ff"/><stop offset="0.48" stop-color="#fee6ff"/><stop offset="0.73" stop-color="#ffbcd2"/><stop offset="0.97" stop-color="#ff9caf"/><stop offset="1" stop-color="#ff98ab"/></linearGradient>
<linearGradient id="g319" x1="0" y1="0" x2="0" y2="1"><stop offset="0" stop-color="#2e2e2e"/><stop offset="0.5" stop-color="#282828"/><stop offset="0.51" stop-color="#141414"/><stop offset="1" stop-color="#171717"/></linearGradient>
<linearGradient id="g320" x1="0" y1="0" x2="0" y2="1"><stop offset="0" stop-color="#484848"/><stop offset="1" stop-color="#404040"/></linearGradient>
<linearGradient id="g321" x1="0" y1="0" x2="0" y2="1"><stop offset="0" stop-color="#808080"/><stop offset="1" stop-color="#7a7a7a"/></linearGradient>
<linearGradient id="g322" x1="0" y1="0" x2="0" y2="1"><stop offset="0" stop-color="#3a3a3a"/><stop offset="1" stop-color="#222222"/></linearGradient>
<linearGradient id="g323" x1="0" y1="0" x2="0" y2="1"><stop offset="0" stop-color="#6e6e6e"/><stop offset="1" stop-color="#626262"/></linearGradient>
<linearGradient id="g324" x1="0" y1="0" x2="0" y2="1"><stop offset="0" stop-color="#b8b8b8"/><stop offset="0.2" stop-color="#a2a2a2"/><stop offset="0.62" stop-color="#7e7e7e"/><stop offset="1" stop-color="#5a5a5a"/></linearGradient>
<linearGradient id="g325" x1="0" y1="0" x2="0" y2="1"><stop offset="0" stop-color="#b0b0b0"/><stop offset="1" stop-color="#8a8a8a"/></linearGradient>
<linearGradient id="g326" x1="0" y1="0" x2="0" y2="1"><stop offset="0" stop-color="#9a9a9a"/><stop offset="1" stop-color="#6c6c6c"/></linearGradient>
<linearGradient id="g327" x1="0" y1="0" x2="0" y2="1"><stop offset="0" stop-color="#7c7c7c"/><stop offset="1" stop-color="#a4a4a4"/></linearGradient>
<linearGradient id="g328" x1="0" y1="0" x2="0" y2="1"><stop offset="0" stop-color="#b6b6b6"/><stop offset="0.5" stop-color="#a2a2a2"/><stop offset="0.51" stop-color="#868686"/><stop offset="1" stop-color="#909090"/></linearGradient>
<linearGradient id="g329" x1="0" y1="0" x2="0" y2="1"><stop offset="0" stop-color="#b2b2b2"/><stop offset="1" stop-color="#727272"/></linearGradient>
<linearGradient id="g330" x1="0" y1="0" x2="0" y2="1"><stop offset="0" stop-color="#707070"/><stop offset="1" stop-color="#a0a0a0"/></linearGradient>
<linearGradient id="g331" x1="0" y1="0" x2="0" y2="1"><stop offset="0" stop-color="#a8a8a8"/><stop offset="1" stop-color="#828282"/></linearGradient>
</defs>
<rect x="0" y="0" width="1603" height="863" fill="#333333" />
<rect x="0" y="0" width="1603" height="46" fill="#222222" />
<path d="M0 0H126Q131 0 131 5V44.5H0Z" fill="url(#g1)"/>
<path d="M0 0.5H126Q130.5 0.5 130.5 5V44" fill="none" stroke="#7e7e7e" stroke-width="1"/>
<line x1="80.5" y1="1" x2="80.5" y2="44" stroke="#6c6c6c" stroke-width="1" />
<rect x="0" y="44.5" width="131" height="1" fill="#1e1e1e" />
<text x="3" y="30" font-size="17.5" fill="#f0f0f0" textLength="69" lengthAdjust="spacingAndGlyphs" >History 1</text>
<circle cx="104.5" cy="25" r="14.5" fill="url(#g2)"/>
<line x1="100" y1="26.5" x2="109" y2="26.5" stroke="#8a8a8a" stroke-width="1.2" />
<line x1="104.5" y1="22" x2="104.5" y2="31" stroke="#8a8a8a" stroke-width="1.2" />
<path d="M817.5 44.5V5Q817.5 0 822.5 0H1027Q1032 0 1032 5V44.5Z" fill="url(#g3)"/>
<path d="M818.5 44.5V5Q818.5 0.5 822.5 0.5H826V44.5Z" fill="#1fdc1f"/>
<text x="831" y="17" font-size="16" fill="#f2f2f2" textLength="98" lengthAdjust="spacingAndGlyphs" >X-Rite i1Pro 2</text>
<text x="831" y="38.7" font-size="16" fill="#f2f2f2" textLength="83" lengthAdjust="spacingAndGlyphs" >Direct View</text>
<circle cx="949" cy="22" r="14" fill="url(#g4)"/>
<path d="M942.5 20.3h13l-6.5 7.5z" fill="#f6f6f6"/>
<line x1="978.5" y1="4" x2="978.5" y2="44" stroke="#3a3a3a" stroke-width="1.5" />
<line x1="979.7" y1="4" x2="979.7" y2="44" stroke="#808080" stroke-width="0.8" />
<circle cx="1009" cy="22" r="18.3" fill="#0000e6" stroke="#ffffff" stroke-width="1.4"/>
<text x="1009" y="27" font-size="14" fill="#ffffff" text-anchor="middle" textLength="25" lengthAdjust="spacingAndGlyphs" >198</text>
<path d="M1041 44.5V5Q1041 0 1046 0H1230.5Q1235.5 0 1235.5 5V44.5Z" fill="url(#g3)"/>
<path d="M1042 44.5V5Q1042 0.5 1046 0.5H1049.5V44.5Z" fill="#1fdc1f"/>
<text x="1054.5" y="17" font-size="16" fill="#f2f2f2" textLength="95.5" lengthAdjust="spacingAndGlyphs" >Mobile Forge</text>
<circle cx="1211.5" cy="22" r="14" fill="url(#g4)"/>
<path d="M1205 20.3h13l-6.5 7.5z" fill="#f6f6f6"/>
<path d="M1245.5 44.5V5Q1245.5 0 1250.5 0H1455Q1460 0 1460 5V44.5Z" fill="url(#g3)"/>
<path d="M1246.5 44.5V5Q1246.5 0.5 1250.5 0.5H1254V44.5Z" fill="#e6e600"/>
<text x="1259" y="17" font-size="16" fill="#f2f2f2" textLength="158" lengthAdjust="spacingAndGlyphs" >Direct Display Control</text>
<circle cx="1436" cy="22" r="14" fill="url(#g4)"/>
<path d="M1429.5 20.3h13l-6.5 7.5z" fill="#f6f6f6"/>
<rect x="1465.8" y="0.8" width="49.5" height="40.2" rx="5.5" fill="url(#g5)" stroke="#dedede" stroke-width="1.5"/>
<circle cx="1490.5" cy="20" r="14.5" fill="url(#g6)"/>
<rect x="1519.8" y="0.8" width="49.5" height="40.2" rx="5.5" fill="url(#g5)" stroke="#dedede" stroke-width="1.5"/>
<circle cx="1544.5" cy="20" r="14.5" fill="url(#g6)"/>
<rect x="1573.8" y="0.8" width="49.5" height="40.2" rx="5.5" fill="url(#g5)" stroke="#dedede" stroke-width="1.5"/>
<circle cx="1598.5" cy="20" r="14.5" fill="url(#g6)"/>
<path d="M-1.9 -6.4L-1.35 -9.6H1.35L1.9 -6.4Z" fill="#dadada" transform="translate(1490.5 20) rotate(0)"/><path d="M-1.9 -6.4L-1.35 -9.6H1.35L1.9 -6.4Z" fill="#dadada" transform="translate(1490.5 20) rotate(45)"/><path d="M-1.9 -6.4L-1.35 -9.6H1.35L1.9 -6.4Z" fill="#dadada" transform="translate(1490.5 20) rotate(90)"/><path d="M-1.9 -6.4L-1.35 -9.6H1.35L1.9 -6.4Z" fill="#dadada" transform="translate(1490.5 20) rotate(135)"/><path d="M-1.9 -6.4L-1.35 -9.6H1.35L1.9 -6.4Z" fill="#dadada" transform="translate(1490.5 20) rotate(180)"/><path d="M-1.9 -6.4L-1.35 -9.6H1.35L1.9 -6.4Z" fill="#dadada" transform="translate(1490.5 20) rotate(225)"/><path d="M-1.9 -6.4L-1.35 -9.6H1.35L1.9 -6.4Z" fill="#dadada" transform="translate(1490.5 20) rotate(270)"/><path d="M-1.9 -6.4L-1.35 -9.6H1.35L1.9 -6.4Z" fill="#dadada" transform="translate(1490.5 20) rotate(315)"/>
<circle cx="1490.5" cy="20" r="5.8" fill="none" stroke="#dadada" stroke-width="2.7"/>
<text x="1544.3" y="29.3" font-size="22" fill="#f6f6f6" text-anchor="middle" font-weight="bold" >?</text>
<path d="M1598.3 11.5v16.5l-9.3-8.2z" fill="#f8f8f8"/>
<text x="18" y="98" font-size="33.6" fill="#f2f2f2" textLength="216" lengthAdjust="spacingAndGlyphs" >Color Gamut</text>
<text x="176" y="143" font-size="13.5" fill="#dcdcdc" text-anchor="middle" textLength="77" lengthAdjust="spacingAndGlyphs" >DeltaE 2000</text>
<rect x="13.5" y="147.5" width="325" height="371.5" fill="#262626" />
<line x1="56.5" y1="147.5" x2="56.5" y2="519" stroke="#909090" stroke-width="1" />
<line x1="100.5" y1="147.5" x2="100.5" y2="519" stroke="#909090" stroke-width="1" />
<line x1="143.5" y1="147.5" x2="143.5" y2="519" stroke="#909090" stroke-width="1" />
<line x1="186.5" y1="147.5" x2="186.5" y2="519" stroke="#909090" stroke-width="1" />
<line x1="230.5" y1="147.5" x2="230.5" y2="519" stroke="#909090" stroke-width="1" />
<line x1="273.5" y1="147.5" x2="273.5" y2="519" stroke="#909090" stroke-width="1" />
<line x1="316.5" y1="147.5" x2="316.5" y2="519" stroke="#909090" stroke-width="1" />
<rect x="13.5" y="153" width="304.5" height="34" fill="url(#g7)" stroke="#000" stroke-width="1"/>
<rect x="13.5" y="199" width="124" height="35" fill="url(#g8)" stroke="#000" stroke-width="1"/>
<rect x="13.5" y="245" width="112.5" height="35" fill="url(#g9)" stroke="#000" stroke-width="1"/>
<rect x="13.5" y="291.5" width="143.5" height="35" fill="url(#g10)" stroke="#000" stroke-width="1"/>
<rect x="13.5" y="337.5" width="86.5" height="35.5" fill="url(#g11)" stroke="#000" stroke-width="1"/>
<rect x="13.5" y="384.5" width="61.5" height="34.5" fill="url(#g12)" stroke="#000" stroke-width="1"/>
<rect x="13.5" y="431" width="142.5" height="34.5" fill="url(#g13)" stroke="#000" stroke-width="1"/>
<rect x="13.5" y="477" width="266.5" height="35.5" fill="url(#g14)" stroke="#000" stroke-width="1"/>
<rect x="13.5" y="147.5" width="325" height="371.5" fill="none" stroke="#909090" stroke-width="1"/>
<line x1="13.5" y1="519" x2="13.5" y2="522.5" stroke="#c4c4c4" stroke-width="1.6" />
<text x="13" y="536.6" font-size="13.5" fill="#dcdcdc" text-anchor="middle" >0</text>
<line x1="56.5" y1="519" x2="56.5" y2="522.5" stroke="#c4c4c4" stroke-width="1.6" />
<text x="56" y="536.6" font-size="13.5" fill="#dcdcdc" text-anchor="middle" >2</text>
<line x1="100.5" y1="519" x2="100.5" y2="522.5" stroke="#c4c4c4" stroke-width="1.6" />
<text x="100" y="536.6" font-size="13.5" fill="#dcdcdc" text-anchor="middle" >4</text>
<line x1="143.5" y1="519" x2="143.5" y2="522.5" stroke="#c4c4c4" stroke-width="1.6" />
<text x="143" y="536.6" font-size="13.5" fill="#dcdcdc" text-anchor="middle" >6</text>
<line x1="186.5" y1="519" x2="186.5" y2="522.5" stroke="#c4c4c4" stroke-width="1.6" />
<text x="186" y="536.6" font-size="13.5" fill="#dcdcdc" text-anchor="middle" >8</text>
<line x1="230.5" y1="519" x2="230.5" y2="522.5" stroke="#c4c4c4" stroke-width="1.6" />
<text x="230" y="536.6" font-size="13.5" fill="#dcdcdc" text-anchor="middle" >10</text>
<line x1="273.5" y1="519" x2="273.5" y2="522.5" stroke="#c4c4c4" stroke-width="1.6" />
<text x="273" y="536.6" font-size="13.5" fill="#dcdcdc" text-anchor="middle" >12</text>
<line x1="316.5" y1="519" x2="316.5" y2="522.5" stroke="#c4c4c4" stroke-width="1.6" />
<text x="316" y="536.6" font-size="13.5" fill="#dcdcdc" text-anchor="middle" >14</text>
<rect x="389.5" y="87.5" width="140" height="283" fill="#262626" />
<line x1="389.5" y1="134.5" x2="529.5" y2="134.5" stroke="#909090" stroke-width="1" />
<line x1="389.5" y1="181.5" x2="529.5" y2="181.5" stroke="#909090" stroke-width="1" />
<line x1="389.5" y1="229.5" x2="529.5" y2="229.5" stroke="#909090" stroke-width="1" />
<line x1="389.5" y1="276.5" x2="529.5" y2="276.5" stroke="#909090" stroke-width="1" />
<line x1="389.5" y1="324.5" x2="529.5" y2="324.5" stroke="#909090" stroke-width="1" />
<line x1="403.5" y1="229.5" x2="515.5" y2="229.5" stroke="#1a1a1a" stroke-width="1" />
<rect x="389.5" y="87.5" width="140" height="283" fill="none" stroke="#909090" stroke-width="1"/>
<line x1="384" y1="87.5" x2="389.5" y2="87.5" stroke="#b0b0b0" stroke-width="1" />
<text x="383.5" y="92.3" font-size="13.5" fill="#dcdcdc" text-anchor="end" >15</text>
<line x1="384" y1="134.5" x2="389.5" y2="134.5" stroke="#b0b0b0" stroke-width="1" />
<text x="383.5" y="139.3" font-size="13.5" fill="#dcdcdc" text-anchor="end" >10</text>
<line x1="384" y1="181.5" x2="389.5" y2="181.5" stroke="#b0b0b0" stroke-width="1" />
<text x="383.5" y="186.3" font-size="13.5" fill="#dcdcdc" text-anchor="end" >5</text>
<line x1="384" y1="229.5" x2="389.5" y2="229.5" stroke="#b0b0b0" stroke-width="1" />
<text x="383.5" y="234.3" font-size="13.5" fill="#dcdcdc" text-anchor="end" >0</text>
<line x1="384" y1="276.5" x2="389.5" y2="276.5" stroke="#b0b0b0" stroke-width="1" />
<text x="383.5" y="281.3" font-size="13.5" fill="#dcdcdc" text-anchor="end" >-5</text>
<line x1="384" y1="324.5" x2="389.5" y2="324.5" stroke="#b0b0b0" stroke-width="1" />
<text x="383.5" y="329.3" font-size="13.5" fill="#dcdcdc" text-anchor="end" >-10</text>
<line x1="384" y1="370.5" x2="389.5" y2="370.5" stroke="#b0b0b0" stroke-width="1" />
<text x="383.5" y="375.3" font-size="13.5" fill="#dcdcdc" text-anchor="end" >-15</text>
<line x1="389.5" y1="370.5" x2="389.5" y2="375.5" stroke="#b0b0b0" stroke-width="1" />
<line x1="529.5" y1="370.5" x2="529.5" y2="375.5" stroke="#b0b0b0" stroke-width="1" />
<text x="459.2" y="384.8" font-size="13.5" fill="#dcdcdc" text-anchor="middle" textLength="37" lengthAdjust="spacingAndGlyphs" >100W</text>
<text x="447.5" y="82" font-size="13.5" fill="#dcdcdc" text-anchor="middle" >DeltaL</text>
<rect x="580.5" y="87.5" width="141" height="283" fill="#262626" />
<line x1="580.5" y1="134.5" x2="721.5" y2="134.5" stroke="#909090" stroke-width="1" />
<line x1="580.5" y1="181.5" x2="721.5" y2="181.5" stroke="#909090" stroke-width="1" />
<line x1="580.5" y1="229.5" x2="721.5" y2="229.5" stroke="#909090" stroke-width="1" />
<line x1="580.5" y1="276.5" x2="721.5" y2="276.5" stroke="#909090" stroke-width="1" />
<line x1="580.5" y1="324.5" x2="721.5" y2="324.5" stroke="#909090" stroke-width="1" />
<rect x="595.5" y="87.5" width="111" height="142.5" fill="url(#g15)" stroke="#000" stroke-width="1"/>
<rect x="580.5" y="87.5" width="141" height="283" fill="none" stroke="#909090" stroke-width="1"/>
<line x1="575" y1="87.5" x2="580.5" y2="87.5" stroke="#b0b0b0" stroke-width="1" />
<text x="574.5" y="92.3" font-size="13.5" fill="#dcdcdc" text-anchor="end" >15</text>
<line x1="575" y1="134.5" x2="580.5" y2="134.5" stroke="#b0b0b0" stroke-width="1" />
<text x="574.5" y="139.3" font-size="13.5" fill="#dcdcdc" text-anchor="end" >10</text>
<line x1="575" y1="181.5" x2="580.5" y2="181.5" stroke="#b0b0b0" stroke-width="1" />
<text x="574.5" y="186.3" font-size="13.5" fill="#dcdcdc" text-anchor="end" >5</text>
<line x1="575" y1="229.5" x2="580.5" y2="229.5" stroke="#b0b0b0" stroke-width="1" />
<text x="574.5" y="234.3" font-size="13.5" fill="#dcdcdc" text-anchor="end" >0</text>
<line x1="575" y1="276.5" x2="580.5" y2="276.5" stroke="#b0b0b0" stroke-width="1" />
<text x="574.5" y="281.3" font-size="13.5" fill="#dcdcdc" text-anchor="end" >-5</text>
<line x1="575" y1="324.5" x2="580.5" y2="324.5" stroke="#b0b0b0" stroke-width="1" />
<text x="574.5" y="329.3" font-size="13.5" fill="#dcdcdc" text-anchor="end" >-10</text>
<line x1="575" y1="370.5" x2="580.5" y2="370.5" stroke="#b0b0b0" stroke-width="1" />
<text x="574.5" y="375.3" font-size="13.5" fill="#dcdcdc" text-anchor="end" >-15</text>
<line x1="580.5" y1="370.5" x2="580.5" y2="375.5" stroke="#b0b0b0" stroke-width="1" />
<line x1="721.5" y1="370.5" x2="721.5" y2="375.5" stroke="#b0b0b0" stroke-width="1" />
<text x="650.7" y="384.8" font-size="13.5" fill="#dcdcdc" text-anchor="middle" textLength="37" lengthAdjust="spacingAndGlyphs" >100W</text>
<text x="639" y="82" font-size="13.5" fill="#dcdcdc" text-anchor="middle" >DeltaC</text>
<rect x="772.5" y="87.5" width="140" height="283" fill="#262626" />
<line x1="772.5" y1="134.5" x2="912.5" y2="134.5" stroke="#909090" stroke-width="1" />
<line x1="772.5" y1="181.5" x2="912.5" y2="181.5" stroke="#909090" stroke-width="1" />
<line x1="772.5" y1="229.5" x2="912.5" y2="229.5" stroke="#909090" stroke-width="1" />
<line x1="772.5" y1="276.5" x2="912.5" y2="276.5" stroke="#909090" stroke-width="1" />
<line x1="772.5" y1="324.5" x2="912.5" y2="324.5" stroke="#909090" stroke-width="1" />
<line x1="786.5" y1="229.5" x2="898.5" y2="229.5" stroke="#1a1a1a" stroke-width="1" />
<rect x="772.5" y="87.5" width="140" height="283" fill="none" stroke="#909090" stroke-width="1"/>
<line x1="767" y1="87.5" x2="772.5" y2="87.5" stroke="#b0b0b0" stroke-width="1" />
<text x="766.5" y="92.3" font-size="13.5" fill="#dcdcdc" text-anchor="end" >15</text>
<line x1="767" y1="134.5" x2="772.5" y2="134.5" stroke="#b0b0b0" stroke-width="1" />
<text x="766.5" y="139.3" font-size="13.5" fill="#dcdcdc" text-anchor="end" >10</text>
<line x1="767" y1="181.5" x2="772.5" y2="181.5" stroke="#b0b0b0" stroke-width="1" />
<text x="766.5" y="186.3" font-size="13.5" fill="#dcdcdc" text-anchor="end" >5</text>
<line x1="767" y1="229.5" x2="772.5" y2="229.5" stroke="#b0b0b0" stroke-width="1" />
<text x="766.5" y="234.3" font-size="13.5" fill="#dcdcdc" text-anchor="end" >0</text>
<line x1="767" y1="276.5" x2="772.5" y2="276.5" stroke="#b0b0b0" stroke-width="1" />
<text x="766.5" y="281.3" font-size="13.5" fill="#dcdcdc" text-anchor="end" >-5</text>
<line x1="767" y1="324.5" x2="772.5" y2="324.5" stroke="#b0b0b0" stroke-width="1" />
<text x="766.5" y="329.3" font-size="13.5" fill="#dcdcdc" text-anchor="end" >-10</text>
<line x1="767" y1="370.5" x2="772.5" y2="370.5" stroke="#b0b0b0" stroke-width="1" />
<text x="766.5" y="375.3" font-size="13.5" fill="#dcdcdc" text-anchor="end" >-15</text>
<line x1="772.5" y1="370.5" x2="772.5" y2="375.5" stroke="#b0b0b0" stroke-width="1" />
<line x1="912.5" y1="370.5" x2="912.5" y2="375.5" stroke="#b0b0b0" stroke-width="1" />
<text x="842.2" y="384.8" font-size="13.5" fill="#dcdcdc" text-anchor="middle" textLength="37" lengthAdjust="spacingAndGlyphs" >100W</text>
<text x="830.5" y="82" font-size="13.5" fill="#dcdcdc" text-anchor="middle" >DeltaH</text>
<rect x="358" y="400" width="574" height="146" fill="#000000" />
<rect x="375" y="406" width="60" height="61" fill="#c5c7cd" />
<rect x="375" y="466" width="60" height="59" fill="#bbcbba" />
<rect x="375.5" y="406.5" width="59" height="118" fill="none" stroke="#ffffff" stroke-width="1"/>
<rect x="376.5" y="407.5" width="57" height="116" fill="none" stroke="#000" stroke-opacity="0.16" stroke-width="1"/>
<text x="405" y="538.8" font-size="11.3" fill="#ffffff" text-anchor="middle" textLength="30.62" lengthAdjust="spacingAndGlyphs" stroke="#fff" stroke-width="0.4">White</text>
<rect x="445" y="406" width="60" height="61" fill="#f0002c" />
<rect x="445" y="466" width="60" height="59" fill="#d0212b" />
<rect x="445.5" y="406.5" width="59" height="118" fill="none" stroke="#ffffff" stroke-width="1"/>
<rect x="446.5" y="407.5" width="57" height="116" fill="none" stroke="#000" stroke-opacity="0.16" stroke-width="1"/>
<text x="475" y="538.8" font-size="11.3" fill="#ffffff" text-anchor="middle" textLength="21.97" lengthAdjust="spacingAndGlyphs" stroke="#fff" stroke-width="0.4">Red</text>
<rect x="515" y="406" width="60" height="61" fill="#00de5c" />
<rect x="515" y="466" width="60" height="59" fill="#46d45e" />
<rect x="515.5" y="406.5" width="59" height="118" fill="none" stroke="#ffffff" stroke-width="1"/>
<rect x="516.5" y="407.5" width="57" height="116" fill="none" stroke="#000" stroke-opacity="0.16" stroke-width="1"/>
<text x="545" y="538.8" font-size="11.3" fill="#ffffff" text-anchor="middle" textLength="33.29" lengthAdjust="spacingAndGlyphs" stroke="#fff" stroke-width="0.4">Green</text>
<rect x="585" y="406" width="60" height="61" fill="#0038de" />
<rect x="585" y="466" width="60" height="59" fill="#4134c4" />
<rect x="585.5" y="406.5" width="59" height="118" fill="none" stroke="#ffffff" stroke-width="1"/>
<rect x="586.5" y="407.5" width="57" height="116" fill="none" stroke="#000" stroke-opacity="0.16" stroke-width="1"/>
<text x="615" y="538.8" font-size="11.3" fill="#ffffff" text-anchor="middle" textLength="23.97" lengthAdjust="spacingAndGlyphs" stroke="#fff" stroke-width="0.4">Blue</text>
<rect x="655" y="406" width="60" height="61" fill="#00d8dc" />
<rect x="655" y="466" width="60" height="59" fill="#5ad4c4" />
<rect x="655.5" y="406.5" width="59" height="118" fill="none" stroke="#ffffff" stroke-width="1"/>
<rect x="656.5" y="407.5" width="57" height="116" fill="none" stroke="#000" stroke-opacity="0.16" stroke-width="1"/>
<text x="685" y="538.8" font-size="11.3" fill="#ffffff" text-anchor="middle" textLength="27.96" lengthAdjust="spacingAndGlyphs" stroke="#fff" stroke-width="0.4">Cyan</text>
<rect x="725" y="406" width="60" height="61" fill="#e400dc" />
<rect x="725" y="466" width="60" height="59" fill="#d014c0" />
<rect x="725.5" y="406.5" width="59" height="118" fill="none" stroke="#ffffff" stroke-width="1"/>
<rect x="726.5" y="407.5" width="57" height="116" fill="none" stroke="#000" stroke-opacity="0.16" stroke-width="1"/>
<text x="755" y="538.8" font-size="11.3" fill="#ffffff" text-anchor="middle" textLength="46.61" lengthAdjust="spacingAndGlyphs" stroke="#fff" stroke-width="0.4">Magenta</text>
<rect x="795" y="406" width="61" height="61" fill="#dcd400" />
<rect x="795" y="466" width="61" height="59" fill="#c0d020" />
<rect x="795.5" y="406.5" width="60" height="118" fill="none" stroke="#ffffff" stroke-width="1"/>
<rect x="796.5" y="407.5" width="58" height="116" fill="none" stroke="#000" stroke-opacity="0.16" stroke-width="1"/>
<text x="825.5" y="538.8" font-size="11.3" fill="#ffffff" text-anchor="middle" textLength="34.19" lengthAdjust="spacingAndGlyphs" stroke="#fff" stroke-width="0.4">Yellow</text>
<rect x="865" y="406" width="61" height="61" fill="#f8f8ff" />
<rect x="865" y="466" width="61" height="59" fill="#ecffe8" />
<rect x="865.5" y="406.5" width="60" height="118" fill="none" stroke="#ffffff" stroke-width="1"/>
<rect x="866.5" y="407.5" width="58" height="116" fill="none" stroke="#000" stroke-opacity="0.16" stroke-width="1"/>
<text x="895.5" y="538.8" font-size="11.3" fill="#ffffff" text-anchor="middle" textLength="31.29" lengthAdjust="spacingAndGlyphs" stroke="#fff" stroke-width="0.4">100W</text>
<text font-size="10.6" font-weight="bold" fill="#fff" text-anchor="middle" transform="translate(369.8 432.5) rotate(-90)">Actual</text>
<text font-size="10.6" font-weight="bold" fill="#fff" text-anchor="middle" transform="translate(369.8 498.8) rotate(-90)">Target</text>
<rect x="938" y="58" width="670" height="500" fill="#1a1a1a" />
<rect x="944.5" y="64.5" width="660" height="487.5" fill="#333333" />
<text x="1275" y="80.5" font-size="13.5" fill="#dcdcdc" text-anchor="middle" textLength="83" lengthAdjust="spacingAndGlyphs" >CIE 1976 u'v'</text>
<rect x="981.5" y="85.5" width="620" height="441" fill="#262626" />
<clipPath id="cl"><path d="M1246.78 514.28 1246.68 514.33 1246.59 514.39 1246.51 514.46 1246.44 514.53 1246.36 514.6 1246.27 514.65 1246.16 514.71 1246.02 514.74 1245.85 514.76 1245.64 514.76 1245.39 514.76 1245.12 514.76 1244.82 514.75 1244.5 514.74 1244.16 514.71 1243.78 514.65 1243.39 514.57 1242.96 514.45 1242.51 514.28 1242.03 514.06 1241.53 513.81 1241.03 513.52 1240.51 513.21 1239.97 512.86 1239.4 512.48 1238.78 512.05 1238.12 511.58 1237.4 511.05 1236.61 510.48 1235.74 509.84 1234.82 509.15 1233.85 508.42 1232.84 507.64 1231.77 506.81 1230.65 505.93 1229.46 505 1228.2 504.01 1226.86 502.97 1225.44 501.87 1223.93 500.71 1222.36 499.51 1220.72 498.28 1219.02 497 1217.25 495.67 1215.4 494.28 1213.47 492.82 1211.43 491.27 1209.3 489.63 1207.05 487.89 1204.69 486.03 1202.24 484.13 1199.73 482.24 1197.14 480.32 1194.46 478.32 1191.67 476.21 1188.74 473.93 1185.68 471.45 1182.44 468.72 1179.03 465.7 1175.41 462.34 1171.48 458.55 1167.17 454.3 1162.59 449.7 1157.81 444.84 1152.94 439.8 1148.06 434.68 1143.27 429.58 1138.66 424.59 1134.31 419.8 1130.33 415.3 1126.71 411.1 1123.36 407.1 1120.22 403.24 1117.25 399.48 1114.39 395.76 1111.6 392.03 1108.81 388.24 1105.98 384.34 1103.05 380.27 1099.98 375.98 1096.78 371.49 1093.54 366.87 1090.25 362.13 1086.93 357.28 1083.6 352.36 1080.25 347.36 1076.92 342.31 1073.6 337.23 1070.3 332.13 1067.05 327.03 1063.8 321.89 1060.52 316.67 1057.23 311.38 1053.95 306.05 1050.69 300.69 1047.47 295.32 1044.31 289.96 1041.23 284.62 1038.24 279.34 1035.35 274.11 1032.56 268.91 1029.83 263.69 1027.16 258.46 1024.57 253.25 1022.04 248.07 1019.59 242.95 1017.21 237.89 1014.92 232.92 1012.71 228.05 1010.59 223.3 1008.55 218.64 1006.59 214.04 1004.71 209.51 1002.9 205.06 1001.18 200.69 999.54 196.42 997.98 192.25 996.5 188.2 995.1 184.26 993.78 180.46 992.56 176.79 991.42 173.23 990.37 169.8 989.4 166.47 988.52 163.25 987.7 160.14 986.96 157.12 986.27 154.2 985.65 151.37 985.09 148.63 984.59 145.99 984.16 143.46 983.8 141.05 983.51 138.73 983.29 136.51 983.12 134.36 983.01 132.3 982.95 130.3 982.95 128.35 982.99 126.46 983.08 124.63 983.23 122.88 983.44 121.21 983.7 119.6 984.02 118.06 984.38 116.59 984.8 115.17 985.25 113.81 985.76 112.5 986.3 111.23 986.89 110.02 987.53 108.86 988.22 107.77 988.97 106.73 989.75 105.75 990.58 104.82 991.44 103.94 992.33 103.1 993.25 102.31 994.19 101.56 995.17 100.86 996.18 100.22 997.24 99.64 998.33 99.1 999.45 98.61 1000.59 98.15 1001.76 97.73 1002.95 97.34 1004.16 96.98 1005.38 96.63 1006.62 96.32 1007.89 96.04 1009.18 95.81 1010.5 95.61 1011.83 95.44 1013.18 95.29 1014.55 95.15 1015.92 95.03 1017.31 94.92 1018.7 94.81 1020.03 94.7 1021.27 94.61 1022.47 94.53 1023.67 94.47 1024.9 94.41 1026.22 94.38 1027.67 94.35 1029.29 94.34 1031.12 94.34 1033.21 94.36 1035.57 94.38 1038.17 94.41 1040.96 94.46 1043.92 94.51 1047.02 94.58 1050.22 94.67 1053.48 94.77 1056.78 94.89 1060.08 95.03 1063.34 95.19 1066.58 95.38 1069.86 95.58 1073.16 95.8 1076.51 96.04 1079.9 96.3 1083.36 96.57 1086.88 96.86 1090.48 97.16 1094.15 97.48 1097.92 97.81 1101.76 98.15 1105.66 98.5 1109.62 98.87 1113.65 99.26 1117.75 99.65 1121.94 100.07 1126.22 100.49 1130.59 100.93 1135.07 101.38 1139.65 101.84 1144.34 102.31 1149.11 102.8 1153.97 103.3 1158.92 103.82 1163.97 104.34 1169.12 104.88 1174.37 105.43 1179.73 106 1185.2 106.57 1190.78 107.16 1196.48 107.77 1202.29 108.38 1208.21 109.01 1214.24 109.65 1220.37 110.31 1226.6 110.97 1232.93 111.65 1239.36 112.33 1245.89 113.03 1252.5 113.74 1259.24 114.45 1266.12 115.18 1273.13 115.93 1280.25 116.69 1287.45 117.45 1294.71 118.22 1302.01 119 1309.34 119.78 1316.66 120.56 1323.97 121.34 1331.31 122.12 1338.75 122.92 1346.26 123.72 1353.8 124.53 1361.35 125.34 1368.89 126.14 1376.38 126.94 1383.79 127.73 1391.11 128.52 1398.29 129.28 1405.41 130.04 1412.52 130.79 1419.6 131.54 1426.62 132.29 1433.57 133.02 1440.4 133.75 1447.11 134.46 1453.65 135.15 1460.01 135.82 1466.15 136.48 1472.11 137.11 1477.92 137.73 1483.58 138.34 1489.08 138.93 1494.44 139.5 1499.64 140.06 1504.7 140.6 1509.59 141.13 1514.34 141.64 1518.93 142.13 1523.34 142.6 1527.56 143.04 1531.6 143.47 1535.49 143.89 1539.23 144.29 1542.85 144.67 1546.36 145.04 1549.77 145.4 1553.1 145.76 1556.37 146.11 1559.56 146.45 1562.64 146.78 1565.62 147.09 1568.5 147.4 1571.28 147.7 1573.97 147.99 1576.56 148.27 1579.05 148.53 1581.46 148.79 1583.78 149.04 1585.99 149.27 1588.1 149.5 1590.11 149.71 1592.02 149.91 1593.84 150.1 1595.57 150.28 1597.23 150.46 1598.82 150.62 1600.35 150.78 1601.81 150.94 1603.19 151.09 1604.45 151.22 1605.61 151.34 1606.7 151.46 1607.72 151.57 1608.7 151.68 1609.65 151.78 1610.6 151.88 1611.56 151.98 1612.54 152.09 1613.53 152.2 1614.51 152.31 1615.48 152.42 1616.44 152.54 1617.38 152.65 1618.3 152.75 1619.21 152.85 1620.11 152.94 1620.99 153.02 1621.85 153.08 1622.7 153.13 1623.52 153.17 1624.32 153.19 1625.1 153.21 1625.87 153.21 1626.64 153.22 1627.4 153.22 1628.16 153.22 1628.93 153.23 1629.71 153.24Z"/></clipPath><clipPath id="cp"><rect x="982" y="86" width="619" height="440"/></clipPath>
<g clip-path="url(#cp)"><g clip-path="url(#cl)">
<rect x="1015" y="93" width="46" height="2.6" fill="url(#g16)" />
<rect x="1003" y="95" width="87" height="2.6" fill="url(#g17)" />
<rect x="997" y="97" width="115" height="2.6" fill="url(#g18)" />
<rect x="993" y="99" width="140" height="2.6" fill="url(#g19)" />
<rect x="991" y="101" width="162" height="2.6" fill="url(#g20)" />
<rect x="989" y="103" width="183" height="2.6" fill="url(#g21)" />
<rect x="987" y="105" width="204" height="2.6" fill="url(#g22)" />
<rect x="986" y="107" width="224" height="2.6" fill="url(#g23)" />
<rect x="985" y="109" width="243" height="2.6" fill="url(#g24)" />
<rect x="984" y="111" width="263" height="2.6" fill="url(#g25)" />
<rect x="983" y="113" width="283" height="2.6" fill="url(#g26)" />
<rect x="983" y="115" width="302" height="2.6" fill="url(#g27)" />
<rect x="982" y="117" width="321" height="2.6" fill="url(#g28)" />
<rect x="982" y="119" width="340" height="2.6" fill="url(#g29)" />
<rect x="982" y="121" width="359" height="2.6" fill="url(#g30)" />
<rect x="982" y="123" width="378" height="2.6" fill="url(#g31)" />
<rect x="981" y="125" width="397" height="2.6" fill="url(#g32)" />
<rect x="981" y="127" width="416" height="2.6" fill="url(#g33)" />
<rect x="981" y="129" width="435" height="2.6" fill="url(#g34)" />
<rect x="981" y="131" width="454" height="2.6" fill="url(#g35)" />
<rect x="982" y="133" width="472" height="2.6" fill="url(#g36)" />
<rect x="982" y="135" width="491" height="2.6" fill="url(#g37)" />
<rect x="982" y="137" width="509" height="2.6" fill="url(#g38)" />
<rect x="982" y="139" width="528" height="2.6" fill="url(#g39)" />
<rect x="982" y="141" width="547" height="2.6" fill="url(#g40)" />
<rect x="983" y="143" width="564" height="2.6" fill="url(#g41)" />
<rect x="983" y="145" width="583" height="2.6" fill="url(#g42)" />
<rect x="983" y="147" width="602" height="2.6" fill="url(#g43)" />
<rect x="984" y="149" width="618" height="2.6" fill="url(#g44)" />
<rect x="984" y="151" width="618" height="2.6" fill="url(#g45)" />
<rect x="985" y="153" width="617" height="2.6" fill="url(#g46)" />
<rect x="985" y="155" width="617" height="2.6" fill="url(#g47)" />
<rect x="985" y="157" width="617" height="2.6" fill="url(#g48)" />
<rect x="986" y="159" width="616" height="2.6" fill="url(#g49)" />
<rect x="986" y="161" width="616" height="2.6" fill="url(#g50)" />
<rect x="987" y="163" width="615" height="2.6" fill="url(#g51)" />
<rect x="987" y="165" width="615" height="2.6" fill="url(#g52)" />
<rect x="988" y="167" width="614" height="2.6" fill="url(#g53)" />
<rect x="989" y="169" width="613" height="2.6" fill="url(#g54)" />
<rect x="989" y="171" width="613" height="2.6" fill="url(#g55)" />
<rect x="990" y="173" width="612" height="2.6" fill="url(#g56)" />
<rect x="990" y="175" width="612" height="2.6" fill="url(#g57)" />
<rect x="991" y="177" width="611" height="2.6" fill="url(#g58)" />
<rect x="992" y="179" width="610" height="2.6" fill="url(#g59)" />
<rect x="992" y="181" width="610" height="2.6" fill="url(#g60)" />
<rect x="993" y="183" width="607" height="2.6" fill="url(#g61)" />
<rect x="994" y="185" width="604" height="2.6" fill="url(#g62)" />
<rect x="995" y="187" width="600" height="2.6" fill="url(#g63)" />
<rect x="995" y="189" width="598" height="2.6" fill="url(#g64)" />
<rect x="996" y="191" width="595" height="2.6" fill="url(#g65)" />
<rect x="997" y="193" width="592" height="2.6" fill="url(#g66)" />
<rect x="998" y="195" width="589" height="2.6" fill="url(#g67)" />
<rect x="998" y="197" width="587" height="2.6" fill="url(#g68)" />
<rect x="999" y="199" width="584" height="2.6" fill="url(#g69)" />
<rect x="1000" y="201" width="581" height="2.6" fill="url(#g70)" />
<rect x="1001" y="203" width="577" height="2.6" fill="url(#g71)" />
<rect x="1001" y="205" width="575" height="2.6" fill="url(#g72)" />
<rect x="1002" y="207" width="572" height="2.6" fill="url(#g73)" />
<rect x="1003" y="209" width="569" height="2.6" fill="url(#g74)" />
<rect x="1004" y="211" width="566" height="2.6" fill="url(#g75)" />
<rect x="1005" y="213" width="563" height="2.6" fill="url(#g76)" />
<rect x="1005" y="215" width="561" height="2.6" fill="url(#g77)" />
<rect x="1006" y="217" width="558" height="2.6" fill="url(#g78)" />
<rect x="1007" y="219" width="554" height="2.6" fill="url(#g79)" />
<rect x="1008" y="221" width="551" height="2.6" fill="url(#g80)" />
<rect x="1009" y="223" width="548" height="2.6" fill="url(#g81)" />
<rect x="1010" y="225" width="545" height="2.6" fill="url(#g82)" />
<rect x="1011" y="227" width="542" height="2.6" fill="url(#g83)" />
<rect x="1012" y="229" width="539" height="2.6" fill="url(#g84)" />
<rect x="1013" y="231" width="536" height="2.6" fill="url(#g85)" />
<rect x="1013" y="233" width="534" height="2.6" fill="url(#g86)" />
<rect x="1014" y="235" width="530" height="2.6" fill="url(#g87)" />
<rect x="1015" y="237" width="527" height="2.6" fill="url(#g88)" />
<rect x="1016" y="239" width="524" height="2.6" fill="url(#g89)" />
<rect x="1017" y="241" width="521" height="2.6" fill="url(#g90)" />
<rect x="1018" y="243" width="518" height="2.6" fill="url(#g91)" />
<rect x="1019" y="245" width="515" height="2.6" fill="url(#g92)" />
<rect x="1020" y="247" width="512" height="2.6" fill="url(#g93)" />
<rect x="1021" y="249" width="509" height="2.6" fill="url(#g94)" />
<rect x="1022" y="251" width="506" height="2.6" fill="url(#g95)" />
<rect x="1023" y="253" width="502" height="2.6" fill="url(#g96)" />
<rect x="1024" y="255" width="499" height="2.6" fill="url(#g97)" />
<rect x="1025" y="257" width="496" height="2.6" fill="url(#g98)" />
<rect x="1026" y="259" width="493" height="2.6" fill="url(#g99)" />
<rect x="1027" y="261" width="490" height="2.6" fill="url(#g100)" />
<rect x="1028" y="263" width="487" height="2.6" fill="url(#g101)" />
<rect x="1029" y="265" width="484" height="2.6" fill="url(#g102)" />
<rect x="1030" y="267" width="481" height="2.6" fill="url(#g103)" />
<rect x="1031" y="269" width="477" height="2.6" fill="url(#g104)" />
<rect x="1032" y="271" width="474" height="2.6" fill="url(#g105)" />
<rect x="1033" y="273" width="471" height="2.6" fill="url(#g106)" />
<rect x="1034" y="275" width="468" height="2.6" fill="url(#g107)" />
<rect x="1035" y="277" width="465" height="2.6" fill="url(#g108)" />
<rect x="1037" y="279" width="461" height="2.6" fill="url(#g109)" />
<rect x="1038" y="281" width="458" height="2.6" fill="url(#g110)" />
<rect x="1039" y="283" width="455" height="2.6" fill="url(#g111)" />
<rect x="1040" y="285" width="451" height="2.6" fill="url(#g112)" />
<rect x="1041" y="287" width="448" height="2.6" fill="url(#g113)" />
<rect x="1042" y="289" width="445" height="2.6" fill="url(#g114)" />
<rect x="1043" y="291" width="442" height="2.6" fill="url(#g115)" />
<rect x="1045" y="293" width="438" height="2.6" fill="url(#g116)" />
<rect x="1046" y="295" width="435" height="2.6" fill="url(#g117)" />
<rect x="1047" y="297" width="432" height="2.6" fill="url(#g118)" />
<rect x="1048" y="299" width="429" height="2.6" fill="url(#g119)" />
<rect x="1049" y="301" width="425" height="2.6" fill="url(#g120)" />
<rect x="1051" y="303" width="421" height="2.6" fill="url(#g121)" />
<rect x="1052" y="305" width="418" height="2.6" fill="url(#g122)" />
<rect x="1053" y="307" width="415" height="2.6" fill="url(#g123)" />
<rect x="1054" y="309" width="412" height="2.6" fill="url(#g124)" />
<rect x="1055" y="311" width="409" height="2.6" fill="url(#g125)" />
<rect x="1057" y="313" width="405" height="2.6" fill="url(#g126)" />
<rect x="1058" y="315" width="402" height="2.6" fill="url(#g127)" />
<rect x="1059" y="317" width="399" height="2.6" fill="url(#g128)" />
<rect x="1060" y="319" width="395" height="2.6" fill="url(#g129)" />
<rect x="1062" y="321" width="391" height="2.6" fill="url(#g130)" />
<rect x="1063" y="323" width="388" height="2.6" fill="url(#g131)" />
<rect x="1064" y="325" width="385" height="2.6" fill="url(#g132)" />
<rect x="1066" y="327" width="381" height="2.6" fill="url(#g133)" />
<rect x="1067" y="329" width="378" height="2.6" fill="url(#g134)" />
<rect x="1068" y="331" width="375" height="2.6" fill="url(#g135)" />
<rect x="1069" y="333" width="372" height="2.6" fill="url(#g136)" />
<rect x="1071" y="335" width="367" height="2.6" fill="url(#g137)" />
<rect x="1072" y="337" width="364" height="2.6" fill="url(#g138)" />
<rect x="1073" y="339" width="361" height="2.6" fill="url(#g139)" />
<rect x="1075" y="341" width="357" height="2.6" fill="url(#g140)" />
<rect x="1076" y="343" width="354" height="2.6" fill="url(#g141)" />
<rect x="1077" y="345" width="351" height="2.6" fill="url(#g142)" />
<rect x="1079" y="347" width="347" height="2.6" fill="url(#g143)" />
<rect x="1080" y="349" width="344" height="2.6" fill="url(#g144)" />
<rect x="1081" y="351" width="340" height="2.6" fill="url(#g145)" />
<rect x="1083" y="353" width="336" height="2.6" fill="url(#g146)" />
<rect x="1084" y="355" width="333" height="2.6" fill="url(#g147)" />
<rect x="1085" y="357" width="330" height="2.6" fill="url(#g148)" />
<rect x="1087" y="359" width="326" height="2.6" fill="url(#g149)" />
<rect x="1088" y="361" width="323" height="2.6" fill="url(#g150)" />
<rect x="1089" y="363" width="320" height="2.6" fill="url(#g151)" />
<rect x="1091" y="365" width="316" height="2.6" fill="url(#g152)" />
<rect x="1092" y="367" width="312" height="2.6" fill="url(#g153)" />
<rect x="1094" y="369" width="308" height="2.6" fill="url(#g154)" />
<rect x="1095" y="371" width="305" height="2.6" fill="url(#g155)" />
<rect x="1096" y="373" width="302" height="2.6" fill="url(#g156)" />
<rect x="1098" y="375" width="298" height="2.6" fill="url(#g157)" />
<rect x="1099" y="377" width="295" height="2.6" fill="url(#g158)" />
<rect x="1101" y="379" width="291" height="2.6" fill="url(#g159)" />
<rect x="1102" y="381" width="288" height="2.6" fill="url(#g160)" />
<rect x="1104" y="383" width="284" height="2.6" fill="url(#g161)" />
<rect x="1105" y="385" width="280" height="2.6" fill="url(#g162)" />
<rect x="1106" y="387" width="277" height="2.6" fill="url(#g163)" />
<rect x="1108" y="389" width="273" height="2.6" fill="url(#g164)" />
<rect x="1109" y="391" width="270" height="2.6" fill="url(#g165)" />
<rect x="1111" y="393" width="266" height="2.6" fill="url(#g166)" />
<rect x="1112" y="395" width="263" height="2.6" fill="url(#g167)" />
<rect x="1114" y="397" width="259" height="2.6" fill="url(#g168)" />
<rect x="1115" y="399" width="256" height="2.6" fill="url(#g169)" />
<rect x="1117" y="401" width="251" height="2.6" fill="url(#g170)" />
<rect x="1119" y="403" width="247" height="2.6" fill="url(#g171)" />
<rect x="1120" y="405" width="244" height="2.6" fill="url(#g172)" />
<rect x="1122" y="407" width="240" height="2.6" fill="url(#g173)" />
<rect x="1123" y="409" width="237" height="2.6" fill="url(#g174)" />
<rect x="1125" y="411" width="233" height="2.6" fill="url(#g175)" />
<rect x="1127" y="413" width="229" height="2.6" fill="url(#g176)" />
<rect x="1129" y="415" width="225" height="2.6" fill="url(#g177)" />
<rect x="1130" y="417" width="221" height="2.6" fill="url(#g178)" />
<rect x="1132" y="419" width="217" height="2.6" fill="url(#g179)" />
<rect x="1134" y="421" width="213" height="2.6" fill="url(#g180)" />
<rect x="1136" y="423" width="209" height="2.6" fill="url(#g181)" />
<rect x="1138" y="425" width="205" height="2.6" fill="url(#g182)" />
<rect x="1139" y="427" width="202" height="2.6" fill="url(#g183)" />
<rect x="1141" y="429" width="198" height="2.6" fill="url(#g184)" />
<rect x="1143" y="431" width="194" height="2.6" fill="url(#g185)" />
<rect x="1145" y="433" width="189" height="2.6" fill="url(#g186)" />
<rect x="1147" y="435" width="185" height="2.6" fill="url(#g187)" />
<rect x="1149" y="437" width="181" height="2.6" fill="url(#g188)" />
<rect x="1151" y="439" width="177" height="2.6" fill="url(#g189)" />
<rect x="1153" y="441" width="173" height="2.6" fill="url(#g190)" />
<rect x="1155" y="443" width="169" height="2.6" fill="url(#g191)" />
<rect x="1156" y="445" width="166" height="2.6" fill="url(#g192)" />
<rect x="1158" y="447" width="162" height="2.6" fill="url(#g193)" />
<rect x="1160" y="449" width="158" height="2.6" fill="url(#g194)" />
<rect x="1162" y="451" width="153" height="2.6" fill="url(#g195)" />
<rect x="1164" y="453" width="149" height="2.6" fill="url(#g196)" />
<rect x="1166" y="455" width="145" height="2.6" fill="url(#g197)" />
<rect x="1168" y="457" width="141" height="2.6" fill="url(#g198)" />
<rect x="1170" y="459" width="137" height="2.6" fill="url(#g199)" />
<rect x="1173" y="461" width="132" height="2.6" fill="url(#g200)" />
<rect x="1175" y="463" width="128" height="2.6" fill="url(#g201)" />
<rect x="1177" y="465" width="124" height="2.6" fill="url(#g202)" />
<rect x="1179" y="467" width="119" height="2.6" fill="url(#g203)" />
<rect x="1181" y="469" width="115" height="2.6" fill="url(#g204)" />
<rect x="1184" y="471" width="110" height="2.6" fill="url(#g205)" />
<rect x="1186" y="473" width="106" height="2.6" fill="url(#g206)" />
<rect x="1189" y="475" width="101" height="2.6" fill="url(#g207)" />
<rect x="1191" y="477" width="97" height="2.6" fill="url(#g208)" />
<rect x="1194" y="479" width="92" height="2.6" fill="url(#g209)" />
<rect x="1197" y="481" width="87" height="2.6" fill="url(#g210)" />
<rect x="1199" y="483" width="82" height="2.6" fill="url(#g211)" />
<rect x="1202" y="485" width="77" height="2.6" fill="url(#g212)" />
<rect x="1204" y="487" width="73" height="2.6" fill="url(#g213)" />
<rect x="1207" y="489" width="68" height="2.6" fill="url(#g214)" />
<rect x="1210" y="491" width="63" height="2.6" fill="url(#g215)" />
<rect x="1212" y="493" width="59" height="2.6" fill="url(#g216)" />
<rect x="1215" y="495" width="54" height="2.6" fill="url(#g217)" />
<rect x="1218" y="497" width="49" height="2.6" fill="url(#g218)" />
<rect x="1220" y="499" width="44" height="2.6" fill="url(#g219)" />
<rect x="1223" y="501" width="39" height="2.6" fill="url(#g220)" />
<rect x="1225" y="503" width="35" height="2.6" fill="url(#g221)" />
<rect x="1228" y="505" width="30" height="2.6" fill="url(#g222)" />
<rect x="1231" y="507" width="25" height="2.6" fill="url(#g223)" />
<rect x="1233" y="509" width="21" height="2.6" fill="url(#g224)" />
<rect x="1236" y="511" width="16" height="2.6" fill="url(#g225)" />
<rect x="1239" y="513" width="11" height="2.6" fill="url(#g226)" />
<path d="M1246.78 514.28 1246.68 514.33 1246.59 514.39 1246.51 514.46 1246.44 514.53 1246.36 514.6 1246.27 514.65 1246.16 514.71 1246.02 514.74 1245.85 514.76 1245.64 514.76 1245.39 514.76 1245.12 514.76 1244.82 514.75 1244.5 514.74 1244.16 514.71 1243.78 514.65 1243.39 514.57 1242.96 514.45 1242.51 514.28 1242.03 514.06 1241.53 513.81 1241.03 513.52 1240.51 513.21 1239.97 512.86 1239.4 512.48 1238.78 512.05 1238.12 511.58 1237.4 511.05 1236.61 510.48 1235.74 509.84 1234.82 509.15 1233.85 508.42 1232.84 507.64 1231.77 506.81 1230.65 505.93 1229.46 505 1228.2 504.01 1226.86 502.97 1225.44 501.87 1223.93 500.71 1222.36 499.51 1220.72 498.28 1219.02 497 1217.25 495.67 1215.4 494.28 1213.47 492.82 1211.43 491.27 1209.3 489.63 1207.05 487.89 1204.69 486.03 1202.24 484.13 1199.73 482.24 1197.14 480.32 1194.46 478.32 1191.67 476.21 1188.74 473.93 1185.68 471.45 1182.44 468.72 1179.03 465.7 1175.41 462.34 1171.48 458.55 1167.17 454.3 1162.59 449.7 1157.81 444.84 1152.94 439.8 1148.06 434.68 1143.27 429.58 1138.66 424.59 1134.31 419.8 1130.33 415.3 1126.71 411.1 1123.36 407.1 1120.22 403.24 1117.25 399.48 1114.39 395.76 1111.6 392.03 1108.81 388.24 1105.98 384.34 1103.05 380.27 1099.98 375.98 1096.78 371.49 1093.54 366.87 1090.25 362.13 1086.93 357.28 1083.6 352.36 1080.25 347.36 1076.92 342.31 1073.6 337.23 1070.3 332.13 1067.05 327.03 1063.8 321.89 1060.52 316.67 1057.23 311.38 1053.95 306.05 1050.69 300.69 1047.47 295.32 1044.31 289.96 1041.23 284.62 1038.24 279.34 1035.35 274.11 1032.56 268.91 1029.83 263.69 1027.16 258.46 1024.57 253.25 1022.04 248.07 1019.59 242.95 1017.21 237.89 1014.92 232.92 1012.71 228.05 1010.59 223.3 1008.55 218.64 1006.59 214.04 1004.71 209.51 1002.9 205.06 1001.18 200.69 999.54 196.42 997.98 192.25 996.5 188.2 995.1 184.26 993.78 180.46 992.56 176.79 991.42 173.23 990.37 169.8 989.4 166.47 988.52 163.25 987.7 160.14 986.96 157.12 986.27 154.2 985.65 151.37 985.09 148.63 984.59 145.99 984.16 143.46 983.8 141.05 983.51 138.73 983.29 136.51 983.12 134.36 983.01 132.3 982.95 130.3 982.95 128.35 982.99 126.46 983.08 124.63 983.23 122.88 983.44 121.21 983.7 119.6 984.02 118.06 984.38 116.59 984.8 115.17 985.25 113.81 985.76 112.5 986.3 111.23 986.89 110.02 987.53 108.86 988.22 107.77 988.97 106.73 989.75 105.75 990.58 104.82 991.44 103.94 992.33 103.1 993.25 102.31 994.19 101.56 995.17 100.86 996.18 100.22 997.24 99.64 998.33 99.1 999.45 98.61 1000.59 98.15 1001.76 97.73 1002.95 97.34 1004.16 96.98 1005.38 96.63 1006.62 96.32 1007.89 96.04 1009.18 95.81 1010.5 95.61 1011.83 95.44 1013.18 95.29 1014.55 95.15 1015.92 95.03 1017.31 94.92 1018.7 94.81 1020.03 94.7 1021.27 94.61 1022.47 94.53 1023.67 94.47 1024.9 94.41 1026.22 94.38 1027.67 94.35 1029.29 94.34 1031.12 94.34 1033.21 94.36 1035.57 94.38 1038.17 94.41 1040.96 94.46 1043.92 94.51 1047.02 94.58 1050.22 94.67 1053.48 94.77 1056.78 94.89 1060.08 95.03 1063.34 95.19 1066.58 95.38 1069.86 95.58 1073.16 95.8 1076.51 96.04 1079.9 96.3 1083.36 96.57 1086.88 96.86 1090.48 97.16 1094.15 97.48 1097.92 97.81 1101.76 98.15 1105.66 98.5 1109.62 98.87 1113.65 99.26 1117.75 99.65 1121.94 100.07 1126.22 100.49 1130.59 100.93 1135.07 101.38 1139.65 101.84 1144.34 102.31 1149.11 102.8 1153.97 103.3 1158.92 103.82 1163.97 104.34 1169.12 104.88 1174.37 105.43 1179.73 106 1185.2 106.57 1190.78 107.16 1196.48 107.77 1202.29 108.38 1208.21 109.01 1214.24 109.65 1220.37 110.31 1226.6 110.97 1232.93 111.65 1239.36 112.33 1245.89 113.03 1252.5 113.74 1259.24 114.45 1266.12 115.18 1273.13 115.93 1280.25 116.69 1287.45 117.45 1294.71 118.22 1302.01 119 1309.34 119.78 1316.66 120.56 1323.97 121.34 1331.31 122.12 1338.75 122.92 1346.26 123.72 1353.8 124.53 1361.35 125.34 1368.89 126.14 1376.38 126.94 1383.79 127.73 1391.11 128.52 1398.29 129.28 1405.41 130.04 1412.52 130.79 1419.6 131.54 1426.62 132.29 1433.57 133.02 1440.4 133.75 1447.11 134.46 1453.65 135.15 1460.01 135.82 1466.15 136.48 1472.11 137.11 1477.92 137.73 1483.58 138.34 1489.08 138.93 1494.44 139.5 1499.64 140.06 1504.7 140.6 1509.59 141.13 1514.34 141.64 1518.93 142.13 1523.34 142.6 1527.56 143.04 1531.6 143.47 1535.49 143.89 1539.23 144.29 1542.85 144.67 1546.36 145.04 1549.77 145.4 1553.1 145.76 1556.37 146.11 1559.56 146.45 1562.64 146.78 1565.62 147.09 1568.5 147.4 1571.28 147.7 1573.97 147.99 1576.56 148.27 1579.05 148.53 1581.46 148.79 1583.78 149.04 1585.99 149.27 1588.1 149.5 1590.11 149.71 1592.02 149.91 1593.84 150.1 1595.57 150.28 1597.23 150.46 1598.82 150.62 1600.35 150.78 1601.81 150.94 1603.19 151.09 1604.45 151.22 1605.61 151.34 1606.7 151.46 1607.72 151.57 1608.7 151.68 1609.65 151.78 1610.6 151.88 1611.56 151.98 1612.54 152.09 1613.53 152.2 1614.51 152.31 1615.48 152.42 1616.44 152.54 1617.38 152.65 1618.3 152.75 1619.21 152.85 1620.11 152.94 1620.99 153.02 1621.85 153.08 1622.7 153.13 1623.52 153.17 1624.32 153.19 1625.1 153.21 1625.87 153.21 1626.64 153.22 1627.4 153.22 1628.16 153.22 1628.93 153.23 1629.71 153.24Z M1494.23 139.43 1083.36 101.04 1162.73 410.21Z" fill="#000" fill-opacity="0.41" fill-rule="evenodd"/>
</g></g>
<rect x="981.5" y="85.5" width="620" height="441" fill="none" stroke="#9a9a9a" stroke-width="1.3"/>
<line x1="975.5" y1="526.5" x2="981.5" y2="526.5" stroke="#d0d0d0" stroke-width="1.4" />
<text x="975" y="531.4" font-size="13.5" fill="#dcdcdc" text-anchor="end" >0</text>
<line x1="981.5" y1="526.5" x2="981.5" y2="532.5" stroke="#d0d0d0" stroke-width="1.4" />
<text x="981" y="546.5" font-size="13.5" fill="#dcdcdc" text-anchor="middle" >0</text>
<line x1="975.5" y1="489.82" x2="981.5" y2="489.82" stroke="#d0d0d0" stroke-width="1.4" />
<text x="975" y="494.72" font-size="13.5" fill="#dcdcdc" text-anchor="end" >0,05</text>
<line x1="1033.1" y1="526.5" x2="1033.1" y2="532.5" stroke="#d0d0d0" stroke-width="1.4" />
<text x="1032.6" y="546.5" font-size="13.5" fill="#dcdcdc" text-anchor="middle" >0,05</text>
<line x1="975.5" y1="453.14" x2="981.5" y2="453.14" stroke="#d0d0d0" stroke-width="1.4" />
<text x="975" y="458.04" font-size="13.5" fill="#dcdcdc" text-anchor="end" >0,1</text>
<line x1="1084.7" y1="526.5" x2="1084.7" y2="532.5" stroke="#d0d0d0" stroke-width="1.4" />
<text x="1084.2" y="546.5" font-size="13.5" fill="#dcdcdc" text-anchor="middle" >0,1</text>
<line x1="975.5" y1="416.46" x2="981.5" y2="416.46" stroke="#d0d0d0" stroke-width="1.4" />
<text x="975" y="421.36" font-size="13.5" fill="#dcdcdc" text-anchor="end" >0,15</text>
<line x1="1136.3" y1="526.5" x2="1136.3" y2="532.5" stroke="#d0d0d0" stroke-width="1.4" />
<text x="1135.8" y="546.5" font-size="13.5" fill="#dcdcdc" text-anchor="middle" >0,15</text>
<line x1="975.5" y1="379.78" x2="981.5" y2="379.78" stroke="#d0d0d0" stroke-width="1.4" />
<text x="975" y="384.68" font-size="13.5" fill="#dcdcdc" text-anchor="end" >0,2</text>
<line x1="1187.9" y1="526.5" x2="1187.9" y2="532.5" stroke="#d0d0d0" stroke-width="1.4" />
<text x="1187.4" y="546.5" font-size="13.5" fill="#dcdcdc" text-anchor="middle" >0,2</text>
<line x1="975.5" y1="343.1" x2="981.5" y2="343.1" stroke="#d0d0d0" stroke-width="1.4" />
<text x="975" y="348" font-size="13.5" fill="#dcdcdc" text-anchor="end" >0,25</text>
<line x1="1239.5" y1="526.5" x2="1239.5" y2="532.5" stroke="#d0d0d0" stroke-width="1.4" />
<text x="1239" y="546.5" font-size="13.5" fill="#dcdcdc" text-anchor="middle" >0,25</text>
<line x1="975.5" y1="306.42" x2="981.5" y2="306.42" stroke="#d0d0d0" stroke-width="1.4" />
<text x="975" y="311.32" font-size="13.5" fill="#dcdcdc" text-anchor="end" >0,3</text>
<line x1="1291.1" y1="526.5" x2="1291.1" y2="532.5" stroke="#d0d0d0" stroke-width="1.4" />
<text x="1290.6" y="546.5" font-size="13.5" fill="#dcdcdc" text-anchor="middle" >0,3</text>
<line x1="975.5" y1="269.74" x2="981.5" y2="269.74" stroke="#d0d0d0" stroke-width="1.4" />
<text x="975" y="274.64" font-size="13.5" fill="#dcdcdc" text-anchor="end" >0,35</text>
<line x1="1342.7" y1="526.5" x2="1342.7" y2="532.5" stroke="#d0d0d0" stroke-width="1.4" />
<text x="1342.2" y="546.5" font-size="13.5" fill="#dcdcdc" text-anchor="middle" >0,35</text>
<line x1="975.5" y1="233.06" x2="981.5" y2="233.06" stroke="#d0d0d0" stroke-width="1.4" />
<text x="975" y="237.96" font-size="13.5" fill="#dcdcdc" text-anchor="end" >0,4</text>
<line x1="1394.3" y1="526.5" x2="1394.3" y2="532.5" stroke="#d0d0d0" stroke-width="1.4" />
<text x="1393.8" y="546.5" font-size="13.5" fill="#dcdcdc" text-anchor="middle" >0,4</text>
<line x1="975.5" y1="196.38" x2="981.5" y2="196.38" stroke="#d0d0d0" stroke-width="1.4" />
<text x="975" y="201.28" font-size="13.5" fill="#dcdcdc" text-anchor="end" >0,45</text>
<line x1="1445.9" y1="526.5" x2="1445.9" y2="532.5" stroke="#d0d0d0" stroke-width="1.4" />
<text x="1445.4" y="546.5" font-size="13.5" fill="#dcdcdc" text-anchor="middle" >0,45</text>
<line x1="975.5" y1="159.7" x2="981.5" y2="159.7" stroke="#d0d0d0" stroke-width="1.4" />
<text x="975" y="164.6" font-size="13.5" fill="#dcdcdc" text-anchor="end" >0,5</text>
<line x1="1497.5" y1="526.5" x2="1497.5" y2="532.5" stroke="#d0d0d0" stroke-width="1.4" />
<text x="1497" y="546.5" font-size="13.5" fill="#dcdcdc" text-anchor="middle" >0,5</text>
<line x1="975.5" y1="123.02" x2="981.5" y2="123.02" stroke="#d0d0d0" stroke-width="1.4" />
<text x="975" y="127.92" font-size="13.5" fill="#dcdcdc" text-anchor="end" >0,55</text>
<line x1="1549.1" y1="526.5" x2="1549.1" y2="532.5" stroke="#d0d0d0" stroke-width="1.4" />
<text x="1548.6" y="546.5" font-size="13.5" fill="#dcdcdc" text-anchor="middle" >0,55</text>
<rect x="1354" y="497" width="244" height="25" fill="#333333" />
<text x="1354.5" y="516.2" font-size="17.8" fill="#f2f2f2" textLength="215" lengthAdjust="spacingAndGlyphs" style="white-space:pre">Gamut Coverage:  99,8%</text>
<rect x="1076.2" y="94.4" width="13.6" height="13.2" fill="none" stroke="#fff" stroke-width="1.3"/>
<ellipse cx="1076.5" cy="100" rx="4" ry="3.7" fill="#009800" stroke="#000" stroke-width="1"/>
<rect x="1175.2" y="104.2" width="13.6" height="13.2" fill="none" stroke="#fff" stroke-width="1.3"/>
<ellipse cx="1198.1" cy="112" rx="4.4" ry="3.6" fill="#9c9c00" stroke="#000" stroke-width="1"/>
<rect x="1486.25" y="132.4" width="14.5" height="13.2" fill="none" stroke="#fff" stroke-width="1.3"/>
<ellipse cx="1501.6" cy="140.1" rx="3.6" ry="3.4" fill="#b00000" stroke="#000" stroke-width="1"/>
<rect x="1096.2" y="174.9" width="13.6" height="13.2" fill="none" stroke="#fff" stroke-width="1.3"/>
<ellipse cx="1097.4" cy="196.6" rx="4" ry="3.7" fill="#00b0a8" stroke="#000" stroke-width="1"/>
<rect x="1314" y="274.1" width="14" height="13.2" fill="none" stroke="#fff" stroke-width="1.3"/>
<ellipse cx="1315.5" cy="286.7" rx="4" ry="3.7" fill="#9a009a" stroke="#000" stroke-width="1"/>
<rect x="1155.35" y="403.25" width="14.5" height="12.5" fill="none" stroke="#fff" stroke-width="1.3"/>
<ellipse cx="1147.4" cy="417.3" rx="3.8" ry="3.6" fill="#0000a0" stroke="#000" stroke-width="1"/>
<rect x="1171.4" y="166.5" width="13.2" height="13" fill="none" stroke="#000" stroke-width="1.7"/>
<ellipse cx="1184.5" cy="184" rx="4.2" ry="3.6" fill="#ffffff" stroke="#000" stroke-width="1"/>
<text x="8.4" y="616.6" font-size="26.3" fill="#f2f2f2" textLength="212" lengthAdjust="spacingAndGlyphs" >Current Reading</text>
<text x="8.4" y="679.8" font-size="21.5" fill="#f2f2f2" textLength="99.2" lengthAdjust="spacingAndGlyphs" >x: 0,3086</text>
<text x="160" y="679.8" font-size="21.5" fill="#f2f2f2" textLength="100" lengthAdjust="spacingAndGlyphs" >y: 0,3228</text>
<text x="8.4" y="716" font-size="21.5" fill="#f2f2f2" textLength="106.8" lengthAdjust="spacingAndGlyphs" >fL: 100,68</text>
<text x="8.4" y="752.8" font-size="21.5" fill="#f2f2f2" textLength="153.6" lengthAdjust="spacingAndGlyphs" >cd/m²: 344,97</text>
<text x="446.5" y="588.3" font-size="13.5" fill="#dcdcdc" text-anchor="middle" textLength="81" lengthAdjust="spacingAndGlyphs" >RGB Balance</text>
<rect x="336.5" y="592.5" width="246" height="162" fill="#262626" />
<line x1="336.5" y1="620.5" x2="582.5" y2="620.5" stroke="#909090" stroke-width="1" />
<line x1="336.5" y1="674.5" x2="582.5" y2="674.5" stroke="#909090" stroke-width="1" />
<line x1="336.5" y1="728.5" x2="582.5" y2="728.5" stroke="#909090" stroke-width="1" />
<rect x="362" y="648.5" width="64.5" height="26" fill="url(#g227)" stroke="#000" stroke-width="1"/>
<rect x="428" y="674.5" width="64.5" height="14" fill="url(#g228)" stroke="#000" stroke-width="1"/>
<rect x="494" y="613.5" width="64.5" height="61" fill="url(#g229)" stroke="#000" stroke-width="1"/>
<rect x="336.5" y="592.5" width="246" height="162" fill="none" stroke="#909090" stroke-width="1"/>
<line x1="331" y1="620.5" x2="336.5" y2="620.5" stroke="#b0b0b0" stroke-width="1" />
<text x="330.5" y="625.3" font-size="13.5" fill="#dcdcdc" text-anchor="end" >20</text>
<line x1="331" y1="674.5" x2="336.5" y2="674.5" stroke="#b0b0b0" stroke-width="1" />
<text x="330.5" y="679.3" font-size="13.5" fill="#dcdcdc" text-anchor="end" >0</text>
<line x1="331" y1="728.5" x2="336.5" y2="728.5" stroke="#b0b0b0" stroke-width="1" />
<text x="330.5" y="733.3" font-size="13.5" fill="#dcdcdc" text-anchor="end" >-20</text>
<line x1="336.5" y1="754.5" x2="336.5" y2="759.5" stroke="#b0b0b0" stroke-width="1" />
<line x1="582.5" y1="754.5" x2="582.5" y2="759.5" stroke="#b0b0b0" stroke-width="1" />
<text x="459.3" y="769" font-size="13.5" fill="#dcdcdc" text-anchor="middle" textLength="37" lengthAdjust="spacingAndGlyphs" >100W</text>
<text x="776.4" y="580.8" font-size="13.5" fill="#dcdcdc" text-anchor="middle" textLength="74" lengthAdjust="spacingAndGlyphs" >CIE 1931 xy</text>
<clipPath id="c31"><rect x="611" y="585" width="331" height="178"/></clipPath><g clip-path="url(#c31)">
<rect x="611" y="585" width="331" height="2.6" fill="url(#g230)" />
<rect x="611" y="587" width="331" height="2.6" fill="url(#g231)" />
<rect x="611" y="589" width="331" height="2.6" fill="url(#g232)" />
<rect x="611" y="591" width="331" height="2.6" fill="url(#g233)" />
<rect x="611" y="593" width="331" height="2.6" fill="url(#g234)" />
<rect x="611" y="595" width="331" height="2.6" fill="url(#g235)" />
<rect x="611" y="597" width="331" height="2.6" fill="url(#g236)" />
<rect x="611" y="599" width="331" height="2.6" fill="url(#g237)" />
<rect x="611" y="601" width="331" height="2.6" fill="url(#g238)" />
<rect x="611" y="603" width="331" height="2.6" fill="url(#g239)" />
<rect x="611" y="605" width="331" height="2.6" fill="url(#g240)" />
<rect x="611" y="607" width="331" height="2.6" fill="url(#g241)" />
<rect x="611" y="609" width="331" height="2.6" fill="url(#g242)" />
<rect x="611" y="611" width="331" height="2.6" fill="url(#g243)" />
<rect x="611" y="613" width="331" height="2.6" fill="url(#g244)" />
<rect x="611" y="615" width="331" height="2.6" fill="url(#g245)" />
<rect x="611" y="617" width="331" height="2.6" fill="url(#g246)" />
<rect x="611" y="619" width="331" height="2.6" fill="url(#g247)" />
<rect x="611" y="621" width="331" height="2.6" fill="url(#g248)" />
<rect x="611" y="623" width="331" height="2.6" fill="url(#g249)" />
<rect x="611" y="625" width="331" height="2.6" fill="url(#g250)" />
<rect x="611" y="627" width="331" height="2.6" fill="url(#g251)" />
<rect x="611" y="629" width="331" height="2.6" fill="url(#g252)" />
<rect x="611" y="631" width="331" height="2.6" fill="url(#g253)" />
<rect x="611" y="633" width="331" height="2.6" fill="url(#g254)" />
<rect x="611" y="635" width="331" height="2.6" fill="url(#g255)" />
<rect x="611" y="637" width="331" height="2.6" fill="url(#g256)" />
<rect x="611" y="639" width="331" height="2.6" fill="url(#g257)" />
<rect x="611" y="641" width="331" height="2.6" fill="url(#g258)" />
<rect x="611" y="643" width="331" height="2.6" fill="url(#g259)" />
<rect x="611" y="645" width="331" height="2.6" fill="url(#g260)" />
<rect x="611" y="647" width="331" height="2.6" fill="url(#g261)" />
<rect x="611" y="649" width="331" height="2.6" fill="url(#g262)" />
<rect x="611" y="651" width="331" height="2.6" fill="url(#g263)" />
<rect x="611" y="653" width="331" height="2.6" fill="url(#g264)" />
<rect x="611" y="655" width="331" height="2.6" fill="url(#g265)" />
<rect x="611" y="657" width="331" height="2.6" fill="url(#g266)" />
<rect x="611" y="659" width="331" height="2.6" fill="url(#g267)" />
<rect x="611" y="661" width="331" height="2.6" fill="url(#g268)" />
<rect x="611" y="663" width="331" height="2.6" fill="url(#g269)" />
<rect x="611" y="665" width="331" height="2.6" fill="url(#g270)" />
<rect x="611" y="667" width="331" height="2.6" fill="url(#g271)" />
<rect x="611" y="669" width="331" height="2.6" fill="url(#g272)" />
<rect x="611" y="671" width="331" height="2.6" fill="url(#g273)" />
<rect x="611" y="673" width="331" height="2.6" fill="url(#g274)" />
<rect x="611" y="675" width="331" height="2.6" fill="url(#g275)" />
<rect x="611" y="677" width="331" height="2.6" fill="url(#g276)" />
<rect x="611" y="679" width="331" height="2.6" fill="url(#g277)" />
<rect x="611" y="681" width="331" height="2.6" fill="url(#g278)" />
<rect x="611" y="683" width="331" height="2.6" fill="url(#g279)" />
<rect x="611" y="685" width="331" height="2.6" fill="url(#g280)" />
<rect x="611" y="687" width="331" height="2.6" fill="url(#g281)" />
<rect x="611" y="689" width="331" height="2.6" fill="url(#g282)" />
<rect x="611" y="691" width="331" height="2.6" fill="url(#g283)" />
<rect x="611" y="693" width="331" height="2.6" fill="url(#g284)" />
<rect x="611" y="695" width="331" height="2.6" fill="url(#g285)" />
<rect x="611" y="697" width="331" height="2.6" fill="url(#g286)" />
<rect x="611" y="699" width="331" height="2.6" fill="url(#g287)" />
<rect x="611" y="701" width="331" height="2.6" fill="url(#g288)" />
<rect x="611" y="703" width="331" height="2.6" fill="url(#g289)" />
<rect x="611" y="705" width="331" height="2.6" fill="url(#g290)" />
<rect x="611" y="707" width="331" height="2.6" fill="url(#g291)" />
<rect x="611" y="709" width="331" height="2.6" fill="url(#g292)" />
<rect x="611" y="711" width="331" height="2.6" fill="url(#g293)" />
<rect x="611" y="713" width="331" height="2.6" fill="url(#g294)" />
<rect x="611" y="715" width="331" height="2.6" fill="url(#g295)" />
<rect x="611" y="717" width="331" height="2.6" fill="url(#g296)" />
<rect x="611" y="719" width="331" height="2.6" fill="url(#g297)" />
<rect x="611" y="721" width="331" height="2.6" fill="url(#g298)" />
<rect x="611" y="723" width="331" height="2.6" fill="url(#g299)" />
<rect x="611" y="725" width="331" height="2.6" fill="url(#g300)" />
<rect x="611" y="727" width="331" height="2.6" fill="url(#g301)" />
<rect x="611" y="729" width="331" height="2.6" fill="url(#g302)" />
<rect x="611" y="731" width="331" height="2.6" fill="url(#g303)" />
<rect x="611" y="733" width="331" height="2.6" fill="url(#g304)" />
<rect x="611" y="735" width="331" height="2.6" fill="url(#g305)" />
<rect x="611" y="737" width="331" height="2.6" fill="url(#g306)" />
<rect x="611" y="739" width="331" height="2.6" fill="url(#g307)" />
<rect x="611" y="741" width="331" height="2.6" fill="url(#g308)" />
<rect x="611" y="743" width="331" height="2.6" fill="url(#g309)" />
<rect x="611" y="745" width="331" height="2.6" fill="url(#g310)" />
<rect x="611" y="747" width="331" height="2.6" fill="url(#g311)" />
<rect x="611" y="749" width="331" height="2.6" fill="url(#g312)" />
<rect x="611" y="751" width="331" height="2.6" fill="url(#g313)" />
<rect x="611" y="753" width="331" height="2.6" fill="url(#g314)" />
<rect x="611" y="755" width="331" height="2.6" fill="url(#g315)" />
<rect x="611" y="757" width="331" height="2.6" fill="url(#g316)" />
<rect x="611" y="759" width="331" height="2.6" fill="url(#g317)" />
<rect x="611" y="761" width="331" height="2.6" fill="url(#g318)" />
</g>
<rect x="611.5" y="585.5" width="330" height="177" fill="none" stroke="#a8a8a8" stroke-width="1"/>
<rect x="769.5" y="667.5" width="14" height="12" fill="none" stroke="#000" stroke-width="1.2"/>
<ellipse cx="746.8" cy="749.8" rx="4.6" ry="3.6" fill="#fff" stroke="#000" stroke-width="0.9"/>
<ellipse cx="748.6" cy="749.2" rx="5" ry="3.8" fill="#fff" stroke="#000" stroke-width="0.9"/>
<rect x="959.5" y="572" width="614.5" height="36" fill="url(#g319)" />
<rect x="959.5" y="572" width="13.7" height="36" fill="#000" />
<clipPath id="ct"><rect x="959.5" y="572" width="614.5" height="178"/></clipPath><g clip-path="url(#ct)">
<text x="1048.3" y="596.6" font-size="18" fill="#f4f4f4" textLength="40.2" lengthAdjust="spacingAndGlyphs" >White</text>
<text x="1124.7" y="596.6" font-size="18" fill="#f4f4f4" textLength="25.5" lengthAdjust="spacingAndGlyphs" >Red</text>
<text x="1192.3" y="596.6" font-size="18" fill="#f4f4f4" textLength="41.3" lengthAdjust="spacingAndGlyphs" >Green</text>
<text x="1269.3" y="596.6" font-size="18" fill="#f4f4f4" textLength="29.7" lengthAdjust="spacingAndGlyphs" >Blue</text>
<text x="1336.8" y="596.6" font-size="18" fill="#f4f4f4" textLength="32.6" lengthAdjust="spacingAndGlyphs" >Cyan</text>
<text x="1413.8" y="596.6" font-size="18" fill="#f4f4f4" textLength="59.9" lengthAdjust="spacingAndGlyphs" >Magenta</text>
<text x="1482.6" y="596.6" font-size="18" fill="#f4f4f4" textLength="43.6" lengthAdjust="spacingAndGlyphs" >Yellow</text>
<text x="1560" y="596.6" font-size="18" fill="#f4f4f4" textLength="40" lengthAdjust="spacingAndGlyphs" >100W</text>
<rect x="959.5" y="607.8" width="614.5" height="32.2" fill="url(#g320)" />
<rect x="959.5" y="607.8" width="13.7" height="32.2" fill="url(#g322)" />
<text x="978" y="630.7" font-size="18" fill="#f4f4f4" textLength="56.1" lengthAdjust="spacingAndGlyphs" >x: CIE31</text>
<text x="1048.3" y="630.7" font-size="18" fill="#f4f4f4" textLength="48.44" lengthAdjust="spacingAndGlyphs" >0,3079</text>
<text x="1124.7" y="630.7" font-size="18" fill="#f4f4f4" textLength="48.44" lengthAdjust="spacingAndGlyphs" >0,6826</text>
<text x="1192.3" y="630.7" font-size="18" fill="#f4f4f4" textLength="48.44" lengthAdjust="spacingAndGlyphs" >0,2533</text>
<text x="1269.3" y="630.7" font-size="18" fill="#f4f4f4" textLength="48.44" lengthAdjust="spacingAndGlyphs" >0,1369</text>
<text x="1336.8" y="630.7" font-size="18" fill="#f4f4f4" textLength="48.44" lengthAdjust="spacingAndGlyphs" >0,1853</text>
<text x="1413.8" y="630.7" font-size="18" fill="#f4f4f4" textLength="48.44" lengthAdjust="spacingAndGlyphs" >0,3336</text>
<text x="1482.6" y="630.7" font-size="18" fill="#f4f4f4" textLength="48.44" lengthAdjust="spacingAndGlyphs" >0,4443</text>
<text x="1560" y="630.7" font-size="18" fill="#f4f4f4" textLength="48.44" lengthAdjust="spacingAndGlyphs" >0,3127</text>
<rect x="959.5" y="640" width="614.5" height="32.3" fill="url(#g321)" />
<rect x="959.5" y="640" width="13.7" height="32.3" fill="url(#g322)" />
<text x="978" y="662.9" font-size="18" fill="#ececec" textLength="56.1" lengthAdjust="spacingAndGlyphs" >y: CIE31</text>
<text x="1048.3" y="662.9" font-size="18" fill="#ececec" textLength="48.44" lengthAdjust="spacingAndGlyphs" >0,3224</text>
<text x="1124.7" y="662.9" font-size="18" fill="#ececec" textLength="48.44" lengthAdjust="spacingAndGlyphs" >0,3156</text>
<text x="1192.3" y="662.9" font-size="18" fill="#ececec" textLength="48.44" lengthAdjust="spacingAndGlyphs" >0,7009</text>
<text x="1269.3" y="662.9" font-size="18" fill="#ececec" textLength="48.44" lengthAdjust="spacingAndGlyphs" >0,0557</text>
<text x="1336.8" y="662.9" font-size="18" fill="#ececec" textLength="48.44" lengthAdjust="spacingAndGlyphs" >0,3253</text>
<text x="1413.8" y="662.9" font-size="18" fill="#ececec" textLength="48.44" lengthAdjust="spacingAndGlyphs" >0,1492</text>
<text x="1482.6" y="662.9" font-size="18" fill="#ececec" textLength="48.44" lengthAdjust="spacingAndGlyphs" >0,5300</text>
<text x="1560" y="662.9" font-size="18" fill="#ececec" textLength="48.44" lengthAdjust="spacingAndGlyphs" >0,3290</text>
<rect x="959.5" y="672.3" width="614.5" height="32.5" fill="url(#g320)" />
<rect x="959.5" y="672.3" width="13.7" height="32.5" fill="url(#g322)" />
<text x="978" y="695.2" font-size="18" fill="#f4f4f4" textLength="9" lengthAdjust="spacingAndGlyphs" >Y</text>
<text x="1048.3" y="695.2" font-size="18" fill="#f4f4f4" textLength="66.06" lengthAdjust="spacingAndGlyphs" >195,0070</text>
<text x="1124.7" y="695.2" font-size="18" fill="#f4f4f4" textLength="57.25" lengthAdjust="spacingAndGlyphs" >56,6105</text>
<text x="1192.3" y="695.2" font-size="18" fill="#f4f4f4" textLength="66.06" lengthAdjust="spacingAndGlyphs" >156,6405</text>
<text x="1269.3" y="695.2" font-size="18" fill="#f4f4f4" textLength="57.25" lengthAdjust="spacingAndGlyphs" >17,0398</text>
<text x="1336.8" y="695.2" font-size="18" fill="#f4f4f4" textLength="66.06" lengthAdjust="spacingAndGlyphs" >162,4795</text>
<text x="1413.8" y="695.2" font-size="18" fill="#f4f4f4" textLength="57.25" lengthAdjust="spacingAndGlyphs" >67,9569</text>
<text x="1482.6" y="695.2" font-size="18" fill="#f4f4f4" textLength="66.06" lengthAdjust="spacingAndGlyphs" >206,2823</text>
<text x="1560" y="695.2" font-size="18" fill="#f4f4f4" textLength="66.06" lengthAdjust="spacingAndGlyphs" >344,9700</text>
<rect x="959.5" y="704.8" width="614.5" height="32.2" fill="url(#g321)" />
<rect x="959.5" y="704.8" width="13.7" height="32.2" fill="url(#g322)" />
<text x="978" y="727.7" font-size="18" fill="#ececec" textLength="58.7" lengthAdjust="spacingAndGlyphs" >Target Y</text>
<text x="1048.3" y="727.7" font-size="18" fill="#ececec" textLength="66.06" lengthAdjust="spacingAndGlyphs" >195,0070</text>
<text x="1124.7" y="727.7" font-size="18" fill="#ececec" textLength="57.25" lengthAdjust="spacingAndGlyphs" >40,8617</text>
<text x="1192.3" y="727.7" font-size="18" fill="#ececec" textLength="66.06" lengthAdjust="spacingAndGlyphs" >140,7007</text>
<text x="1269.3" y="727.7" font-size="18" fill="#ececec" textLength="57.25" lengthAdjust="spacingAndGlyphs" >13,4446</text>
<text x="1336.8" y="727.7" font-size="18" fill="#ececec" textLength="66.06" lengthAdjust="spacingAndGlyphs" >154,1453</text>
<text x="1413.8" y="727.7" font-size="18" fill="#ececec" textLength="57.25" lengthAdjust="spacingAndGlyphs" >54,3063</text>
<text x="1482.6" y="727.7" font-size="18" fill="#ececec" textLength="66.06" lengthAdjust="spacingAndGlyphs" >181,5624</text>
<text x="1560" y="727.7" font-size="18" fill="#ececec" textLength="66.06" lengthAdjust="spacingAndGlyphs" >344,9700</text>
<rect x="959.5" y="737" width="614.5" height="32.3" fill="url(#g320)" />
<rect x="959.5" y="737" width="13.7" height="32.3" fill="url(#g322)" />
<text x="978" y="759.9" font-size="18" fill="#f4f4f4" textLength="58.02" lengthAdjust="spacingAndGlyphs" >ΔE 2000</text>
<text x="1048.3" y="759.9" font-size="18" fill="#f4f4f4" textLength="57.25" lengthAdjust="spacingAndGlyphs" >12,3645</text>
<text x="1124.7" y="759.9" font-size="18" fill="#f4f4f4" textLength="48.44" lengthAdjust="spacingAndGlyphs" >6,5893</text>
<text x="1192.3" y="759.9" font-size="18" fill="#f4f4f4" textLength="48.44" lengthAdjust="spacingAndGlyphs" >2,8887</text>
<text x="1269.3" y="759.9" font-size="18" fill="#f4f4f4" textLength="48.44" lengthAdjust="spacingAndGlyphs" >4,0312</text>
<text x="1336.8" y="759.9" font-size="18" fill="#f4f4f4" textLength="48.44" lengthAdjust="spacingAndGlyphs" >6,6613</text>
<text x="1413.8" y="759.9" font-size="18" fill="#f4f4f4" textLength="48.44" lengthAdjust="spacingAndGlyphs" >5,2409</text>
<text x="1482.6" y="759.9" font-size="18" fill="#f4f4f4" textLength="48.44" lengthAdjust="spacingAndGlyphs" >5,7493</text>
<text x="1560" y="759.9" font-size="18" fill="#f4f4f4" textLength="57.25" lengthAdjust="spacingAndGlyphs" >14,0810</text>
</g>
<rect x="1574" y="607.8" width="15.8" height="142.2" fill="#595959" />
<rect x="1575.5" y="609.5" width="14" height="16.5" rx="3" fill="url(#g323)" stroke="#848484" stroke-width="1"/>
<path d="M1577.5 620.5h10l-5-6.5z" fill="#363636"/>
<rect x="1575.5" y="731.5" width="14" height="17" rx="3" fill="url(#g323)" stroke="#848484" stroke-width="1"/>
<path d="M1577.5 737h10l-5 6.5z" fill="#363636"/>
<rect x="1575.8" y="630" width="12.6" height="76.5" rx="6" fill="#454545"/>
<rect x="973.2" y="750" width="600.8" height="19.4" fill="#595959" />
<rect x="975" y="751.5" width="14" height="16.5" rx="3" fill="url(#g323)" stroke="#848484" stroke-width="1"/>
<path d="M985.5 754.5v10l-6.5-5z" fill="#363636"/>
<rect x="1558.5" y="751.5" width="14" height="16.5" rx="3" fill="url(#g323)" stroke="#848484" stroke-width="1"/>
<path d="M1562.5 754.5v10l6.5-5z" fill="#363636"/>
<rect x="992" y="752.5" width="513" height="14.5" rx="7" fill="#454545"/>
<rect x="0" y="783" width="1126" height="80" fill="#2b2b2b" />
<path d="M-5.4 870V784Q-5.4 778 0.6 778H126.8Q132.8 778 132.8 784V870Z" fill="url(#g324)"/>
<path d="M-4.9 870V784Q-4.9 778.5 0.6 778.5H126.8Q132.3 778.5 132.3 784V870" fill="none" stroke="#c8c8c8" stroke-opacity="0.55" stroke-width="1"/>
<rect x="2.2" y="785.7" width="123.6" height="54" rx="5" fill="#bebebe"/>
<path d="M2.9 838V791Q2.9 786.4 7.7 786.4H121.2" fill="none" stroke="#000" stroke-opacity="0.3" stroke-width="1.4"/>
<text x="63.8" y="863" font-size="16" fill="#303030" text-anchor="middle" font-weight="bold" >White</text>
<path d="M136.2 870V784Q136.2 778 142.2 778H268.4Q274.4 778 274.4 784V870Z" fill="url(#g324)"/>
<path d="M136.7 870V784Q136.7 778.5 142.2 778.5H268.4Q273.9 778.5 273.9 784V870" fill="none" stroke="#c8c8c8" stroke-opacity="0.55" stroke-width="1"/>
<rect x="143.8" y="785.7" width="123.6" height="54" rx="5" fill="#c00000"/>
<path d="M144.5 838V791Q144.5 786.4 149.3 786.4H262.8" fill="none" stroke="#000" stroke-opacity="0.3" stroke-width="1.4"/>
<text x="205.4" y="863" font-size="16" fill="#303030" text-anchor="middle" font-weight="bold" >Red</text>
<path d="M277.8 870V784Q277.8 778 283.8 778H410Q416 778 416 784V870Z" fill="url(#g324)"/>
<path d="M278.3 870V784Q278.3 778.5 283.8 778.5H410Q415.5 778.5 415.5 784V870" fill="none" stroke="#c8c8c8" stroke-opacity="0.55" stroke-width="1"/>
<rect x="285.4" y="785.7" width="123.6" height="54" rx="5" fill="#00c000"/>
<path d="M286.1 838V791Q286.1 786.4 290.9 786.4H404.4" fill="none" stroke="#000" stroke-opacity="0.3" stroke-width="1.4"/>
<text x="347" y="863" font-size="16" fill="#303030" text-anchor="middle" font-weight="bold" >Green</text>
<path d="M419.4 870V784Q419.4 778 425.4 778H551.6Q557.6 778 557.6 784V870Z" fill="url(#g324)"/>
<path d="M419.9 870V784Q419.9 778.5 425.4 778.5H551.6Q557.1 778.5 557.1 784V870" fill="none" stroke="#c8c8c8" stroke-opacity="0.55" stroke-width="1"/>
<rect x="427" y="785.7" width="123.6" height="54" rx="5" fill="#0000c0"/>
<path d="M427.7 838V791Q427.7 786.4 432.5 786.4H546" fill="none" stroke="#000" stroke-opacity="0.3" stroke-width="1.4"/>
<text x="488.6" y="863" font-size="16" fill="#303030" text-anchor="middle" font-weight="bold" >Blue</text>
<path d="M561 870V784Q561 778 567 778H693.2Q699.2 778 699.2 784V870Z" fill="url(#g324)"/>
<path d="M561.5 870V784Q561.5 778.5 567 778.5H693.2Q698.7 778.5 698.7 784V870" fill="none" stroke="#c8c8c8" stroke-opacity="0.55" stroke-width="1"/>
<rect x="568.6" y="785.7" width="123.6" height="54" rx="5" fill="#00c0c0"/>
<path d="M569.3 838V791Q569.3 786.4 574.1 786.4H687.6" fill="none" stroke="#000" stroke-opacity="0.3" stroke-width="1.4"/>
<text x="630.2" y="863" font-size="16" fill="#303030" text-anchor="middle" font-weight="bold" >Cyan</text>
<path d="M702.6 870V784Q702.6 778 708.6 778H834.8Q840.8 778 840.8 784V870Z" fill="url(#g324)"/>
<path d="M703.1 870V784Q703.1 778.5 708.6 778.5H834.8Q840.3 778.5 840.3 784V870" fill="none" stroke="#c8c8c8" stroke-opacity="0.55" stroke-width="1"/>
<rect x="710.2" y="785.7" width="123.6" height="54" rx="5" fill="#c000c0"/>
<path d="M710.9 838V791Q710.9 786.4 715.7 786.4H829.2" fill="none" stroke="#000" stroke-opacity="0.3" stroke-width="1.4"/>
<text x="771.8" y="863" font-size="16" fill="#303030" text-anchor="middle" font-weight="bold" >Magenta</text>
<path d="M844.2 870V784Q844.2 778 850.2 778H976.4Q982.4 778 982.4 784V870Z" fill="url(#g324)"/>
<path d="M844.7 870V784Q844.7 778.5 850.2 778.5H976.4Q981.9 778.5 981.9 784V870" fill="none" stroke="#c8c8c8" stroke-opacity="0.55" stroke-width="1"/>
<rect x="851.8" y="785.7" width="123.6" height="54" rx="5" fill="#c4c400"/>
<path d="M852.5 838V791Q852.5 786.4 857.3 786.4H970.8" fill="none" stroke="#000" stroke-opacity="0.3" stroke-width="1.4"/>
<text x="913.4" y="863" font-size="16" fill="#303030" text-anchor="middle" font-weight="bold" >Yellow</text>
<path d="M985.8 870V784Q985.8 778 991.8 778H1118Q1124 778 1124 784V870Z" fill="#242424"/>
<rect x="993.4" y="785.7" width="123.6" height="54" rx="5" fill="#ffffff"/>
<path d="M994.1 838V791Q994.1 786.4 998.9 786.4H1112.4" fill="none" stroke="#000" stroke-opacity="0.3" stroke-width="1.4"/>
<text x="1055" y="863" font-size="16" fill="#ffffff" text-anchor="middle" font-weight="bold" >100W</text>
<path d="M1128.5 805V784Q1128.5 778 1134.5 778H1194.3Q1200.3 778 1200.3 784V805Z" fill="url(#g325)"/>
<rect x="1128.5" y="806.5" width="71.8" height="60" fill="url(#g326)" />
<line x1="1128.5" y1="805.8" x2="1200.3" y2="805.8" stroke="#4a4a4a" stroke-width="1.3" />
<circle cx="1164.4" cy="792" r="11.4" fill="url(#g327)"/>
<path d="M1158 794h12.8l-6.4-6.8z" fill="#3a3a3a"/>
<rect x="1142.5" y="816.5" width="44" height="43.5" rx="7" fill="url(#g328)" stroke="#2a2a2a" stroke-width="3.4"/>
<rect x="1154" y="828" width="21" height="20" fill="#000" />
<rect x="1154" y="828" width="21" height="10" fill="#ffffff" fill-opacity="0.1"/>
<path d="M1202 822.5V778H1541.5V822.5Z" fill="url(#g329)"/>
<line x1="1271.3" y1="778" x2="1271.3" y2="822.5" stroke="#3a3a3a" stroke-width="1.3" />
<line x1="1272.5" y1="778" x2="1272.5" y2="822.5" stroke="#c0c0c0" stroke-width="0.8" stroke-opacity="0.5"/>
<line x1="1339" y1="778" x2="1339" y2="822.5" stroke="#3a3a3a" stroke-width="1.3" />
<line x1="1340.2" y1="778" x2="1340.2" y2="822.5" stroke="#c0c0c0" stroke-width="0.8" stroke-opacity="0.5"/>
<line x1="1406.5" y1="778" x2="1406.5" y2="822.5" stroke="#3a3a3a" stroke-width="1.3" />
<line x1="1407.7" y1="778" x2="1407.7" y2="822.5" stroke="#c0c0c0" stroke-width="0.8" stroke-opacity="0.5"/>
<line x1="1474" y1="778" x2="1474" y2="822.5" stroke="#3a3a3a" stroke-width="1.3" />
<line x1="1475.2" y1="778" x2="1475.2" y2="822.5" stroke="#c0c0c0" stroke-width="0.8" stroke-opacity="0.5"/>
<circle cx="1236.7" cy="800.5" r="15" fill="url(#g330)"/>
<circle cx="1305.4" cy="800.5" r="15" fill="url(#g330)"/>
<circle cx="1373.5" cy="800.5" r="15" fill="url(#g330)"/>
<circle cx="1440.6" cy="800.5" r="15" fill="url(#g330)"/>
<circle cx="1507.9" cy="800.5" r="15" fill="url(#g330)"/>
<rect x="1230.7" y="794" width="12" height="12" fill="#383838" />
<path d="M1300.5 793v14l12-7z" fill="#383838"/>
<g fill="#383838" aria-label="[···]"><path d="M1364 793.6h4.6v2.5h-1.9v10.6h1.9v2.5h-4.6z"/><path d="M1382.4 793.6h-4.6v2.5h1.9v10.6h-1.9v2.5h4.6z"/><rect x="1369.2" y="799.3" width="2.1" height="2.6"/><rect x="1373.9" y="799.3" width="2.1" height="2.6"/><rect x="1378" y="799.3" width="1.8" height="2.6"/></g>
<text x="1440.6" y="807.5" font-size="24" fill="#383838" text-anchor="middle" font-weight="bold" textLength="21" lengthAdjust="spacingAndGlyphs" >∞</text>
<g fill="none" stroke="#383838" stroke-width="3.1"><path d="M1502 799.6a6.4 6.4 0 0 1 11.2-2.6"/><path d="M1514.6 802.4a6.4 6.4 0 0 1-11.2 2.6"/></g>
<path d="M1510.2 798.6l6.8 0.6l-0.8-7.4z" fill="#383838"/><path d="M1506.4 803.4l-6.8-0.6l0.8 7.4z" fill="#383838"/>
<text font-size="92" font-weight="bold" fill="#000" fill-opacity="0.5" text-anchor="middle" transform="translate(1575.2 853.6) scale(1.06 1.13)">*</text>
<text font-size="92" font-weight="bold" fill="#e01010" text-anchor="middle" transform="translate(1573.8 851.8) scale(1.06 1.13)">*</text>
<path d="M1202 870V827.5Q1202 824.5 1205 824.5H1610V870Z" fill="url(#g331)"/>
<line x1="1202" y1="825" x2="1610" y2="825" stroke="#c8c8c8" stroke-width="1" stroke-opacity="0.6"/>
<line x1="1406.5" y1="825" x2="1406.5" y2="863" stroke="#5a5a5a" stroke-width="1.2" />
<line x1="1407.7" y1="825" x2="1407.7" y2="863" stroke="#c0c0c0" stroke-width="0.8" stroke-opacity="0.5"/>
<circle cx="1247.2" cy="847.3" r="15" fill="url(#g330)"/>
<text font-size="26" fill="#383838" text-anchor="middle" transform="translate(1247.8 859.6) scale(1.1 1.56)">«</text>
<circle cx="1568.1" cy="847.3" r="15" fill="url(#g330)"/>
<text font-size="26" fill="#383838" text-anchor="middle" transform="translate(1568.7 859.6) scale(1.1 1.56)">»</text>
<text x="1287.8" y="859.3" font-size="33" fill="#3a3a3a" textLength="76" lengthAdjust="spacingAndGlyphs" stroke="#3a3a3a" stroke-width="0.7">Back</text>
<text x="1449" y="859.3" font-size="33" fill="#3a3a3a" textLength="77" lengthAdjust="spacingAndGlyphs" stroke="#3a3a3a" stroke-width="0.7">Next</text>
</svg>
</body></html>
